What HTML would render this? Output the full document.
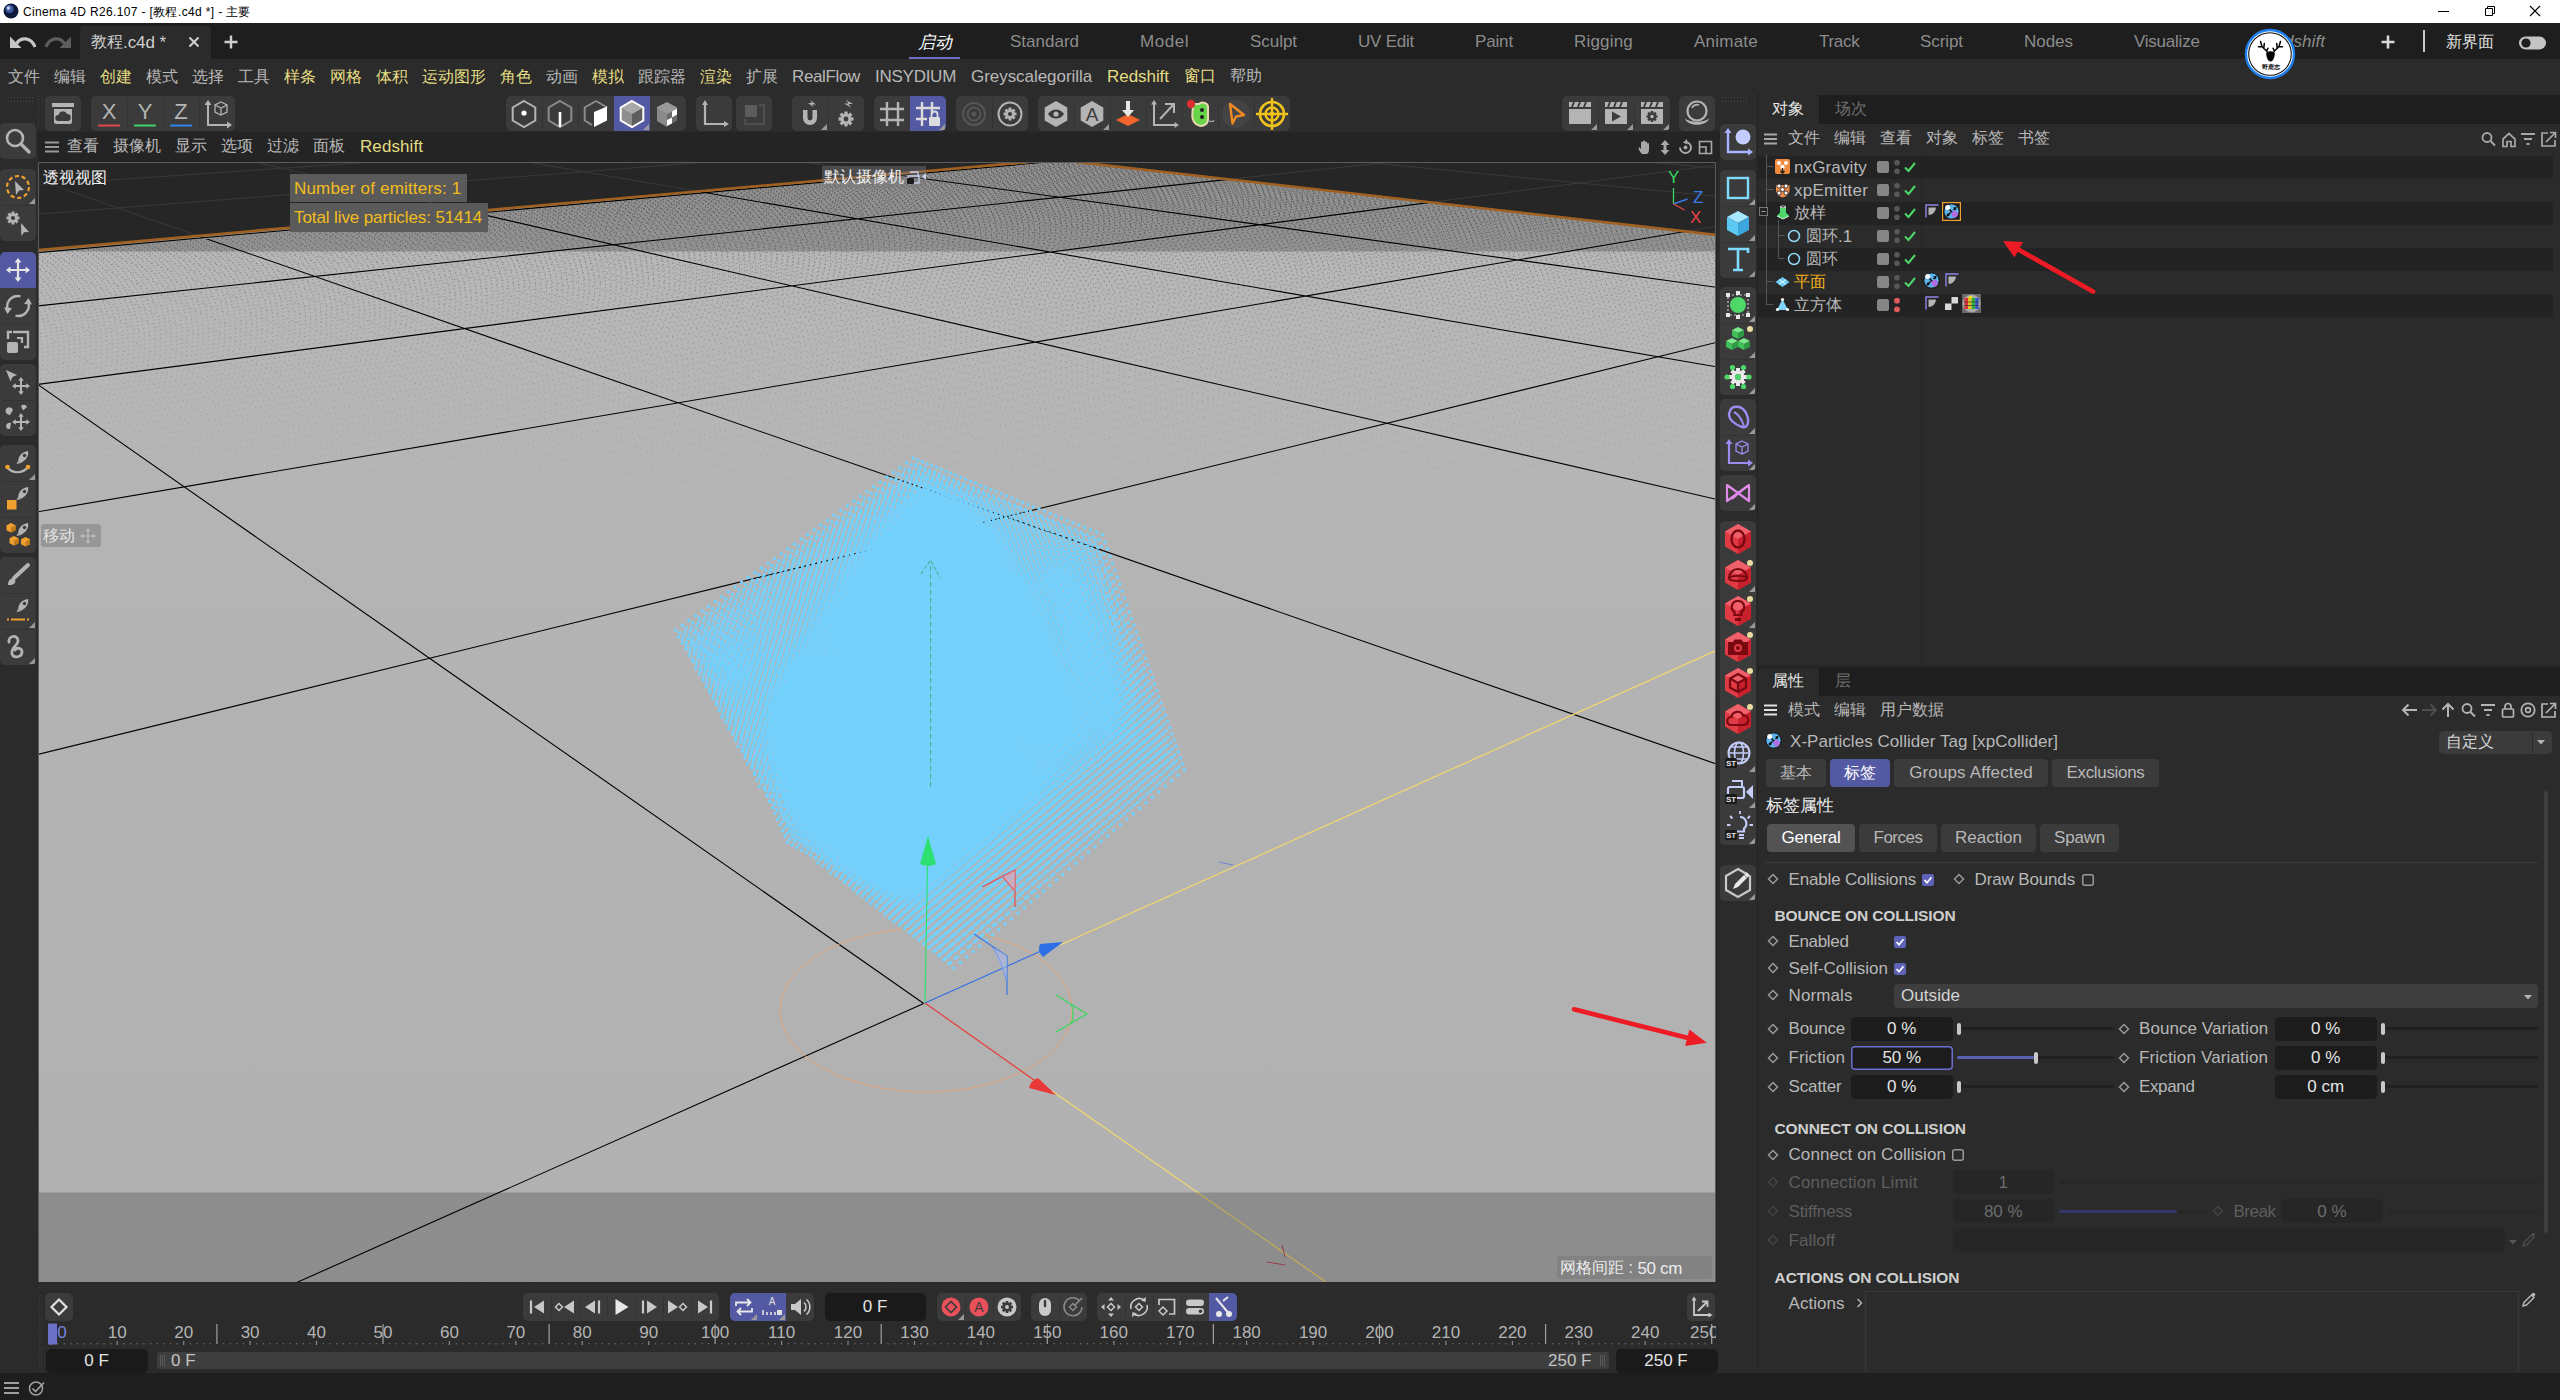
<!DOCTYPE html>
<html><head><meta charset="utf-8"><title>Cinema 4D</title><style>html,body{margin:0;padding:0}body{width:2560px;height:1400px;overflow:hidden;position:relative;background:#2b2b2b;font-family:"Liberation Sans",sans-serif}div,span,svg{position:absolute;display:block}span{white-space:nowrap}svg{overflow:hidden}</style></head><body>
<div style="left:0px;top:0px;width:2560px;height:23px;background:#fff;"></div>
<svg style="left:3px;top:3px;" width="16" height="16"><circle cx="8" cy="8" r="7.5" fill="#101a3c"/><circle cx="6.5" cy="6" r="4" fill="#3d5aa0"/><circle cx="5.5" cy="5" r="1.8" fill="#c8d4f0"/></svg>
<span style="top:4.5px;font-size:12px;line-height:14px;color:#000;letter-spacing:0.36px;left:23px;">Cinema 4D R26.107 - [</span>
<span style="top:4.5px;font-size:12px;line-height:14px;color:#000;left:153.3px;">教程</span>
<span style="top:4.5px;font-size:12px;line-height:14px;color:#000;letter-spacing:0.36px;left:178px;">.c4d *] - </span>
<span style="top:4.5px;font-size:12px;line-height:14px;color:#000;left:226.3px;">主要</span>
<svg style="left:2430px;top:0px;" width="130" height="22"><path d="M8 11.5h11" stroke="#000" stroke-width="1"/><path d="M55.5 8.5h7v7h-7z M57.5 8.5v-2h7v7h-2" fill="none" stroke="#000" stroke-width="1"/><path d="M100 6l10 10M110 6l-10 10" stroke="#000" stroke-width="1.1"/></svg>
<div style="left:0px;top:23px;width:2560px;height:36px;background:#1e1e1e;"></div>
<div style="left:80px;top:26px;width:131px;height:33px;background:#2b2b2b;border-radius:4px 4px 0 0;"></div>
<svg style="left:8px;top:30px;" width="66" height="24"><path d="M2 6.500V18H13.500z" fill="#c6c6c6"/><path d="M8.500 13.500C13 6.800 23 6.800 27 17" fill="none" stroke="#c6c6c6" stroke-width="3.200"/><path d="M63 6.500V18H51.500z" fill="#5e5e5e"/><path d="M56.500 13.500C52 6.800 42 6.800 38 17" fill="none" stroke="#5e5e5e" stroke-width="3.200"/></svg>
<span style="top:33.0px;font-size:16px;line-height:18px;color:#d0d0d0;left:91px;">教程</span>
<span style="top:32.5px;font-size:17px;line-height:19px;color:#d0d0d0;letter-spacing:-0.08px;left:123px;">.c4d *</span>
<svg style="left:187px;top:35px;" width="14" height="14"><path d="M2.5 2.5l9 9M11.5 2.5l-9 9" stroke="#d0d0d0" stroke-width="2"/></svg>
<svg style="left:223px;top:34px;" width="16" height="16"><path d="M8 1.5v13M1.5 8h13" stroke="#d0d0d0" stroke-width="2.4"/></svg>
<span style="top:32.5px;font-size:17px;line-height:19px;color:#fff;font-style:italic;left:918px;">启动</span>
<div style="left:909px;top:57px;width:51px;height:3px;background:#6c71c4;"></div>
<span style="top:31.5px;font-size:17px;line-height:19px;color:#8c8c8c;letter-spacing:0.00px;left:1010px;">Standard</span>
<span style="top:31.5px;font-size:17px;line-height:19px;color:#8c8c8c;letter-spacing:0.54px;left:1140px;">Model</span>
<span style="top:31.5px;font-size:17px;line-height:19px;color:#8c8c8c;letter-spacing:-0.04px;left:1250px;">Sculpt</span>
<span style="top:31.5px;font-size:17px;line-height:19px;color:#8c8c8c;letter-spacing:-0.23px;left:1358px;">UV Edit</span>
<span style="top:31.5px;font-size:17px;line-height:19px;color:#8c8c8c;letter-spacing:-0.15px;left:1475px;">Paint</span>
<span style="top:31.5px;font-size:17px;line-height:19px;color:#8c8c8c;letter-spacing:0.19px;left:1574px;">Rigging</span>
<span style="top:31.5px;font-size:17px;line-height:19px;color:#8c8c8c;letter-spacing:0.23px;left:1694px;">Animate</span>
<span style="top:31.5px;font-size:17px;line-height:19px;color:#8c8c8c;letter-spacing:-0.30px;left:1819px;">Track</span>
<span style="top:31.5px;font-size:17px;line-height:19px;color:#8c8c8c;letter-spacing:-0.08px;left:1920px;">Script</span>
<span style="top:31.5px;font-size:17px;line-height:19px;color:#8c8c8c;letter-spacing:-0.03px;left:2024px;">Nodes</span>
<span style="top:31.5px;font-size:17px;line-height:19px;color:#8c8c8c;letter-spacing:-0.23px;left:2134px;">Visualize</span>
<span style="top:31.5px;font-size:17px;line-height:19px;color:#8c8c8c;letter-spacing:0.08px;font-style:italic;left:2262px;">Redshift</span>
<svg style="left:2380px;top:34px;" width="16" height="16"><path d="M8 1.5v13M1.5 8h13" stroke="#d8d8d8" stroke-width="2.6"/></svg>
<div style="left:2423px;top:30px;width:2px;height:22px;background:#c8c8c8;"></div>
<span style="top:33.0px;font-size:16px;line-height:18px;color:#e0e0e0;left:2446px;">新界面</span>
<svg style="left:2518px;top:35px;" width="30" height="16"><rect x="1" y="1.5" width="27" height="13" rx="6.5" fill="#c4c4c4"/><circle cx="8" cy="8" r="4.6" fill="#1e1e1e"/></svg>
<div style="left:0px;top:59px;width:2560px;height:36px;background:#2b2b2b;"></div>
<span style="top:67.5px;font-size:16px;line-height:18px;color:#b8b8b8;left:8px;">文件</span>
<span style="top:67.5px;font-size:16px;line-height:18px;color:#b8b8b8;left:54px;">编辑</span>
<span style="top:67.5px;font-size:16px;line-height:18px;color:#e4dc82;left:100px;">创建</span>
<span style="top:67.5px;font-size:16px;line-height:18px;color:#b8b8b8;left:146px;">模式</span>
<span style="top:67.5px;font-size:16px;line-height:18px;color:#b8b8b8;left:192px;">选择</span>
<span style="top:67.5px;font-size:16px;line-height:18px;color:#b8b8b8;left:238px;">工具</span>
<span style="top:67.5px;font-size:16px;line-height:18px;color:#e4dc82;left:284px;">样条</span>
<span style="top:67.5px;font-size:16px;line-height:18px;color:#e4dc82;left:330px;">网格</span>
<span style="top:67.5px;font-size:16px;line-height:18px;color:#e4dc82;left:376px;">体积</span>
<span style="top:67.5px;font-size:16px;line-height:18px;color:#e4dc82;left:422px;">运动图形</span>
<span style="top:67.5px;font-size:16px;line-height:18px;color:#e4dc82;left:500px;">角色</span>
<span style="top:67.5px;font-size:16px;line-height:18px;color:#b8b8b8;left:546px;">动画</span>
<span style="top:67.5px;font-size:16px;line-height:18px;color:#e4dc82;left:592px;">模拟</span>
<span style="top:67.5px;font-size:16px;line-height:18px;color:#b8b8b8;left:638px;">跟踪器</span>
<span style="top:67.5px;font-size:16px;line-height:18px;color:#e4dc82;left:700px;">渲染</span>
<span style="top:67.5px;font-size:16px;line-height:18px;color:#b8b8b8;left:746px;">扩展</span>
<span style="top:66.5px;font-size:17px;line-height:19px;color:#b8b8b8;letter-spacing:-0.36px;left:792px;">RealFlow</span>
<span style="top:66.5px;font-size:17px;line-height:19px;color:#b8b8b8;letter-spacing:-0.26px;left:875px;">INSYDIUM</span>
<span style="top:66.5px;font-size:17px;line-height:19px;color:#b8b8b8;letter-spacing:-0.05px;left:971px;">Greyscalegorilla</span>
<span style="top:66.5px;font-size:17px;line-height:19px;color:#e4dc82;letter-spacing:-0.05px;left:1107px;">Redshift</span>
<span style="top:67.0px;font-size:16px;line-height:18px;color:#e4dc82;left:1184px;">窗口</span>
<span style="top:67.0px;font-size:16px;line-height:18px;color:#b8b8b8;left:1230px;">帮助</span>
<svg style="left:2244px;top:28px;" width="52" height="52"><circle cx="26" cy="26" r="24" fill="#fff" stroke="#1e80f0" stroke-width="2.400"/><circle cx="26" cy="26" r="21.300" fill="none" stroke="#111" stroke-width="1.100"/><path d="M26.500 33.500c-2.600 0-4.300-4.500-4.300-8.300c0-2.700 8.600-2.700 8.600 0c0 3.800-1.700 8.300-4.300 8.300z" fill="#000"/><path d="M23 23.500L18 18.500L16.500 13.500M18 18.500L14.500 18.800M19.800 20.500L20.300 15.500M22.600 23L23.900 20.300M30 23.500L35 18.500L36.500 13.500M35 18.500L38.500 18.800M33.200 20.500L32.700 15.500M30.400 23L29.100 20.300" fill="none" stroke="#000" stroke-width="1.500" stroke-linecap="round" stroke-linejoin="round"/><text x="26.500" y="41" font-size="6.300" font-family="Liberation Sans" font-weight="bold" text-anchor="middle" fill="#111">野鹿志</text></svg>
<svg style="left:45px;top:96px;background:#3b3b3b;border-radius:5px 5px 5px 5px" width="36" height="35"><path d="M7 7h22v4H7z" fill="#b4b4b4"/><path d="M9 13h18v13a2 2 0 0 1-2 2H11a2 2 0 0 1-2-2z" fill="#b4b4b4"/><path d="M13 25a3 3 0 0 1 .5-6a4.5 4.5 0 0 1 8.5-1a3.5 3.5 0 0 1 .5 7z" fill="#3b3b3b"/></svg>
<svg style="left:91px;top:96px;background:#3b3b3b;border-radius:5px 0px 0px 5px" width="36" height="35"><text x="18" y="23" font-size="22" font-family="Liberation Sans" text-anchor="middle" fill="#b4b4b4">X</text><path d="M8 29.5h20" stroke="#e0484c" stroke-width="2.2" stroke-linecap="round"/></svg>
<svg style="left:127px;top:96px;background:#3b3b3b;border-radius:0px 0px 0px 0px" width="36" height="35"><text x="18" y="23" font-size="22" font-family="Liberation Sans" text-anchor="middle" fill="#b4b4b4">Y</text><path d="M8 29.5h20" stroke="#3fd36a" stroke-width="2.2" stroke-linecap="round"/><path d="M0.5 3v29" stroke="#333" stroke-width="1"/></svg>
<svg style="left:163px;top:96px;background:#3b3b3b;border-radius:0px 0px 0px 0px" width="36" height="35"><text x="18" y="23" font-size="22" font-family="Liberation Sans" text-anchor="middle" fill="#b4b4b4">Z</text><path d="M8 29.5h20" stroke="#2f86e8" stroke-width="2.2" stroke-linecap="round"/><path d="M0.5 3v29" stroke="#333" stroke-width="1"/></svg>
<svg style="left:199px;top:96px;background:#3b3b3b;border-radius:0px 5px 5px 0px" width="36" height="35"><path d="M9 7v22h21" fill="none" stroke="#b4b4b4" stroke-width="2"/><path d="M9 4l-3.5 5h7zM33 29l-5-3.5v7z" fill="#b4b4b4"/><path d="M22 6l6 3v7l-6 3-6-3V9z M16 9l6 3 6-3M22 12v7" fill="none" stroke="#b4b4b4" stroke-width="1.3"/><path d="M0.5 3v29" stroke="#333" stroke-width="1"/></svg>
<svg style="left:506px;top:96px;background:#3b3b3b;border-radius:5px 0px 0px 5px" width="36" height="35"><path d="M18 5l11.3 6.5v13L18 31 6.7 24.5v-13z" fill="none" stroke="#b4b4b4" stroke-width="2"/><circle cx="18" cy="17" r="2.6" fill="#fff"/></svg>
<svg style="left:542px;top:96px;background:#3b3b3b;border-radius:0px 0px 0px 0px" width="36" height="35"><path d="M18 5l11.3 6.5v13L18 31 6.7 24.5v-13z" fill="none" stroke="#8c8c8c" stroke-width="2"/><path d="M18 16v15" stroke="#fff" stroke-width="2.6"/><path d="M0.5 3v29" stroke="#333" stroke-width="1"/></svg>
<svg style="left:578px;top:96px;background:#3b3b3b;border-radius:0px 0px 0px 0px" width="36" height="35"><path d="M18 5L6.7 11.5v13L14 29" fill="none" stroke="#8c8c8c" stroke-width="2"/><path d="M18 5l11.3 6.5" stroke="#8c8c8c" stroke-width="2"/><path d="M16 16l13-5.5v14L16 31z" fill="#fff"/><path d="M0.5 3v29" stroke="#333" stroke-width="1"/></svg>
<svg style="left:614px;top:96px;background:#5459a3;border-radius:0px 0px 0px 0px" width="36" height="35"><path d="M18 5l11.3 6.5v13L18 31 6.7 24.5v-13z" fill="#8e8e8e"/><path d="M18 18l11.3-6.5v13L18 31z" fill="#5e5e5e"/><path d="M18 5l11.3 6.5L18 18 6.7 11.5z" fill="#a9a9a9"/><path d="M18 5l11.3 6.5v13L18 31 6.7 24.5v-13z" fill="none" stroke="#fff" stroke-width="2"/><path d="M35 34 h-6 l6 -6z" fill="#9a9a9a"/></svg>
<svg style="left:650px;top:96px;background:#3b3b3b;border-radius:0px 5px 5px 0px" width="36" height="35"><path d="M17 6l10 5.5v3.5l-10 5-10-5.5V11z" fill="#9a9a9a"/><path d="M7 12l10 5.5V31L7 25z" fill="#8a8a8a"/><path d="M17 18l5-2.6v6L17 24zM22 21.4l5-2.6v6L22 27.4z" fill="#6a6a6a"/><path d="M22 15.4l5-2.6v6L22 21.4zM17 24l5-2.6v6L17 30z" fill="#fff"/></svg>
<svg style="left:696px;top:96px;background:#3b3b3b;border-radius:5px 5px 5px 5px" width="36" height="35"><path d="M9 7v21h21" fill="none" stroke="#b4b4b4" stroke-width="2.2"/><path d="M9 4l-3 5h6zM33 28l-5-3v6z" fill="#b4b4b4"/></svg>
<svg style="left:736px;top:96px;background:#3b3b3b;border-radius:5px 5px 5px 5px" width="36" height="35"><path d="M9 9h12v12H9z" fill="#5c5c5c"/><path d="M23 9h5v19H9v-5" fill="none" stroke="#4e4e4e" stroke-width="2"/></svg>
<svg style="left:792px;top:96px;background:#3b3b3b;border-radius:5px 0px 0px 5px" width="36" height="35"><path d="M11 14v8a7 7 0 0 0 14 0v-8h-4.5v8a2.5 2.5 0 0 1-5 0v-8z" fill="#b4b4b4"/><path d="M18 4l6 4.5h-4l2 3-6-4.5h4z" fill="#b4b4b4"/><path d="M35 34 h-6 l6 -6z" fill="#9a9a9a"/></svg>
<svg style="left:828px;top:96px;background:#3b3b3b;border-radius:0px 5px 5px 0px" width="36" height="35"><path d="M18 4l7 4h-4.5l2.5 3.5-7-4h4.5z" fill="#b4b4b4"/><g transform="translate(18,23)"><circle r="5.55" fill="#b4b4b4"/><rect x="-1.65" y="-7.50" width="3.30" height="15.00" transform="rotate(0)" fill="#b4b4b4"/><rect x="-1.65" y="-7.50" width="3.30" height="15.00" transform="rotate(45)" fill="#b4b4b4"/><rect x="-1.65" y="-7.50" width="3.30" height="15.00" transform="rotate(90)" fill="#b4b4b4"/><rect x="-1.65" y="-7.50" width="3.30" height="15.00" transform="rotate(135)" fill="#b4b4b4"/><circle r="2.40" fill="#3b3b3b"/></g><path d="M0.5 3v29" stroke="#333" stroke-width="1"/></svg>
<svg style="left:874px;top:96px;background:#3b3b3b;border-radius:5px 0px 0px 5px" width="36" height="35"><path d="M13 6v24M24 6v24M6 13h24M6 24h24" stroke="#b4b4b4" stroke-width="2.4"/></svg>
<svg style="left:910px;top:96px;background:#5459a3;border-radius:0px 5px 5px 0px" width="36" height="35"><path d="M12 6v24M22 6v12M6 12h24M6 23h11" stroke="#dcdcdc" stroke-width="2.4"/><rect x="19" y="21" width="11" height="9" rx="1" fill="#dcdcdc"/><path d="M21.5 21v-2.5a3 3 0 0 1 6 0V21" fill="none" stroke="#dcdcdc" stroke-width="1.8"/><path d="M35 34 h-6 l6 -6z" fill="#9a9a9a"/></svg>
<svg style="left:956px;top:96px;background:#3b3b3b;border-radius:5px 0px 0px 5px" width="36" height="35"><circle cx="18" cy="18" r="11" fill="none" stroke="#555" stroke-width="2"/><circle cx="18" cy="18" r="6.5" fill="none" stroke="#555" stroke-width="2"/><circle cx="18" cy="18" r="2.5" fill="#555"/></svg>
<svg style="left:992px;top:96px;background:#3b3b3b;border-radius:0px 5px 5px 0px" width="36" height="35"><circle cx="18" cy="18" r="11.5" fill="none" stroke="#b4b4b4" stroke-width="2"/><g transform="translate(18,18)"><circle r="4.81" fill="#b4b4b4"/><rect x="-1.43" y="-6.50" width="2.86" height="13.00" transform="rotate(0)" fill="#b4b4b4"/><rect x="-1.43" y="-6.50" width="2.86" height="13.00" transform="rotate(45)" fill="#b4b4b4"/><rect x="-1.43" y="-6.50" width="2.86" height="13.00" transform="rotate(90)" fill="#b4b4b4"/><rect x="-1.43" y="-6.50" width="2.86" height="13.00" transform="rotate(135)" fill="#b4b4b4"/><circle r="2.08" fill="#3b3b3b"/></g><path d="M0.5 3v29" stroke="#333" stroke-width="1"/></svg>
<svg style="left:1038px;top:96px;background:#3b3b3b;border-radius:5px 0px 0px 5px" width="36" height="35"><path d="M18 5l11.3 6.5v13L18 31 6.7 24.5v-13z" fill="#b4b4b4"/><path d="M10 18c4-6 12-6 16 0c-4 6-12 6-16 0z" fill="#3b3b3b"/><circle cx="18" cy="18" r="2.6" fill="#b4b4b4"/></svg>
<svg style="left:1074px;top:96px;background:#3b3b3b;border-radius:0px 0px 0px 0px" width="36" height="35"><path d="M18 5l11.3 6.5v13L18 31 6.7 24.5v-13z" fill="#b4b4b4"/><text x="18" y="25" font-size="19" font-family="Liberation Sans" text-anchor="middle" fill="#3b3b3b">A</text><path d="M35 34 h-6 l6 -6z" fill="#9a9a9a"/><path d="M0.5 3v29" stroke="#333" stroke-width="1"/></svg>
<svg style="left:1110px;top:96px;background:#3b3b3b;border-radius:0px 0px 0px 0px" width="36" height="35"><path d="M6 24l12-6 12 6-12 6z" fill="#f0642d"/><path d="M16 5h4v9h4l-6 7-6-7h4z" fill="#e8e8e8"/><path d="M0.5 3v29" stroke="#333" stroke-width="1"/></svg>
<svg style="left:1146px;top:96px;background:#3b3b3b;border-radius:0px 0px 0px 0px" width="36" height="35"><path d="M8 7v22h22" fill="none" stroke="#b4b4b4" stroke-width="2"/><path d="M8 4l-3 4.5h6zM33 29l-4.5-3v6z" fill="#b4b4b4"/><path d="M14 23L27 9M19 8h9v9" fill="none" stroke="#b4b4b4" stroke-width="2"/><path d="M0.5 3v29" stroke="#333" stroke-width="1"/></svg>
<svg style="left:1182px;top:96px;background:#3b3b3b;border-radius:0px 0px 0px 0px" width="36" height="35"><path d="M11 8c0 10-3 14 3 20c5 4 12 1 12-5V11c0-4-6-6-9-3z" fill="#69d34a" stroke="#e9d8b0" stroke-width="2"/><circle cx="9" cy="8" r="4.2" fill="#d83030"/><circle cx="20" cy="14" r="2" fill="#1f1f1f"/><circle cx="20" cy="21" r="2" fill="#1f1f1f"/><path d="M27 26c2-3 3 2 5-2" fill="none" stroke="#aaa" stroke-width="1.2"/><path d="M0.5 3v29" stroke="#333" stroke-width="1"/></svg>
<svg style="left:1218px;top:96px;background:#3b3b3b;border-radius:0px 0px 0px 0px" width="36" height="35"><circle cx="18" cy="18" r="14" fill="#444"/><path d="M12 8l14 11-8 1.5-3.5 7z" fill="none" stroke="#f08a24" stroke-width="2.4" stroke-linejoin="round"/><path d="M0.5 3v29" stroke="#333" stroke-width="1"/></svg>
<svg style="left:1254px;top:96px;background:#3b3b3b;border-radius:0px 5px 5px 0px" width="36" height="35"><circle cx="18" cy="18" r="12" fill="none" stroke="#f2c21c" stroke-width="2.6"/><circle cx="18" cy="18" r="6.5" fill="none" stroke="#f2c21c" stroke-width="2.4"/><path d="M18 2v32M2 18h32" stroke="#f2c21c" stroke-width="2.4"/><circle cx="18" cy="18" r="2.4" fill="#f2c21c"/><path d="M0.5 3v29" stroke="#333" stroke-width="1"/></svg>
<svg style="left:1562px;top:96px;background:#3b3b3b;border-radius:5px 0px 0px 5px" width="36" height="35"><path d="M7 13h22v15H7z" fill="#b4b4b4"/><path d="M7 6h22v5H7z" fill="#b4b4b4"/><path d="M12 6l-2 5M18 6l-2 5M24 6l-2 5" stroke="#3b3b3b" stroke-width="2"/><path d="M35 34 h-6 l6 -6z" fill="#9a9a9a"/></svg>
<svg style="left:1598px;top:96px;background:#3b3b3b;border-radius:0px 0px 0px 0px" width="36" height="35"><path d="M7 13h22v15H7z" fill="#b4b4b4"/><path d="M7 6h22v5H7z" fill="#b4b4b4"/><path d="M12 6l-2 5M18 6l-2 5M24 6l-2 5" stroke="#3b3b3b" stroke-width="2"/><path d="M14 15.5l9 5-9 5z" fill="#3b3b3b"/><path d="M35 34 h-6 l6 -6z" fill="#9a9a9a"/><path d="M0.5 3v29" stroke="#333" stroke-width="1"/></svg>
<svg style="left:1634px;top:96px;background:#3b3b3b;border-radius:0px 5px 5px 0px" width="36" height="35"><path d="M7 13h22v15H7z" fill="#b4b4b4"/><path d="M7 6h22v5H7z" fill="#b4b4b4"/><path d="M12 6l-2 5M18 6l-2 5M24 6l-2 5" stroke="#3b3b3b" stroke-width="2"/><g transform="translate(18,20.5)"><circle r="4.07" fill="#3b3b3b"/><rect x="-1.21" y="-5.50" width="2.42" height="11.00" transform="rotate(0)" fill="#3b3b3b"/><rect x="-1.21" y="-5.50" width="2.42" height="11.00" transform="rotate(45)" fill="#3b3b3b"/><rect x="-1.21" y="-5.50" width="2.42" height="11.00" transform="rotate(90)" fill="#3b3b3b"/><rect x="-1.21" y="-5.50" width="2.42" height="11.00" transform="rotate(135)" fill="#3b3b3b"/><circle r="1.76" fill="#b4b4b4"/></g><path d="M35 34 h-6 l6 -6z" fill="#9a9a9a"/><path d="M0.5 3v29" stroke="#333" stroke-width="1"/></svg>
<svg style="left:1679px;top:96px;background:#3b3b3b;border-radius:5px 5px 5px 5px" width="36" height="35"><circle cx="18" cy="15" r="9.5" fill="none" stroke="#b4b4b4" stroke-width="2.2"/><path d="M13 12a6 6 0 0 1 7-3" fill="none" stroke="#b4b4b4" stroke-width="1.6"/><path d="M6 22c1 9 23 9 24 0c-3 5-21 5-24 0z" fill="#b4b4b4"/></svg>
<svg style="left:8px;top:97px" width="26" height="6"><path d="M0 .5h26M0 4.5h26" stroke="#444" stroke-width="1" stroke-dasharray="1 2"/></svg>
<svg style="left:38px;top:99px" width="6" height="30"><path d="M.5 0v30M4.5 0v30" stroke="#444" stroke-width="1" stroke-dasharray="1 2"/></svg>
<svg style="left:1722px;top:97px" width="26" height="6"><path d="M0 .5h26M0 4.5h26" stroke="#444" stroke-width="1" stroke-dasharray="1 2"/></svg>
<div style="left:0px;top:95px;width:38px;height:1280px;background:#2b2b2b;"></div>
<svg style="left:8px;top:97px" width="26" height="6"><path d="M0 .5h26M0 4.500h26" stroke="#4a4a4a" stroke-width="1" stroke-dasharray="1 2"/></svg>
<svg style="left:0px;top:123px;background:#3b3b3b;border-radius:5px 5px 5px 5px" width="36" height="36"><circle cx="15" cy="15" r="8" fill="none" stroke="#b4b4b4" stroke-width="2.6"/><path d="M21 21l8 8" stroke="#b4b4b4" stroke-width="3.2" stroke-linecap="round"/></svg>
<svg style="left:0px;top:169px;background:#3b3b3b;border-radius:5px 5px 0px 0px" width="36" height="36"><circle cx="18" cy="18" r="11" fill="none" stroke="#f0a030" stroke-width="2.2" stroke-dasharray="4.2 2.7"/><path d="M15 12l9 9-5 .5-3 4.5z" fill="#b4b4b4"/><path d="M35 35 h-6 l6 -6z" fill="#9a9a9a"/></svg>
<svg style="left:0px;top:205px;background:#3b3b3b;border-radius:0px 0px 5px 5px" width="36" height="36"><g transform="translate(13,13)"><circle r="4.81" fill="#b4b4b4"/><rect x="-1.43" y="-6.50" width="2.86" height="13.00" transform="rotate(0)" fill="#b4b4b4"/><rect x="-1.43" y="-6.50" width="2.86" height="13.00" transform="rotate(45)" fill="#b4b4b4"/><rect x="-1.43" y="-6.50" width="2.86" height="13.00" transform="rotate(90)" fill="#b4b4b4"/><rect x="-1.43" y="-6.50" width="2.86" height="13.00" transform="rotate(135)" fill="#b4b4b4"/><circle r="2.08" fill="#3b3b3b"/></g><path d="M21 18l8 9-5 .3-2.6 4z" fill="#b4b4b4"/><path d="M3 0.5h30" stroke="#333" stroke-width="1"/></svg>
<svg style="left:0px;top:252px;background:#5459a3;border-radius:5px 5px 0px 0px" width="36" height="36"><path d="M8 18h20M18 8v20" stroke="#e6e6e6" stroke-width="2.2"/><path d="M18 6l3.4 4.4h-6.8zM18 30l3.4 -4.4h-6.8zM6 18l4.4 3.4v-6.8zM30 18l-4.4 3.4v-6.8z" fill="#e6e6e6"/></svg>
<svg style="left:0px;top:288px;background:#3b3b3b;border-radius:0px 0px 0px 0px" width="36" height="36"><path d="M7.5 21a10.5 10.5 0 0 1 13-12.6" fill="none" stroke="#b4b4b4" stroke-width="2.4"/><path d="M28.500 15a10.5 10.5 0 0 1-13 12.600" fill="none" stroke="#b4b4b4" stroke-width="2.4"/><path d="M4 19.5l3.500 6.500 4.500-6zM32 16.500l-3.500-6.500-4.500 6z" fill="#b4b4b4"/></svg>
<svg style="left:0px;top:324px;background:#3b3b3b;border-radius:0px 0px 5px 5px" width="36" height="36"><path d="M13 8h15v15h-4" fill="none" stroke="#b4b4b4" stroke-width="2.4"/><path d="M8 16h8v-3" fill="none" stroke="#b4b4b4" stroke-width="0"/><rect x="7" y="18" width="11" height="11" rx="2" fill="#b4b4b4"/><path d="M8 15V8h4" fill="none" stroke="#b4b4b4" stroke-width="2.4"/><path d="M17 14h5v5" fill="none" stroke="#b4b4b4" stroke-width="2.2"/><path d="M3 0.5h30" stroke="#333" stroke-width="1"/></svg>
<svg style="left:0px;top:364px;background:#3b3b3b;border-radius:5px 5px 0px 0px" width="36" height="36"><path d="M6 6l11 5-4.500 2-2 4.500z" fill="#b4b4b4"/><path d="M14 22h14M21 15v14" stroke="#b4b4b4" stroke-width="2"/><path d="M21 13l2.8 3.8h-5.6zM21 31l2.8 -3.8h-5.6zM12 22l3.8 2.8v-5.6zM30 22l-3.8 2.8v-5.6z" fill="#b4b4b4"/></svg>
<svg style="left:0px;top:400px;background:#3b3b3b;border-radius:0px 0px 5px 5px" width="36" height="36"><path d="M7 8a4 4 0 0 1 6 2l-3 5a4 4 0 0 1-3-7zM21 6a3.500 3.500 0 0 1 6 1l-4 3.500zM6 26a3.500 3.500 0 0 1 5-3l-1 6a3.500 3.500 0 0 1-4-3z" fill="#b4b4b4"/><path d="M14 22h14M21 15v14" stroke="#b4b4b4" stroke-width="2"/><path d="M21 13l2.8 3.8h-5.6zM21 31l2.8 -3.8h-5.6zM12 22l3.8 2.8v-5.6zM30 22l-3.8 2.8v-5.6z" fill="#b4b4b4"/><path d="M3 0.5h30" stroke="#333" stroke-width="1"/></svg>
<svg style="left:0px;top:445px;background:#3b3b3b;border-radius:5px 5px 0px 0px" width="36" height="36"><path d="M18 16c1-6 4-9 10-10c1 5-2 9-7 12z" fill="#b4b4b4"/><circle cx="24.500" cy="10.500" r="1.700" fill="#3b3b3b"/><path d="M16.500 19l1.500-3 3 2z" fill="#b4b4b4"/><path d="M7 22c5 7 16 7 21 0" fill="none" stroke="#b4b4b4" stroke-width="2.2"/><circle cx="7.500" cy="22" r="2.300" fill="#f0a030"/><circle cx="28" cy="22" r="2.300" fill="#f0a030"/><path d="M35 35 h-6 l6 -6z" fill="#9a9a9a"/></svg>
<svg style="left:0px;top:481px;background:#3b3b3b;border-radius:0px 0px 0px 0px" width="36" height="36"><path d="M18 16c1-6 4-9 10-10c1 5-2 9-7 12z" fill="#b4b4b4"/><circle cx="24.500" cy="10.500" r="1.700" fill="#3b3b3b"/><path d="M16.500 19l1.500-3 3 2z" fill="#b4b4b4"/><rect x="7" y="19" width="9.500" height="9.500" fill="#f0a030"/><path d="M3 0.5h30" stroke="#333" stroke-width="1"/></svg>
<svg style="left:0px;top:517px;background:#3b3b3b;border-radius:0px 0px 5px 5px" width="36" height="36"><path d="M18 16c1-6 4-9 10-10c1 5-2 9-7 12z" fill="#b4b4b4"/><circle cx="24.500" cy="10.500" r="1.700" fill="#3b3b3b"/><path d="M16.500 19l1.500-3 3 2z" fill="#b4b4b4"/><path d="M11 6l4.5 2.25v5l-4.5 2.25l-4.5 -2.25v-5z" fill="#f0a030"/><path d="M11 10.5l4.5 -2.25v5l-4.5 2.25z" fill="#c47a18"/><path d="M14 19l4.5 2.25v5l-4.5 2.25l-4.5 -2.25v-5z" fill="#f0a030"/><path d="M14 23.5l4.5 -2.25v5l-4.5 2.25z" fill="#c47a18"/><path d="M25.5 20l4.5 2.25v5l-4.5 2.25l-4.5 -2.25v-5z" fill="#f0a030"/><path d="M25.5 24.5l4.5 -2.25v5l-4.5 2.25z" fill="#c47a18"/><path d="M3 0.5h30" stroke="#333" stroke-width="1"/></svg>
<svg style="left:0px;top:557px;background:#3b3b3b;border-radius:5px 5px 0px 0px" width="36" height="36"><path d="M14 21L28 8" stroke="#b4b4b4" stroke-width="4" stroke-linecap="round"/><path d="M8 28c0-5 3-7.500 6.500-6c2 3 .5 6.500-6.500 6z" fill="#b4b4b4"/></svg>
<svg style="left:0px;top:593px;background:#3b3b3b;border-radius:0px 0px 0px 0px" width="36" height="36"><path d="M18 16c1-6 4-9 10-10c1 5-2 9-7 12z" fill="#b4b4b4"/><circle cx="24.500" cy="10.500" r="1.700" fill="#3b3b3b"/><path d="M16.500 19l1.500-3 3 2z" fill="#b4b4b4"/><path d="M7 26.500h2M11 26.500h14M27 26.500h2" stroke="#f0a030" stroke-width="2.200"/><path d="M35 35 h-6 l6 -6z" fill="#9a9a9a"/><path d="M3 0.5h30" stroke="#333" stroke-width="1"/></svg>
<svg style="left:0px;top:629px;background:#3b3b3b;border-radius:0px 0px 5px 5px" width="36" height="36"><path d="M9 13c-1-6 8-8 9-2c1 5-8 8-6 14c2 5 10 3 10-2c0-4-5-5-7-2" fill="none" stroke="#b4b4b4" stroke-width="2.800" stroke-linecap="round"/><path d="M35 35 h-6 l6 -6z" fill="#9a9a9a"/><path d="M3 0.5h30" stroke="#333" stroke-width="1"/></svg>
<div style="left:38px;top:132px;width:1682px;height:30px;background:#242424;"></div>
<svg style="left:44px;top:139px;" width="16" height="16"><path d="M1 3.5h14M1 8h14M1 12.500h14" stroke="#9a9a9a" stroke-width="1.800"/></svg>
<span style="top:137.0px;font-size:16px;line-height:18px;color:#b8b8b8;left:67px;">查看</span>
<span style="top:137.0px;font-size:16px;line-height:18px;color:#b8b8b8;left:113px;">摄像机</span>
<span style="top:137.0px;font-size:16px;line-height:18px;color:#b8b8b8;left:175px;">显示</span>
<span style="top:137.0px;font-size:16px;line-height:18px;color:#b8b8b8;left:221px;">选项</span>
<span style="top:137.0px;font-size:16px;line-height:18px;color:#b8b8b8;left:267px;">过滤</span>
<span style="top:137.0px;font-size:16px;line-height:18px;color:#b8b8b8;left:313px;">面板</span>
<span style="top:136.5px;font-size:17px;line-height:19px;color:#e4dc82;letter-spacing:0.08px;left:360px;">Redshift</span>
<svg style="left:1636px;top:138px;" width="80" height="18"><path d="M6 16c-3-3-4-6-3-7l2 2V4.500a1 1 0 0 1 2 0V3.500a1 1 0 0 1 2 0v1a1 1 0 0 1 2 0v1.500a1 1 0 0 1 2 0V12c0 2-1 3-2 4z" fill="#a8a8a8"/><path d="M29 2l4.500 5h-3v5h3L29 17l-4.500-5h3V7h-3z" fill="#a8a8a8"/><path d="M44 9.500a5.500 5.500 0 1 0 5.500-5.500" fill="none" stroke="#a8a8a8" stroke-width="2"/><path d="M51 1l-4 3.500 4.500 2z" fill="#a8a8a8"/><circle cx="49.500" cy="9.500" r="2" fill="#a8a8a8"/><path d="M63.500 3.500h12v12h-12z" fill="none" stroke="#a8a8a8" stroke-width="1.600"/><path d="M63.500 9h6.500v6.500" fill="none" stroke="#a8a8a8" stroke-width="1.600"/></svg>
<svg style="left:38px;top:162px" width="1678" height="1120" viewBox="38 162 1678 1120"><defs><linearGradient id="pl" gradientUnits="userSpaceOnUse" x1="0" y1="162" x2="0" y2="1282"><stop offset="0" stop-color="#b3b3b3"/><stop offset="0.1" stop-color="#b7b7b7"/><stop offset="0.45" stop-color="#b3b3b3"/><stop offset="1" stop-color="#b1b1b1"/></linearGradient><linearGradient id="mn" gradientUnits="userSpaceOnUse" x1="0" y1="162" x2="0" y2="1282"><stop offset="0" stop-color="#6a6a6a" stop-opacity="1"/><stop offset="0.05" stop-color="#6a6a6a" stop-opacity=".95"/><stop offset="0.085" stop-color="#707070" stop-opacity=".7"/><stop offset="0.15" stop-color="#787878" stop-opacity=".5"/><stop offset="0.22" stop-color="#787878" stop-opacity=".3"/><stop offset="0.3" stop-color="#787878" stop-opacity=".13"/><stop offset="0.4" stop-color="#787878" stop-opacity="0"/></linearGradient><pattern id="dots" width="4.600" height="4.600" patternUnits="userSpaceOnUse" patternTransform="rotate(-36)"><circle cx="2.300" cy="2.300" r="1.450" fill="#74d1fd"/></pattern><pattern id="dots2" width="4.600" height="4.600" patternUnits="userSpaceOnUse" patternTransform="rotate(-36)"><circle cx="2.300" cy="2.300" r="2.100" fill="#74d1fd"/></pattern></defs><rect x="38" y="162" width="1678" height="1120" fill="#303030"/><path d="M477.9 7010.6L3235.1 28.3M-523.5 6474.2L-545.0 26.7M-315.6 1555.0L3118.3 26.7M2155.9 1864.3L-476.1 25.5M-415.9 865.8L3008.5 25.3M2613.9 1076.3L-409.7 24.4M-1720.6 811.0L2905.0 23.9M3241.7 851.3L-345.6 23.4M-1380.3 569.6L2807.4 22.5M3246.5 630.3L-283.7 22.3M-1192.8 436.6L2715.2 21.3M3249.3 497.3L-223.9 21.3M-1074.0 352.4L2628.0 20.1M3251.2 408.6L-166.0 20.4M-992.1 294.3L2545.2 19.0M3252.6 345.1L-110.1 19.4M-932.1 251.8L2466.7 17.9M3253.6 297.5L-55.9 18.5M-886.3 219.3L2392.1 16.9M3254.4 260.5L-3.5 17.7M-850.2 193.7L2321.1 16.0M3255.0 230.8L47.3 16.8M-821.1 173.0L2253.4 15.1M3255.6 206.5L96.5 16.0M-797.0 155.9L2188.8 14.2M3256.0 186.3L144.3 15.2M-776.7 141.6L2127.2 13.4M3256.4 169.1L190.6 14.4M-759.5 129.4L2068.3 12.6M3256.7 154.5L235.6 13.7M-744.7 118.8L2011.9 11.8M3256.9 141.7L279.3 13.0M-731.8 109.7L1957.9 11.1M3257.2 130.6L321.7 12.2M-720.4 101.6L1906.2 10.4M3257.4 120.8L363.0 11.6M-710.4 94.5L1856.5 9.7M3257.6 112.0L403.1 10.9M-701.4 88.2L1808.8 9.1M3257.8 104.2L442.1 10.2M-693.4 82.5L1763.0 8.4M3257.9 97.2L480.1 9.6M-686.2 77.3L1718.9 7.8M3258.0 90.8L517.0 9.0M-679.6 72.6L1676.4 7.3M3258.2 85.0L553.0 8.4M-673.6 68.4L1635.6 6.7M3258.3 79.7L588.0 7.8M-668.1 64.5L1596.2 6.2M3258.4 74.9L622.2 7.2M-663.1 61.0L1558.2 5.7M3258.5 70.4L655.5 6.7M-658.5 57.7L1521.5 5.2M3258.6 66.3L687.9 6.1M-654.2 54.6L1486.1 4.7M3258.6 62.5L719.6 5.6M-650.2 51.8L1451.9 4.2M3258.7 59.0L750.5 5.1M-646.5 49.2L1418.8 3.8M3258.8 55.7L780.7 4.6M-643.1 46.7L1386.8 3.4M3258.9 52.6L810.1 4.1M-639.9 44.5L1355.8 2.9M3258.9 49.7L838.8 3.6M-636.8 42.3L1325.8 2.5M3259.0 47.0L866.9 3.2M-634.0 40.3L1296.7 2.2M3259.0 44.5L894.3 2.7M-631.4 38.4L1268.6 1.8M3259.1 42.1L921.2 2.3M-628.9 36.7L1241.2 1.4M3259.1 39.8L947.4 1.8M-626.5 35.0L1214.7 1.0M3259.2 37.7L973.0 1.4M-624.3 33.4L1189.0 0.7M3259.2 35.7L998.1 1.0M-622.2 31.9L1164.0 0.4M3259.3 33.8L1022.6 0.6M-620.2 30.5L1139.7 0.0M3259.3 32.0L1046.6 0.2M-618.3 29.1L1116.0 -0.3M3259.3 30.3L1070.1 -0.2" stroke="#484848" stroke-width="1" fill="none"/><clipPath id="pc"><polygon points="-842.4,328.5 1055.4,159.6 3336.3,419.4 3000,2000 -1000,2000"/></clipPath><polygon points="-842.4,328.5 1055.4,159.6 3336.3,419.4 3000,2000 -1000,2000" fill="url(#pl)"/><g clip-path="url(#pc)"><path d="M-170.2 2554.6L2749.3 349.6M1550.4 2906.1L-325.9 283.8M-192.6 2401.1L2718.4 346.2M1639.2 2753.2L-305.4 281.9M-212.4 2264.8L2688.2 342.7M1719.3 2615.4L-285.2 280.1M-230.1 2143.0L2658.5 339.4M1791.9 2490.6L-265.2 278.3M-246.0 2033.5L2629.3 336.1M1857.9 2377.0L-245.4 276.6M-260.4 1934.6L2600.7 332.8M1918.2 2273.2L-225.9 274.8M-273.5 1844.8L2572.6 329.7M1973.6 2177.9L-206.6 273.1M-285.4 1762.8L2545.0 326.5M2024.6 2090.2L-187.5 271.4M-296.3 1687.7L2517.8 323.5M2071.7 2009.2L-168.5 269.7M-306.4 1618.7L2491.2 320.5M2115.3 1934.1L-149.8 268.0M-324.2 1496.1L2439.2 314.6M2193.6 1799.3L-113.0 264.8M-332.2 1441.5L2413.9 311.7M2228.9 1738.6L-94.9 263.1M-339.6 1390.6L2389.0 308.9M2261.9 1681.8L-77.0 261.5M-346.5 1343.2L2364.5 306.2M2292.9 1628.5L-59.3 260.0M-352.9 1298.8L2340.4 303.4M2322.0 1578.4L-41.8 258.4M-359.0 1257.2L2316.8 300.8M2349.4 1531.3L-24.4 256.8M-364.6 1218.2L2293.5 298.1M2375.3 1486.8L-7.3 255.3M-370.0 1181.4L2270.6 295.5M2399.7 1444.8L9.7 253.8M-375.0 1146.8L2248.0 293.0M2422.8 1405.0L26.5 252.3M-379.8 1114.1L2225.8 290.5M2444.8 1367.3L43.2 250.8M-1866.6 1538.7L2204.0 288.0M3569.7 1828.2L59.6 249.3M-1818.0 1481.2L2182.5 285.6M3559.3 1765.4L75.9 247.9M-1772.8 1427.7L2161.3 283.2M3549.6 1706.8L92.1 246.4M-1730.6 1378.0L2140.5 280.8M3540.5 1651.8L108.0 245.0M-1691.3 1331.5L2120.0 278.5M3532.0 1600.2L123.9 243.6M-1654.5 1288.1L2099.7 276.2M3523.9 1551.6L139.5 242.2M-1620.0 1247.3L2079.8 274.0M3516.3 1505.9L155.0 240.8M-1587.6 1209.0L2060.2 271.8M3509.2 1462.7L170.4 239.4M-1557.1 1172.9L2040.9 269.6M3502.4 1421.9L185.5 238.1M-1501.1 1106.8L2003.1 265.3M3489.9 1346.5L215.5 235.4M-1475.4 1076.4L1984.6 263.2M3484.2 1311.7L230.3 234.1M-1451.0 1047.5L1966.4 261.2M3478.7 1278.6L244.9 232.8M-1427.8 1020.2L1948.5 259.1M3473.5 1247.0L259.3 231.5M-1405.8 994.2L1930.8 257.1M3468.5 1217.0L273.7 230.2M-1384.9 969.5L1913.3 255.2M3463.7 1188.3L287.9 228.9M-1365.0 946.0L1896.1 253.2M3459.2 1160.9L301.9 227.7M-1346.0 923.5L1879.1 251.3M3454.8 1134.7L315.9 226.4M-1327.9 902.1L1862.4 249.4M3450.7 1109.6L329.7 225.2M-1310.5 881.6L1845.9 247.5M3446.7 1085.6L343.3 224.0M-1293.9 862.0L1829.6 245.7M3442.9 1062.6L356.9 222.8M-1278.1 843.3L1813.6 243.9M3439.2 1040.5L370.3 221.6M-1262.8 825.3L1797.7 242.1M3435.7 1019.2L383.6 220.4M-1248.2 808.0L1782.1 240.3M3432.3 998.8L396.8 219.2M-1234.2 791.4L1766.7 238.6M3429.1 979.2L409.8 218.0M-1220.7 775.5L1751.4 236.9M3425.9 960.3L422.8 216.9M-1207.8 760.2L1736.4 235.2M3422.9 942.0L435.6 215.7M-1195.3 745.5L1721.6 233.5M3420.0 924.5L448.3 214.6M-1183.3 731.3L1707.0 231.8M3417.2 907.5L460.9 213.5M-1160.6 704.5L1678.2 228.6M3411.9 875.4L485.7 211.3M-1149.8 691.7L1664.2 227.0M3409.3 860.1L498.0 210.2M-1139.4 679.4L1650.3 225.4M3406.9 845.3L510.1 209.1M-1129.4 667.6L1636.5 223.9M3404.5 831.0L522.2 208.0M-1119.7 656.1L1623.0 222.3M3402.2 817.2L534.1 206.9M-1110.3 645.0L1609.6 220.8M3400.0 803.8L546.0 205.9M-1101.2 634.2L1596.3 219.3M3397.9 790.8L557.7 204.8M-1092.4 623.8L1583.3 217.9M3395.8 778.2L569.3 203.8M-1083.8 613.8L1570.4 216.4M3393.8 766.0L580.9 202.8M-1075.6 604.0L1557.6 215.0M3391.8 754.1L592.3 201.7M-1067.5 594.5L1545.0 213.5M3389.9 742.6L603.6 200.7M-1059.8 585.3L1532.6 212.1M3388.0 731.5L614.9 199.7M-1052.2 576.4L1520.3 210.7M3386.2 720.6L626.0 198.7M-1044.9 567.7L1508.1 209.4M3384.5 710.0L637.1 197.7M-1037.8 559.3L1496.1 208.0M3382.8 699.8L648.0 196.8M-1030.8 551.1L1484.2 206.7M3381.1 689.8L658.9 195.8M-1024.1 543.2L1472.5 205.3M3379.5 680.0L669.7 194.8M-1017.6 535.5L1460.9 204.0M3378.0 670.6L680.4 193.9M-1011.2 527.9L1449.4 202.7M3376.4 661.4L691.0 192.9M-998.9 513.5L1426.8 200.2M3373.5 643.6L711.9 191.0M-993.1 506.5L1415.7 198.9M3372.1 635.1L722.3 190.1M-987.3 499.7L1404.8 197.7M3370.7 626.8L732.5 189.2M-981.7 493.1L1393.9 196.5M3369.3 618.7L742.7 188.3M-976.3 486.7L1383.2 195.2M3368.0 610.7L752.8 187.4M-971.0 480.4L1372.6 194.0M3366.8 603.0L762.8 186.5M-965.8 474.3L1362.1 192.9M3365.5 595.4L772.7 185.6M-960.7 468.3L1351.8 191.7M3364.3 588.1L782.6 184.7M-955.8 462.5L1341.5 190.5M3363.1 580.9L792.4 183.9M-951.0 456.8L1331.3 189.4M3361.9 573.8L802.1 183.0M-946.3 451.2L1321.3 188.2M3360.8 566.9L811.7 182.1M-941.7 445.8L1311.4 187.1M3359.7 560.2L821.3 181.3M-937.2 440.5L1301.5 186.0M3358.6 553.6L830.7 180.4M-932.8 435.3L1291.8 184.9M3357.5 547.2L840.2 179.6M-928.5 430.2L1282.2 183.8M3356.5 540.9L849.5 178.8M-924.3 425.2L1272.7 182.8M3355.4 534.7L858.7 177.9M-920.2 420.4L1263.2 181.7M3354.4 528.7L867.9 177.1M-916.1 415.6L1253.9 180.6M3353.5 522.8L877.1 176.3M-912.2 411.0L1244.7 179.6M3352.5 517.0L886.1 175.5M-904.6 401.9L1226.5 177.5M3350.6 505.8L904.0 173.9M-900.9 397.6L1217.5 176.5M3349.7 500.4L912.9 173.1M-897.2 393.3L1208.7 175.5M3348.9 495.0L921.6 172.3M-893.7 389.1L1199.9 174.5M3348.0 489.8L930.3 171.5M-890.2 385.0L1191.2 173.5M3347.1 484.7L939.0 170.8M-886.8 380.9L1182.6 172.6M3346.3 479.6L947.6 170.0M-883.4 377.0L1174.1 171.6M3345.5 474.7L956.1 169.2M-880.2 373.1L1165.7 170.7M3344.7 469.9L964.6 168.5M-876.9 369.3L1157.3 169.7M3343.9 465.1L973.0 167.7M-873.8 365.6L1149.1 168.8M3343.1 460.5L981.3 167.0M-870.7 361.9L1140.9 167.9M3342.4 455.9L989.6 166.2M-867.7 358.3L1132.8 166.9M3341.6 451.4L997.8 165.5M-864.7 354.8L1124.7 166.0M3340.9 447.0L1006.0 164.8M-861.7 351.4L1116.8 165.1M3340.2 442.7L1014.1 164.1M-858.9 348.0L1108.9 164.2M3339.5 438.4L1022.1 163.3M-856.0 344.6L1101.1 163.4M3338.8 434.2L1030.1 162.6M-853.3 341.4L1093.3 162.5M3338.1 430.1L1038.0 161.9M-850.6 338.1L1085.7 161.6M3337.4 426.1L1045.9 161.2M-847.9 335.0L1078.1 160.8M3336.8 422.1L1053.7 160.5" stroke="url(#mn)" stroke-width="1.100" stroke-dasharray="1.100 4.300" fill="none"/><path d="M477.9 7010.6L3092.9 388.5M-523.5 6474.2L-544.1 303.3M-315.6 1555.0L923.7 1003.5M923.7 1003.5L-131.3 266.4M-415.9 865.8L2021.9 267.4M2613.9 1076.3L200.6 236.7M-1171.7 717.6L1692.5 230.2M3414.5 891.2L473.4 212.4M-1005.0 520.6L1438.0 201.4M3374.9 652.4L701.5 192.0M-908.3 406.4L1235.5 178.6M3351.6 511.3L895.1 174.7M-845.2 331.9L1070.6 159.9M3336.1 418.2L1061.5 159.8" stroke="#000" stroke-width="1.100" fill="none"/></g><path d="M-842.4 328.5L1055.4 159.6M1055.4 159.6L3336.3 419.4" stroke="#c8792a" stroke-width="2.600" fill="none"/><path d="M1060 945L1716 650.500M1052 1091L1326 1282" stroke="#f5d96a" stroke-width="1.150" fill="none"/><ellipse cx="926" cy="1010" rx="146" ry="82" fill="none" stroke="#eaa06e" stroke-width="1" stroke-opacity=".85"/><g stroke="#74d1fd" stroke-width="3.500" stroke-linecap="round" fill="none"><path d="M1001.8 672.0L787.2 842.5M999.5 666.5L784.7 836.8M1006.3 674.4L791.8 845.1M997.2 661.0L782.3 831.1M1004.0 668.9L789.4 839.4M1010.8 676.8L796.5 847.7M995.0 655.5L779.8 825.4M1001.7 663.4L786.9 833.7M1008.5 671.3L794.1 842.0M992.7 650.0L777.3 819.6M1015.3 679.2L801.2 850.4M999.5 657.9L784.5 827.9M1006.3 665.8L791.6 836.3M990.4 644.5L774.8 813.8M1013.1 673.7L798.8 844.7M997.2 652.4L782.0 822.2M1019.9 681.7L806.0 853.0M1004.0 660.3L789.2 830.5M988.1 638.9L772.3 808.0M1010.8 668.2L796.3 838.9M994.9 646.8L779.5 816.3M1017.7 676.2L803.5 847.3M1001.7 654.7L786.7 824.7M1024.5 684.1L810.7 855.7M985.8 633.3L769.8 802.1M1008.6 662.7L793.9 833.1M992.6 641.2L777.0 810.5M1015.4 670.7L801.1 841.5M999.4 649.2L784.2 818.9M1022.3 678.6L808.3 850.0M983.4 627.7L767.3 796.2M1006.3 657.1L791.4 827.3M1029.2 686.6L815.6 858.4M990.3 635.6L774.5 804.6M1013.2 665.1L798.6 835.7M997.1 643.6L781.7 813.0M1020.0 673.1L805.9 844.2M981.1 622.0L764.8 790.3M1004.0 651.5L788.9 821.5" stroke-dasharray="0 7.606"/><path d="M1026.9 681.1L810.4 854.8M987.9 630.0L769.2 800.9M1010.9 659.5L793.4 832.1M1033.8 689.1L817.6 863.3M994.8 637.9L776.4 809.4M1017.8 667.5L800.7 840.6M978.7 616.3L759.4 786.6M1001.7 645.9L783.7 817.8M1024.7 675.6L807.9 849.1M985.6 624.3L766.6 795.0M1008.6 653.9L790.9 826.3M1031.6 683.6L815.2 857.5M992.5 632.3L773.9 803.4M1015.5 661.9L798.2 834.7M976.4 610.6L756.8 780.6M1038.5 691.6L822.5 866.1M999.4 640.3L781.1 811.9M1022.4 670.0L805.5 843.2M983.3 618.6L764.1 789.0M1006.3 648.3L788.4 820.4M1029.4 678.0L812.8 851.7M990.2 626.6L771.3 797.5M1013.2 656.3L795.7 828.9M974.0 604.9L754.3 774.6M1036.3 686.1L820.1 860.3M997.1 634.6L778.6 806.0M1020.2 664.4L803.0 837.4M980.9 612.9L761.5 783.0M1043.3 694.2L827.4 868.8M1004.0 642.6L785.9 814.5M1027.1 672.4L810.3 845.9M987.8 620.9L768.8 791.5M1010.9 650.7L793.2 823.0M971.6 599.1L751.7 768.5M1034.1 680.5L817.7 854.4M994.7 628.9L776.1 800.0M1017.9 658.8L800.5 831.5M978.5 607.1L758.9 777.0M1041.1 688.6L825.0 863.0" stroke-dasharray="0 7.704"/><path d="M1001.7 637.0L781.5 810.0M1024.9 666.8L806.0 841.5M985.4 615.1L764.4 787.0M1048.0 696.7L830.5 873.1M1008.6 645.0L788.9 818.5M969.2 593.3L747.2 763.9M1031.8 674.9L813.4 850.1M992.4 623.2L771.7 795.5M1015.6 653.1L796.2 827.1M976.1 601.3L754.5 772.4M1038.8 683.0L820.7 858.7M999.3 631.2L779.0 804.0M1022.6 661.2L803.5 835.6M983.1 609.4L761.8 780.9M1045.8 691.2L828.1 867.2M1006.3 639.3L786.3 812.6M966.8 587.5L744.6 757.8M1029.6 669.3L810.9 844.2M990.0 617.4L769.1 789.5M1052.8 699.3L835.5 875.8M1013.3 647.4L793.7 821.1M973.7 595.5L751.9 766.3M1036.6 677.4L818.3 852.8M997.0 625.5L776.5 798.0M1020.3 655.5L801.1 829.7M980.7 603.6L759.2 774.9M1043.6 685.6L825.7 861.4M1004.0 633.6L783.8 806.6M964.4 581.6L741.9 751.7M1027.3 663.6L808.4 838.3M987.7 611.6L766.5 783.4M1050.6 693.7L833.1 870.0M1011.0 641.7L791.2 815.2M971.3 589.7L749.3 760.2M1034.3 671.8L815.8 846.9M994.7 619.7L773.9 792.0M1057.7 701.9L840.5 878.7M1018.0 649.8L798.6 823.7M978.3 597.7L756.6 768.8" stroke-dasharray="0 7.770"/><path d="M1041.4 679.9L821.7 856.7M1001.7 627.8L779.7 801.8M961.9 575.7L737.7 746.7M1025.0 658.0L804.4 833.6M985.3 605.8L762.4 778.5M1048.4 688.1L829.2 865.4M1008.7 636.0L787.1 810.4M968.9 583.8L745.1 755.3M1032.1 666.1L811.8 842.2M992.3 613.9L769.8 787.1M1055.5 696.3L836.6 874.0M1015.7 644.1L794.5 819.0M975.9 591.9L752.4 763.8M1039.1 674.3L819.3 850.8M999.3 622.1L777.2 795.7M959.5 569.8L735.1 740.5M1062.5 704.5L844.1 882.7M1022.7 652.3L801.9 827.6M982.9 600.0L759.8 772.4M1046.2 682.5L826.7 859.5M1006.3 630.2L784.6 804.3M966.5 577.9L742.4 749.1M1029.8 660.4L809.4 836.2M989.9 608.1L767.2 781.0M1053.2 690.7L834.2 868.2M1013.4 638.4L792.0 812.9M973.5 586.0L749.8 757.7M1036.8 668.6L816.8 844.9M996.9 616.2L774.6 789.6M957.0 563.9L732.4 734.3M1060.3 698.9L841.7 876.8M1020.4 646.5L799.4 821.6M980.5 594.1L757.2 766.3M1043.9 676.8L824.3 853.6M1004.0 624.4L782.0 798.3M964.0 572.0L739.8 742.9M1067.4 707.1L849.1 885.6M1027.5 654.7L806.9 830.3M987.5 602.3L764.6 774.9" stroke-dasharray="0 7.823"/><path d="M1051.0 685.0L830.4 863.3M1011.0 632.6L788.1 808.0M971.0 580.1L745.8 752.5M1034.6 662.9L813.0 840.0M994.6 610.4L770.7 784.6M1058.1 693.2L837.9 872.0M954.5 557.9L728.4 729.1M1018.1 640.8L795.6 816.6M978.1 588.2L753.2 761.1M1041.7 671.1L820.5 848.7M1001.6 618.6L778.1 793.2M961.6 566.0L735.8 737.7M1065.2 701.5L845.4 880.8M1025.2 649.0L803.0 825.3M985.1 596.4L760.6 769.8M1048.8 679.3L828.0 857.4M1008.7 626.8L785.6 801.9M968.6 574.1L743.2 746.3M1032.3 657.2L810.5 834.0M1072.4 709.8L852.9 889.5M992.2 604.5L768.1 778.4M1055.9 687.6L835.5 866.1M1015.8 635.0L793.0 810.6M952.1 551.9L725.7 722.8M975.7 582.3L750.6 754.9M1039.4 665.4L818.0 842.7M999.3 612.7L775.5 787.1M959.1 560.0L733.1 731.4M1063.0 695.8L843.0 874.9M1022.9 643.2L800.5 819.2M982.7 590.5L758.0 763.6M1046.5 673.6L825.5 851.4M1006.3 620.9L783.0 795.8M966.1 568.2L740.5 740.0M1070.2 704.1L850.5 883.6M1030.0 651.4L808.0 828.0M989.8 598.6L765.5 772.2M1053.7 681.9L833.0 860.2M1013.5 629.1L790.5 804.5" stroke-dasharray="0 7.871"/><path d="M949.6 545.8L721.7 717.4M973.2 576.3L746.7 749.6M1037.1 659.6L814.3 837.6M1077.3 712.4L856.9 893.4M996.9 606.8L771.7 781.9M1060.8 690.2L839.4 869.9M956.6 554.0L729.2 726.0M1020.6 637.4L796.8 814.1M980.3 584.5L754.2 758.3M1044.3 667.9L821.9 846.4M1004.0 615.0L779.2 790.6M963.7 562.2L736.6 734.7M1068.0 698.5L847.0 878.7M1027.7 645.6L804.3 822.9M987.4 592.7L761.6 767.0M1051.4 676.2L829.4 855.2M1011.1 623.3L786.7 799.3M947.0 539.8L719.0 711.0M970.8 570.3L744.0 743.3M1034.8 653.9L811.8 831.6M1075.2 706.8L854.5 887.5M994.5 600.9L769.1 775.7M1058.6 684.5L837.0 863.9M1018.2 631.5L794.2 808.0M954.1 547.9L726.4 719.7M977.9 578.5L751.5 752.0M1042.0 662.1L819.4 840.4M1082.3 715.1L862.1 896.3M1001.6 609.1L776.6 784.4M1065.8 692.8L844.5 872.7M961.2 556.1L733.9 728.3M1025.4 639.8L801.8 816.8M985.0 586.7L759.0 760.7M1049.2 670.4L826.9 849.1M1008.7 617.4L784.1 793.1M944.5 533.7L716.3 704.6M968.3 564.3L741.4 737.0M1073.0 701.1L852.1 881.5M1032.5 648.1L809.3 825.5" stroke-dasharray="0 7.913"/><path d="M992.1 595.0L765.4 770.3M1056.3 678.7L833.4 858.8M1015.9 625.7L790.6 802.7M951.6 541.9L722.6 714.1M975.4 572.5L747.7 746.6M1039.7 656.3L815.8 835.2M1080.2 709.4L858.6 891.3M999.2 603.2L772.9 779.0M1063.5 687.1L841.0 867.6M958.7 550.1L730.1 722.8M1023.0 633.9L798.1 811.5M982.5 580.8L755.2 755.3M1046.9 664.7L823.3 844.0M1087.4 717.8L866.2 900.1M1006.4 611.5L780.4 787.8M942.0 527.6L712.4 699.0M965.8 558.3L737.5 731.5M1070.7 695.4L848.6 876.5M1030.2 642.2L805.7 820.3M989.7 589.0L762.7 764.1M1054.1 673.0L830.9 852.8M1013.5 619.8L788.0 796.6M949.1 535.7L719.8 707.7M972.9 566.5L745.0 740.3M1037.4 650.5L813.2 829.1M1078.0 703.7L856.2 885.3M996.8 597.3L770.3 772.8M1061.3 681.3L838.5 861.6M1020.7 628.0L795.5 805.4M956.2 544.0L727.3 716.4M980.1 574.7L752.6 749.0M1044.6 658.8L820.8 837.9M1085.2 712.1L863.9 894.2M1004.0 605.5L777.8 781.6M939.4 521.4L709.6 692.6M1068.5 689.7L846.2 870.5M963.3 552.2L734.8 725.2M1027.9 636.3L803.1 814.2M987.2 583.0L760.1 757.8" stroke-dasharray="0 7.953"/><path d="M1051.8 667.2L827.4 847.6M1092.5 720.5L870.5 903.9M1011.2 613.8L784.4 791.2M946.5 529.6L716.0 702.1M970.5 560.4L741.3 734.7M1075.8 698.0L852.8 880.2M1035.1 644.7L809.7 823.8M994.4 591.3L766.6 767.3M1059.0 675.5L835.0 856.4M1018.3 622.1L791.9 800.0M953.7 537.8L723.5 710.8M977.6 568.7L748.8 743.5M1042.3 653.0L817.3 832.6M1083.0 706.4L860.4 889.1M1001.6 599.6L774.2 776.1M936.9 515.2L705.7 686.9M1066.3 683.9L842.7 865.3M960.8 546.1L731.1 719.6M1025.6 630.5L799.5 808.8M984.8 577.0L756.4 752.2M1049.5 661.4L824.9 841.5M1090.3 714.8L868.1 897.9M1008.8 607.9L781.8 784.9M944.0 523.4L713.3 695.6M968.0 554.3L738.6 728.3M1073.5 692.3L850.4 874.2M1032.8 638.8L807.1 817.6M992.0 585.2L764.0 761.0M1056.8 669.7L832.6 850.3M1097.6 723.2L875.8 906.9M1016.0 616.2L789.4 793.8M951.1 531.7L720.8 704.4M975.2 562.6L746.1 737.1M1040.0 647.1L814.8 826.5M1080.8 700.7L858.0 883.1M999.2 593.6L771.5 769.8M934.3 509.0L702.9 680.4M1064.0 678.1L840.2 859.2M1023.2 624.5L797.0 802.6" stroke-dasharray="0 7.989"/><path d="M958.3 539.9L727.3 713.9M982.3 570.9L752.7 746.6M1047.3 655.5L821.4 836.1M1088.1 709.1L864.8 892.8M1006.4 601.9L778.2 779.4M941.4 517.2L709.5 689.9M1071.3 686.5L846.9 868.9M965.5 548.2L734.9 722.7M1030.4 632.9L803.6 812.2M989.5 579.2L760.3 755.5M1054.5 663.9L829.1 845.0M1095.4 717.5L872.5 901.7M1013.6 610.2L785.8 788.3M948.6 525.5L717.0 698.6M972.7 556.5L742.4 731.4M1078.6 694.9L854.6 877.8M1037.7 641.2L811.3 821.1M996.7 587.5L767.9 764.3M931.7 502.7L699.1 674.5M1061.8 672.3L836.8 853.9M1020.8 618.6L793.4 797.1M1102.7 726.0L880.2 910.7M955.8 533.8L724.6 707.4M979.9 564.8L750.0 740.3M1045.0 649.6L818.9 830.0M1085.9 703.4L862.3 886.8M1004.0 595.9L775.5 773.1M938.9 511.0L706.7 683.3M1069.1 680.7L844.5 862.8M1028.1 626.9L801.1 806.0M963.0 542.0L732.1 716.2M987.1 573.1L757.6 749.1M1052.2 658.0L826.6 838.9M1093.2 711.8L870.1 895.7M1011.2 604.2L783.2 782.0M946.0 519.3L714.2 692.1M970.2 550.3L739.7 725.0M1076.4 689.1L852.2 871.8M1035.4 635.3L808.7 814.9" stroke-dasharray="0 8.024"/><path d="M994.3 581.5L764.3 758.7M1059.5 666.4L833.4 848.6M929.1 496.4L695.3 668.7M1100.5 720.3L876.9 905.4M1018.5 612.6L789.9 791.6M953.2 527.5L720.8 701.6M977.4 558.7L746.4 734.6M1083.7 697.6L859.0 881.5M1042.6 643.7L815.5 824.5M1001.6 589.8L771.9 767.5M936.3 504.7L702.9 677.4M1066.8 674.9L841.1 857.5M1025.7 621.0L797.5 800.5M1107.9 728.8L884.7 914.4M960.4 535.8L728.4 710.4M984.6 567.0L754.0 743.4M1049.9 652.1L823.2 833.5M1091.0 706.1L866.7 890.5M1008.8 598.2L779.6 776.4M943.5 513.0L710.5 686.2M1074.1 683.3L848.8 866.4M967.7 544.2L736.0 719.2M1033.0 629.4L805.2 809.4M991.9 575.4L761.6 752.3M1057.2 660.6L830.9 842.4M1098.4 714.5L874.5 899.4M926.5 490.1L692.5 662.0M1016.1 606.6L787.3 785.3M950.7 521.3L718.1 695.1M974.9 552.5L743.7 728.1M1081.5 691.8L856.6 875.4M1040.3 637.8L812.9 818.3M999.1 583.7L769.3 761.1M933.7 498.4L700.1 670.8M1064.6 669.0L838.6 851.4M1105.7 723.0L882.3 908.4M1023.4 615.0L795.0 794.2M957.9 529.6L725.7 703.9M982.1 560.9L751.3 737.0" stroke-dasharray="0 8.057"/><path d="M1047.6 646.2L819.8 828.0M1088.8 700.3L863.5 885.1M1006.4 592.1L776.1 770.7M940.9 506.7L706.7 680.3M1071.9 677.5L845.5 861.0M1030.7 623.4L801.8 803.8M965.1 538.0L732.4 713.4M1113.1 731.6L889.2 918.2M989.4 569.2L758.1 746.5M1054.9 654.7L827.5 836.9M1096.2 708.8L871.2 894.1M1013.7 600.5L783.7 779.6M923.9 483.8L688.7 656.0M948.1 515.0L714.4 689.2M972.4 546.3L740.0 722.3M1079.2 686.0L853.2 870.0M1038.0 631.8L809.5 812.8M996.7 577.6L765.7 755.4M1062.3 663.1L835.2 845.9M931.1 492.1L696.3 664.9M1103.6 717.3L879.0 903.2M1021.0 608.9L791.5 788.6M955.4 523.4L722.0 698.0M979.7 554.7L747.7 731.2M1086.6 694.5L861.0 879.0M1045.3 640.3L817.2 821.7M1004.0 586.0L773.4 764.3M938.3 500.4L703.9 673.7M1069.6 671.6L843.0 854.9M1028.3 617.4L799.2 797.5M1110.9 725.8L886.8 912.2M962.6 531.7L729.6 706.9M986.9 563.1L755.4 740.1M1052.6 648.7L825.0 830.7M1094.0 703.0L868.8 888.1M1011.3 594.4L781.1 773.3M921.2 477.4L685.8 649.3M945.5 508.7L711.5 682.5M1077.0 680.1L850.8 863.9" stroke-dasharray="0 8.088"/><path d="M969.9 540.1L736.4 716.4M1035.6 625.8L806.1 807.2M1118.4 734.4L893.8 921.9M994.2 571.5L762.2 749.6M1060.0 657.2L831.9 840.4M1101.4 711.5L875.8 897.8M928.4 485.7L692.6 658.8M1018.6 602.9L788.0 782.9M952.8 517.1L718.3 692.1M977.2 548.5L744.1 725.3M1084.4 688.6L857.7 873.6M1043.0 634.3L813.8 816.1M1001.5 579.9L769.9 758.6M1067.4 665.7L839.7 849.4M935.7 494.0L700.2 667.7M1108.8 720.1L883.6 906.9M1025.9 611.3L795.7 791.9M960.1 525.4L726.0 700.9M984.4 556.9L751.8 734.2M1050.3 642.7L821.6 825.1M1091.8 697.2L865.5 882.7M1008.9 588.3L777.6 767.5M918.6 471.0L682.1 643.2M942.9 502.4L707.8 676.5M1074.8 674.2L847.5 858.4M1033.3 619.8L803.5 800.8M967.3 533.8L733.6 709.8M1116.2 728.6L891.5 915.9M991.8 565.3L759.5 743.2M1057.7 651.2L829.4 834.2M1099.2 705.7L873.4 891.7M1016.2 596.8L785.3 776.5M925.8 479.3L689.7 652.1M950.2 510.8L715.5 685.4M1082.2 682.7L855.3 867.5M974.6 542.2L741.3 718.8M1040.6 628.2L811.2 809.8M1123.6 737.2L899.3 925.0M999.1 573.7L767.2 752.1" stroke-dasharray="0 8.119"/><path d="M1065.1 659.8L836.3 843.8M933.1 487.7L696.5 661.6M1106.6 714.3L880.4 901.5M1023.5 605.2L792.3 786.1M957.5 519.1L722.3 695.0M981.9 550.6L748.2 728.3M1089.6 691.3L862.3 877.2M1048.0 636.7L818.2 819.5M1006.4 582.2L774.1 761.7M915.9 464.5L678.3 637.1M940.3 496.0L704.2 670.5M1072.5 668.3L844.2 852.9M1030.9 613.7L800.0 795.1M1114.1 722.8L888.3 910.6M964.8 527.5L730.0 703.9M989.3 559.1L755.9 737.3M1055.4 645.3L826.0 828.5M1097.0 699.9L870.1 886.3M1013.8 590.6L781.9 770.7M923.1 472.9L686.0 646.0M947.6 504.4L711.8 679.4M1079.9 676.8L852.0 862.0M972.1 535.9L737.7 712.8M1038.3 622.2L807.8 804.2M1121.5 731.4L896.2 919.7M996.6 567.5L763.7 746.3M1062.8 653.8L833.8 837.6M1104.4 708.4L878.0 895.4M930.4 481.2L693.6 654.8M1021.1 599.1L789.6 779.7M954.9 512.8L719.5 688.3M979.4 544.4L745.5 721.8M1087.3 685.4L859.8 871.0M1045.7 630.7L815.6 813.2M1129.0 740.1L904.1 928.8M1004.0 576.0L771.4 755.3M913.2 458.0L675.4 630.3M1070.2 662.3L841.7 846.7M937.7 489.6L701.3 663.8" stroke-dasharray="0 8.148"/><path d="M1111.9 717.0L885.1 905.2M1028.5 607.6L796.6 789.4M962.2 521.2L726.4 697.9M986.8 552.8L752.4 731.4M1053.1 639.2L822.6 822.9M1094.8 694.0L866.9 880.8M1011.3 584.5L778.4 764.9M920.5 466.4L682.2 639.8M945.0 498.0L708.2 673.3M1077.6 670.9L848.7 856.4M1035.9 616.1L804.4 798.4M969.6 529.6L734.1 706.8M1119.4 725.7L893.0 914.3M994.1 561.3L760.1 740.4M1060.5 647.8L830.5 832.0M1102.2 702.6L874.8 889.9M1018.7 593.0L786.2 773.9M927.8 474.8L689.9 648.7M952.3 506.4L715.9 682.2M1085.1 679.5L856.6 865.5M976.9 538.1L741.9 715.8M1043.3 624.6L812.2 807.5M1126.8 734.3L900.9 923.4M1001.5 569.8L767.9 749.4M1067.9 656.4L838.3 841.0M1109.7 711.2L882.7 899.0M935.1 483.2L697.6 657.6M1026.1 601.5L794.0 783.0M959.7 514.9L723.6 691.2M984.3 546.6L749.6 724.8M1092.6 688.1L864.5 874.6M1050.7 633.2L820.1 816.5M1134.3 742.9L908.9 932.6M1008.9 578.3L775.7 758.4M917.8 459.9L679.3 632.9M942.4 491.6L705.3 666.5M1075.4 664.9L846.2 850.1M1033.5 610.0L801.8 792.0M1117.2 719.8L890.6 908.2" stroke-dasharray="0 8.176"/><path d="M967.0 523.3L730.5 700.8M991.6 555.0L756.6 734.4M1058.2 641.8L827.1 826.3M1100.0 696.7L871.6 884.4M1016.3 586.8L782.7 768.1M925.1 468.3L686.2 642.5M949.7 500.0L712.2 676.1M1082.8 673.5L853.3 859.9M1041.0 618.6L808.8 801.7M974.4 531.8L738.3 709.8M1124.7 728.5L897.8 918.0M999.0 563.5L764.4 743.4M1065.6 650.3L835.0 835.4M1107.5 705.3L879.5 893.6M1023.7 595.3L790.5 777.1M932.4 476.7L693.9 651.4M957.1 508.5L720.0 685.1M981.7 540.2L746.1 718.8M1090.3 682.1L861.2 869.1M1048.4 627.1L816.7 810.8M1132.2 737.1L905.7 927.2M1006.4 572.0L772.2 752.5M1073.1 658.9L842.9 844.5M939.8 485.1L701.6 660.4M1115.0 714.0L887.4 902.7M1031.1 603.9L798.4 786.2M964.4 516.9L727.7 694.1M989.1 548.7L753.9 727.8M1055.8 635.7L824.6 819.9M1097.8 690.8L869.1 878.2M1013.8 580.6L780.0 761.6M1139.7 745.8L913.7 936.4M922.4 461.8L683.3 635.6M947.1 493.6L709.4 669.4M1080.6 667.6L850.8 853.7M1038.6 612.4L806.2 795.3M971.8 525.4L735.5 703.1M1122.5 722.6L895.4 911.9M996.5 557.3L761.7 736.9" stroke-dasharray="0 8.205"/><path d="M1063.3 644.3L831.7 829.7M1105.3 699.4L876.3 888.1M1021.3 589.1L787.1 771.3M929.8 470.2L690.1 645.2M954.5 502.0L716.3 679.0M1088.1 676.2L857.9 863.5M979.2 533.9L742.5 712.8M1046.0 621.0L813.3 805.1M1130.1 731.3L902.6 921.8M1004.0 565.8L768.7 746.6M1070.8 652.9L839.6 838.8M1112.8 708.1L884.2 897.2M937.1 478.6L697.9 654.2M1028.7 597.7L794.9 780.4M961.9 510.5L724.1 688.0M986.6 542.4L750.3 721.8M1095.6 684.8L865.9 872.6M1053.5 629.6L821.2 814.2M1137.6 740.0L910.6 931.0M1011.4 574.3L776.5 755.6M944.5 487.1L705.7 663.2M1078.3 661.5L847.5 848.0M1036.2 606.3L802.8 789.5M1120.4 716.8L892.2 906.5M969.3 519.0L731.9 697.0M994.0 550.9L758.1 730.9M1061.0 638.2L829.1 823.3M1103.1 693.5L873.8 881.8M1018.8 582.9L784.4 764.7M1145.2 748.7L918.6 940.3M927.1 463.7L687.2 638.3M951.9 495.6L713.4 672.2M1085.8 670.2L855.4 857.2M1043.7 614.9L810.7 798.6M976.7 527.5L739.7 706.1M1127.9 725.5L900.2 915.7M1001.5 559.5L766.0 740.0M1068.5 646.8L837.0 832.5M1110.6 702.2L881.8 891.1" stroke-dasharray="0 8.234"/><path d="M1026.3 591.5L791.4 774.5M934.5 472.1L694.1 647.9M959.3 504.1L720.4 681.9M984.1 536.1L746.7 715.8M1093.3 678.9L862.6 867.0M1051.2 623.5L817.8 808.4M1135.5 734.2L907.4 925.6M1008.9 568.1L773.0 749.7M1076.0 655.5L844.2 842.3M941.8 480.6L701.9 657.0M1118.2 710.9L889.0 901.0M1033.8 600.1L799.3 783.6M966.7 512.6L728.2 690.9M991.5 544.6L754.5 724.9M1058.7 632.1L825.7 817.6M1100.9 687.5L870.6 876.3M1016.4 576.6L780.9 758.8M1143.1 742.9L915.4 934.9M949.2 489.1L709.7 666.0M1083.5 664.2L852.1 851.5M1041.3 608.7L807.3 792.8M974.1 521.1L736.0 700.0M1125.8 719.6L897.0 910.2M999.0 553.2L762.4 734.0M1066.2 640.8L833.7 826.8M1108.4 696.2L878.6 885.5M1023.9 585.2L788.8 768.0M931.8 465.6L691.2 641.0M1150.7 751.7L923.5 944.1M956.7 497.6L717.5 675.0M1091.1 672.8L860.1 860.8M981.5 529.7L743.9 709.1M1048.8 617.3L815.2 802.0M1133.4 728.3L905.0 919.5M1006.5 561.7L770.3 743.1M1073.7 649.4L841.6 836.0M1116.0 705.0L886.6 894.8M939.2 474.1L699.0 650.1M1031.4 593.8L796.7 777.1" stroke-dasharray="0 8.263"/><path d="M964.1 506.1L724.5 684.7M989.0 538.2L750.9 718.8M1098.6 681.5L867.3 870.7M1056.3 626.0L822.3 811.8M1141.0 737.1L912.3 929.4M1013.9 570.3L777.3 752.9M1081.3 658.1L848.8 845.9M946.6 482.6L706.0 659.8M1038.9 602.5L803.8 786.9M1123.6 713.7L893.8 904.7M971.5 514.7L732.4 693.8M996.5 546.8L758.8 727.9M1063.8 634.6L830.3 821.0M1106.2 690.3L875.3 879.9M1021.4 579.0L785.3 762.0M1148.6 745.8L920.3 938.7M954.0 491.1L713.8 668.8M1088.8 666.8L856.8 855.1M1046.4 611.1L811.7 796.1M979.0 523.2L740.2 702.9M1131.2 722.4L901.9 914.0M1004.0 555.4L766.7 737.1M1071.4 643.3L838.3 830.2M1113.8 699.0L883.3 889.2M1028.9 587.6L793.2 771.2M936.5 467.5L695.3 643.8M961.5 499.6L721.7 677.9M1156.2 754.6L928.4 948.1M986.5 531.8L748.1 712.1M1096.4 675.5L864.8 864.3M1053.9 619.8L819.7 805.3M1138.8 731.2L909.9 923.3M1011.5 564.0L774.6 746.2M1079.0 652.0L846.3 839.5M943.9 476.0L703.1 652.9M1121.4 707.7L891.4 898.5M1036.5 596.2L801.1 780.4M968.9 508.2L729.5 687.0M993.9 540.4L756.0 721.2" stroke-dasharray="0 8.292"/><path d="M1061.5 628.5L826.9 815.2M1104.0 684.2L872.0 874.3M1019.0 572.6L781.7 756.0M1146.5 740.0L917.2 933.3M951.4 484.5L710.1 662.6M1086.5 660.7L853.5 849.4M1044.0 604.9L808.3 790.2M1129.0 716.5L898.6 908.5M976.4 516.8L736.6 696.8M1001.5 549.0L763.1 731.0M1069.1 637.2L834.9 824.5M1111.6 693.0L880.1 883.6M1026.5 581.3L789.7 765.2M1154.1 748.8L925.3 942.6M958.9 493.1L718.0 671.7M1094.1 669.5L861.5 858.7M983.9 525.4L744.5 705.9M1051.6 613.6L816.3 799.5M1136.7 725.3L906.7 917.8M1009.0 557.7L771.1 740.2M1076.7 645.9L842.9 833.7M1119.2 701.8L888.1 892.9M941.3 469.4L699.3 646.6M1034.0 590.0L797.6 774.5M966.3 501.7L725.9 680.8M1161.8 757.6L933.4 952.0M991.4 534.0L752.4 715.1M1101.8 678.2L869.5 868.0M1059.1 622.3L824.3 808.7M1144.3 734.1L914.8 927.1M1016.5 566.3L779.0 749.4M1084.3 654.6L850.9 843.0M948.7 478.0L707.2 655.7M1041.6 598.6L805.6 783.7M1126.9 710.6L896.2 902.2M973.8 510.3L733.8 690.0M998.9 542.6L760.4 724.3M1066.7 631.0L832.3 818.0M1109.4 687.0L877.6 877.3" stroke-dasharray="0 8.322"/><path d="M1024.1 575.0L786.1 759.3M1152.0 742.9L922.1 937.2M956.2 486.5L714.2 665.4M1091.9 663.4L858.2 853.0M1049.2 607.3L812.8 793.6M981.3 518.9L740.8 699.8M1134.5 719.4L903.5 912.3M1006.5 551.3L767.5 734.1M1074.3 639.7L839.5 827.9M1117.0 695.8L884.9 887.3M1031.6 583.6L794.1 768.5M963.7 495.1L722.1 674.6M1159.7 751.8L930.3 946.6M1099.5 672.1L866.2 862.3M988.9 527.5L748.8 709.0M1056.8 616.0L820.8 802.9M1142.2 728.2L911.6 921.6M1014.0 559.9L775.4 743.3M1082.0 648.5L847.6 837.2M946.1 471.4L703.4 649.4M1124.7 704.6L893.0 896.6M1039.2 592.3L802.1 777.7M971.2 503.7L730.1 683.8M1167.4 760.6L938.4 956.0M996.4 536.2L756.7 718.2M1064.4 624.8L828.9 812.1M1107.1 680.9L874.3 871.6M1021.6 568.6L783.4 752.6M1149.9 737.0L919.8 931.0M953.6 479.9L711.3 658.5M1089.6 657.2L855.6 846.6M1046.8 601.1L810.2 787.0M1132.4 713.4L901.1 906.0M978.8 512.4L738.0 692.9M1004.0 544.8L764.7 727.4M1072.0 633.5L836.9 821.4M1114.8 689.7L882.4 881.0M1029.2 577.3L791.4 761.8M1157.6 745.9L927.9 940.4" stroke-dasharray="0 8.351"/><path d="M961.1 488.6L718.4 668.3M1097.2 666.0L862.9 856.6M1054.4 609.8L817.4 797.0M986.3 521.0L745.1 702.8M1140.0 722.2L908.4 916.1M1011.5 553.5L771.8 737.3M1079.6 642.3L844.2 831.4M1122.5 698.5L889.7 891.0M1036.8 586.0L798.6 771.8M968.6 497.2L726.3 677.5M1165.3 754.7L935.3 950.5M993.9 529.7L753.1 712.0M1104.9 674.8L871.0 865.9M1062.0 618.5L825.4 806.3M1147.7 731.1L916.6 925.5M1019.1 562.2L779.8 746.5M1087.3 651.1L852.3 840.8M950.9 473.3L707.5 652.2M1044.4 594.7L806.7 781.1M1130.2 707.4L897.9 900.4M976.2 505.8L734.3 686.7M1001.4 538.4L761.1 721.2M1173.0 763.6L943.5 960.0M1069.7 627.3L833.5 815.6M1112.6 683.7L879.1 875.3M1026.7 570.9L787.9 755.8M1155.5 740.0L924.8 934.9M958.4 481.9L715.5 661.4M1095.0 659.9L860.4 850.1M1052.0 603.5L814.7 790.4M983.7 514.5L742.3 695.9M1137.9 716.2L906.0 909.8M1009.0 547.1L769.1 730.5M1077.3 636.1L841.6 824.9M1120.3 692.5L887.3 884.7M1034.3 579.7L795.9 765.1M1163.2 748.8L933.0 944.4M966.0 490.6L723.5 670.6M1102.6 668.7L868.5 859.5" stroke-dasharray="0 8.381"/><path d="M991.3 523.2L749.4 705.8M1059.6 612.3L822.0 800.4M1145.6 725.1L913.4 919.9M1016.6 555.8L776.2 740.4M1085.0 644.9L848.9 835.0M1128.0 701.3L894.6 894.8M1041.9 588.4L803.1 775.1M973.6 499.2L730.6 680.4M1170.9 757.8L940.4 954.5M998.9 531.9L757.4 715.1M1067.3 621.0L830.1 809.7M1110.3 677.5L875.8 869.6M1024.2 564.5L784.3 749.7M1153.3 734.0L921.6 929.4M955.8 475.3L711.7 655.0M1092.7 653.7L857.0 844.3M1049.6 597.2L811.2 784.4M1135.7 710.2L902.8 904.2M981.1 507.9L738.6 689.7M1006.5 540.6L765.4 724.4M1178.7 766.7L948.6 964.0M1075.0 629.9L838.2 819.1M1118.0 686.4L884.0 879.0M1031.9 573.3L792.4 759.0M1161.1 742.9L929.8 938.8M963.3 483.9L719.7 664.2M1100.4 662.6L865.2 853.7M1057.3 606.0L819.3 793.7M988.7 516.6L746.6 698.9M1143.4 719.1L911.0 913.7M1014.1 549.3L773.5 733.7M1082.7 638.7L846.3 828.4M1125.8 695.3L892.2 888.4M1039.5 582.0L800.4 768.4M970.9 492.6L727.7 673.5M1168.9 751.8L938.1 948.3M996.3 525.3L754.6 708.2M1108.1 671.4L873.3 863.2M1064.9 614.8L827.4 803.1" stroke-dasharray="0 8.411"/><path d="M1151.2 728.0L918.4 923.8M1021.7 558.1L780.7 743.6M1090.4 647.5L853.6 838.5M1047.2 590.8L807.7 778.4M1133.5 704.2L899.5 898.6M978.5 501.3L734.8 683.4M1003.9 534.1L761.8 718.2M1176.6 760.8L945.5 958.5M1072.6 623.6L834.7 813.2M1115.8 680.3L880.7 873.3M1029.4 566.8L788.8 753.0M1159.0 737.0L926.6 933.3M960.7 477.3L715.9 657.9M1098.1 656.4L861.8 847.9M1054.8 599.6L815.8 787.8M986.1 510.0L742.9 692.7M1141.3 713.1L907.8 908.0M1011.6 542.8L769.9 727.5M1184.4 769.8L953.8 968.1M1080.3 632.4L842.9 822.6M1123.6 689.2L888.9 882.7M1037.1 575.6L796.9 762.3M1166.8 745.9L934.9 942.8M968.3 486.0L723.9 667.1M1105.8 665.2L870.0 857.4M993.8 518.8L750.9 702.0M1062.5 608.4L824.0 797.1M1149.1 722.0L916.0 917.5M1019.2 551.6L777.9 736.8M1088.0 641.3L851.0 832.0M1131.3 698.1L897.1 892.2M1044.7 584.4L805.0 771.7M975.9 494.7L732.0 676.4M1174.6 754.9L943.2 952.3M1001.4 527.5L759.0 711.3M1070.3 617.3L832.1 806.5M1113.6 674.1L878.2 866.8M1026.9 560.4L786.0 746.2M1156.8 731.0L924.3 927.0" stroke-dasharray="0 8.442"/><path d="M1095.8 650.1L858.4 842.1M1052.4 593.2L812.3 781.8M1139.1 707.0L904.5 902.4M983.5 503.4L739.1 686.4M1009.1 536.3L766.2 721.3M1182.4 763.8L950.6 962.6M1078.0 626.1L839.4 816.7M1121.3 683.0L885.5 877.0M1034.6 569.2L793.3 756.2M1164.7 739.9L931.7 937.3M965.6 479.3L720.1 660.8M1103.5 659.0L866.6 851.6M1060.1 602.1L820.4 791.2M991.2 512.2L747.2 695.7M1146.9 716.0L912.7 911.9M1016.7 545.1L774.3 730.7M1085.7 635.0L847.6 826.1M1129.1 692.0L893.8 886.5M1042.3 578.0L801.4 765.6M973.3 488.0L728.2 670.1M1172.5 748.9L940.0 946.8M998.8 520.9L755.3 705.0M1111.3 667.9L874.8 861.1M1067.9 610.9L828.6 800.6M1154.7 724.9L921.0 921.4M1024.4 553.9L782.4 740.0M1093.5 643.9L855.8 835.6M1136.9 700.9L902.1 896.0M1050.0 586.8L809.6 775.0M980.9 496.8L736.2 679.4M1180.3 757.9L948.3 956.4M1006.5 529.7L763.4 714.4M1075.6 619.8L836.8 810.0M1119.1 676.9L883.1 870.6M1032.1 562.7L790.6 749.4M1162.5 733.9L929.3 931.0M1101.2 652.8L864.0 845.0M1057.7 595.7L817.8 784.5M988.6 505.5L744.3 688.7" stroke-dasharray="0 8.473"/><path d="M1144.7 709.9L909.4 906.3M1014.2 538.5L770.6 724.5M1083.4 628.7L844.1 820.2M1126.9 685.8L890.4 880.8M1039.8 571.5L797.8 759.6M1170.4 742.9L936.8 941.3M970.6 481.3L724.3 663.7M1109.0 661.7L871.4 855.3M996.3 514.3L751.5 698.8M1065.5 604.5L825.0 794.6M1152.6 718.9L917.7 915.9M1021.9 547.3L778.7 733.9M1091.2 637.6L852.3 829.7M1134.7 694.8L898.7 890.4M1047.6 580.4L806.0 769.0M978.3 490.1L732.4 673.0M1178.2 751.9L945.1 950.9M1003.9 523.1L759.6 708.2M1116.8 670.7L879.7 864.8M1073.2 613.4L833.3 804.1M1160.4 727.9L926.1 925.4M1029.6 556.2L786.9 743.3M1098.9 646.5L860.6 839.2M1055.3 589.2L814.2 778.4M1142.5 703.8L907.0 899.9M986.0 498.8L740.5 682.4M1011.7 531.9L767.8 717.6M1081.0 622.4L841.5 813.6M1124.7 679.6L887.9 874.3M1037.4 565.0L795.1 752.7M1168.3 736.9L934.4 935.0M1106.8 655.5L868.9 848.7M1063.1 598.1L822.4 787.9M993.7 507.6L748.6 691.8M1150.4 712.8L915.3 909.5M1019.4 540.8L775.9 727.0M1088.8 631.3L849.7 823.1M1132.5 688.6L896.2 883.9M1045.1 573.9L803.3 762.2" stroke-dasharray="0 8.506"/><path d="M975.6 483.3L728.5 666.7M1176.1 745.9L941.8 945.4M1001.4 516.5L755.8 701.9M1114.6 664.4L876.2 859.1M1070.9 607.0L829.7 798.2M1158.3 721.8L922.7 919.9M1027.1 549.6L783.1 737.2M1096.6 640.2L857.1 833.4M1140.3 697.6L903.6 894.3M1052.9 582.8L810.5 772.4M983.3 492.1L736.6 676.1M1009.1 525.3L764.0 711.4M1078.7 616.0L837.9 807.7M1122.4 673.4L884.5 868.6M1034.9 558.5L791.3 746.6M1166.1 730.8L931.1 929.5M1104.5 649.2L865.3 842.9M1060.7 591.7L818.7 781.9M991.0 500.9L744.8 685.5M1148.2 706.6L912.0 903.9M1016.8 534.1L772.2 720.8M1086.5 624.9L846.2 817.2M1130.3 682.4L892.8 878.2M1042.6 567.4L799.6 756.1M1174.0 739.9L939.5 939.1M1112.3 658.2L873.7 852.5M1068.5 600.6L827.0 791.4M998.8 509.8L753.0 694.9M1156.1 715.7L920.3 913.5M1024.6 543.0L780.4 730.2M1094.3 633.9L854.5 826.7M1138.1 691.4L901.2 887.8M1050.4 576.3L807.8 765.6M980.7 485.4L733.7 669.0M1006.5 518.6L761.1 704.3M1120.2 667.2L882.0 862.1M1076.3 609.6L835.3 800.9M1164.0 724.7L928.7 923.1M1032.4 551.9L788.6 739.7" stroke-dasharray="0 8.540"/><path d="M1102.1 642.9L861.8 837.1M1058.2 585.2L815.0 775.9M1146.0 700.5L908.5 898.2M988.4 494.2L740.8 679.2M1014.3 527.5L768.3 714.6M1084.1 618.5L842.5 811.3M1128.0 676.2L889.3 872.5M1040.2 560.8L795.8 750.0M1171.9 733.8L936.1 933.6M1110.0 651.9L870.1 846.7M1066.1 594.2L823.3 785.4M996.2 503.1L749.0 688.6M1153.9 709.5L916.9 907.9M1022.1 536.4L776.5 724.1M1092.0 627.5L850.9 820.9M1135.9 685.2L897.7 882.1M1048.0 569.7L804.0 759.5M1117.9 660.9L878.4 856.3M1003.9 511.9L757.2 698.1M1073.9 603.1L831.6 795.0M1161.8 718.6L925.3 917.5M1029.9 545.3L784.8 733.6M1099.8 636.5L859.2 830.4M1143.8 694.3L906.1 891.7M1055.8 578.7L812.3 769.1M985.8 487.4L737.9 672.1M1011.7 520.8L765.5 707.6M1081.7 612.1L839.9 804.6M1125.8 669.9L886.8 865.9M1037.7 554.2L793.0 743.1M1169.8 727.7L933.7 927.2M1107.7 645.5L867.5 840.1M1063.6 587.7L820.6 778.6M1151.7 703.4L914.5 901.4M993.6 496.3L746.2 681.5M1019.5 529.7L773.7 717.1M1089.6 621.1L848.2 814.1M1133.7 679.0L895.2 875.6M1045.5 563.2L801.3 752.6" stroke-dasharray="0 8.577"/><path d="M1115.6 654.6L874.8 850.6M1071.5 596.6L827.8 789.1M1001.3 505.2L753.2 691.9M1159.7 712.5L921.8 912.0M1027.3 538.7L780.8 727.5M1097.5 630.1L855.5 824.6M1141.6 688.1L902.5 886.1M1053.3 572.1L808.5 763.0M1009.1 514.1L761.5 701.4M1123.5 663.6L883.2 860.2M1079.4 605.6L836.2 798.6M1167.6 721.6L930.3 921.7M1035.2 547.6L789.1 737.0M1105.4 639.2L863.9 834.3M1061.2 581.1L816.8 772.6M1149.6 697.2L910.9 895.8M990.9 489.5L742.1 675.2M1017.0 523.0L769.8 710.9M1087.2 614.7L844.5 808.3M1131.4 672.7L891.6 869.9M1043.0 556.6L797.4 746.5M1113.3 648.2L872.3 843.9M1069.1 590.1L825.1 782.2M998.7 498.4L750.4 684.7M1157.5 706.3L919.4 905.5M1024.8 532.0L778.0 720.4M1095.1 623.7L852.9 817.9M1139.4 681.8L900.0 879.6M1050.9 565.5L805.8 756.1M1121.2 657.3L880.7 853.6M1006.5 507.3L758.6 694.3M1077.0 599.1L833.5 791.8M1165.5 715.4L927.9 915.2M1032.6 540.9L786.3 730.0M1103.1 632.7L861.3 827.5M1147.4 690.9L908.5 889.3M1058.7 574.5L814.1 765.7M1014.4 516.3L766.9 703.8M1084.9 608.2L841.9 801.4" stroke-dasharray="0 8.616"/><path d="M1129.2 666.4L887.9 864.2M1040.5 549.9L793.5 740.5M1111.0 641.8L868.5 838.2M1066.6 583.6L821.3 776.3M1155.3 700.0L915.8 899.9M996.1 491.6L746.3 678.5M1022.2 525.3L774.0 714.3M1092.8 617.2L849.1 812.0M1137.2 675.5L896.4 873.9M1048.4 558.9L801.8 750.1M1118.9 650.9L876.9 847.8M1074.5 592.6L829.6 785.9M1003.9 500.6L754.5 688.0M1163.3 709.2L924.3 909.7M1030.1 534.2L782.3 723.9M1100.7 626.3L857.5 821.7M1145.1 684.6L904.8 883.6M1056.3 567.9L810.2 759.7M1011.8 509.5L762.8 697.6M1126.9 660.0L885.4 857.5M1082.5 601.7L838.0 795.6M1038.0 543.2L790.7 733.5M1108.7 635.4L865.9 831.4M1064.2 577.0L818.5 769.3M1153.1 693.8L913.3 893.4M1019.7 518.5L771.2 707.2M1090.4 610.7L846.4 805.2M1134.9 669.2L893.9 867.3M1045.9 552.2L799.0 743.1M1116.6 644.5L874.4 841.1M1072.1 586.0L826.9 779.0M1001.3 493.7L751.7 680.8M1161.1 702.9L921.8 903.1M1027.5 527.5L779.5 716.8M1098.4 619.8L854.9 814.9M1142.9 678.3L902.4 877.0M1053.8 561.3L807.4 752.7M1124.6 653.6L882.9 850.8M1009.2 502.7L760.0 690.4" stroke-dasharray="0 8.658"/><path d="M1080.1 595.1L834.1 789.7M1035.4 536.5L786.6 727.4M1106.3 628.9L862.0 825.7M1150.9 687.5L909.6 887.8M1061.7 570.3L814.5 763.4M1017.1 511.7L767.0 701.0M1088.0 604.2L842.5 799.4M1132.6 662.8L890.1 861.6M1043.4 545.5L794.9 737.1M1114.3 638.1L870.5 835.4M1069.7 579.4L822.9 773.1M1159.0 696.7L918.1 897.6M1025.0 520.7L775.4 710.7M1096.0 613.3L851.0 809.1M1140.7 672.0L898.6 871.4M1051.3 554.6L803.4 746.7M1122.3 647.2L879.0 845.2M1077.6 588.5L831.4 782.8M1006.6 495.8L755.8 684.2M1032.9 529.7L783.7 720.3M1104.0 622.4L859.4 818.8M1148.7 681.1L907.1 881.2M1059.3 563.7L811.8 756.4M1014.5 504.9L764.1 693.8M1130.4 656.4L887.5 854.9M1085.6 597.6L839.8 792.5M1040.8 538.8L792.2 730.0M1112.0 631.6L867.9 828.6M1067.2 572.8L820.2 766.1M1156.8 690.4L915.7 891.0M1022.4 513.9L772.5 703.5M1093.6 606.7L848.3 802.2M1138.4 665.6L896.1 864.7M1048.8 547.9L800.6 739.6M1120.0 640.8L876.5 838.4M1075.2 581.9L828.7 775.8M1030.3 523.0L780.9 713.2M1101.6 615.9L856.8 812.0M1146.5 674.8L904.6 874.5" stroke-dasharray="0 8.705"/><path d="M1056.8 557.0L807.6 750.5M1128.1 649.9L883.6 849.3M1083.2 591.0L835.7 786.7M1011.9 498.0L759.8 687.7M1038.3 532.0L787.9 724.0M1109.7 625.1L863.9 822.9M1154.5 684.0L911.8 885.5M1064.8 566.1L816.0 760.2M1019.8 507.0L768.2 697.4M1091.2 600.2L844.2 796.4M1136.1 659.1L892.1 859.1M1046.3 541.1L796.3 733.7M1117.7 634.3L872.4 832.7M1072.8 575.2L824.5 769.9M1027.8 516.1L776.6 707.1M1099.3 609.3L852.7 806.2M1144.2 668.4L900.7 869.0M1054.3 550.2L804.8 743.4M1125.8 643.5L881.0 842.5M1080.8 584.4L833.0 779.7M1035.7 525.2L785.1 716.8M1107.3 618.5L861.3 816.0M1152.3 677.6L909.3 878.8M1062.3 559.4L813.3 753.1M1017.2 500.2L765.3 690.1M1133.9 652.7L889.6 852.4M1088.8 593.5L841.5 789.5M1043.7 534.3L793.5 726.5M1115.4 627.7L869.8 825.8M1070.3 568.5L821.8 762.9M1025.2 509.2L773.7 699.8M1096.9 602.7L850.1 799.3M1142.0 661.9L898.2 862.2M1051.7 543.4L802.0 736.3M1123.5 636.9L878.4 835.7M1078.3 577.7L830.3 772.7M1033.2 518.4L782.2 709.6M1104.9 611.9L858.6 809.1M1150.1 671.2L906.8 872.1" stroke-dasharray="0 8.756"/><path d="M1059.8 552.6L808.9 747.3M1131.6 646.2L885.4 846.9M1086.4 586.9L837.2 783.8M1041.2 527.5L789.0 720.6M1113.0 621.1L865.6 820.3M1067.8 561.8L817.4 757.1M1022.6 502.3L769.2 693.8M1094.5 596.1L845.8 793.6M1139.7 655.5L894.0 856.7M1049.2 536.6L797.6 730.4M1121.1 630.4L874.2 830.1M1075.9 571.0L825.9 766.9M1030.6 511.5L777.7 703.6M1102.6 605.3L854.4 803.4M1147.8 664.7L902.7 866.6M1057.3 545.8L806.1 740.1M1129.3 639.7L882.8 840.0M1084.0 580.2L834.5 776.7M1038.6 520.6L786.2 713.3M1110.7 614.5L863.0 813.3M1065.3 555.0L814.6 750.0M1137.4 648.9L891.5 849.9M1092.1 589.4L843.1 786.6M1046.7 529.8L794.7 723.1M1118.8 623.8L871.6 823.2M1073.4 564.2L823.2 759.8M1028.0 504.5L774.8 696.3M1100.2 598.6L851.7 796.4M1145.6 658.2L900.2 859.8M1054.7 539.0L803.3 732.9M1126.9 633.1L880.3 833.1M1081.5 573.4L831.8 769.6M1036.0 513.7L783.4 706.1M1108.3 607.9L860.3 806.3M1062.8 548.2L811.9 742.8M1135.1 642.4L888.9 843.0M1089.6 582.7L840.4 779.5M1044.1 522.9L791.9 715.9M1116.4 617.2L869.0 816.2" stroke-dasharray="0 8.813"/><path d="M1070.9 557.4L818.5 754.1M1097.8 591.9L847.1 790.9M1143.3 651.7L895.7 854.5M1052.2 532.1L798.5 727.2M1124.6 626.5L875.8 827.7M1079.0 566.6L827.1 764.0M1033.4 506.7L778.5 700.2M1105.9 601.2L855.8 800.8M1060.3 541.3L807.1 737.1M1132.8 635.8L884.5 837.6M1087.2 575.9L835.8 773.9M1041.5 515.9L787.1 710.1M1114.1 610.5L864.4 810.8M1068.4 550.6L815.7 746.9M1141.0 645.2L893.2 847.6M1095.3 585.2L844.4 783.8M1049.6 525.2L795.7 719.9M1122.3 619.8L873.1 820.7M1076.6 559.8L824.4 756.8M1103.5 594.5L853.1 793.8M1057.8 534.4L804.3 729.8M1130.5 629.2L881.9 830.7M1084.7 569.1L833.0 766.7M1039.0 509.0L784.2 702.7M1111.7 603.8L861.8 803.7M1065.9 543.7L813.0 739.7M1138.7 638.5L890.6 840.7M1092.9 578.4L841.7 776.7M1047.1 518.2L792.9 712.6M1119.9 613.2L870.5 813.7M1074.1 553.0L821.6 749.6M1101.1 587.7L850.4 786.6M1055.2 527.5L801.5 722.5M1128.1 622.5L879.2 823.7M1082.3 562.3L830.3 759.6M1109.3 597.1L859.1 796.6M1063.4 536.8L810.2 732.4M1136.4 631.9L888.0 833.7M1090.5 571.6L839.0 769.5" stroke-dasharray="0 8.881"/><path d="M1044.5 511.2L787.6 707.1M1117.5 606.4L865.5 808.5M1071.6 546.1L816.4 744.2M1098.7 580.9L845.3 781.4M1052.7 520.5L796.2 717.0M1125.8 615.8L874.3 818.5M1079.8 555.4L825.1 754.2M1106.9 590.3L854.1 791.4M1060.9 529.8L804.9 726.9M1134.0 625.2L883.0 828.6M1088.0 564.7L833.9 764.2M1115.2 599.7L862.8 801.4M1069.1 539.1L813.6 736.9M1096.2 574.1L842.6 774.2M1050.1 513.5L793.4 709.6M1123.4 609.1L871.6 811.5M1077.3 548.5L822.4 746.9M1104.5 583.5L851.4 784.2M1058.3 522.8L802.1 719.6M1131.7 618.5L880.4 821.5M1085.5 557.8L831.1 756.9M1112.7 592.9L860.1 794.3M1066.5 532.1L810.8 729.6M1093.8 567.2L839.9 766.9M1121.0 602.3L869.0 804.3M1074.8 541.5L819.6 739.6M1102.0 576.6L848.6 777.0M1055.7 515.8L799.2 712.2M1129.3 611.7L877.8 814.4M1083.0 550.9L828.3 749.6M1110.3 586.0L857.5 787.1M1064.0 525.1L808.0 722.2M1091.3 560.3L837.1 759.7M1118.6 595.5L866.3 797.2M1072.2 534.5L816.7 732.2M1099.6 569.7L845.9 769.7M1127.0 604.9L875.1 807.3M1080.5 543.9L825.5 742.3M1107.9 579.2L854.7 779.8" stroke-dasharray="0 8.965"/><path d="M1061.4 518.1L801.5 717.5M1088.8 553.3L830.8 755.1M1116.2 588.6L860.0 792.8M1069.7 527.5L810.3 727.6M1097.1 562.8L839.6 765.2M1124.6 598.1L868.9 802.9M1078.0 536.9L819.1 737.7M1105.5 572.2L848.5 775.4M1086.3 546.3L828.0 747.8M1113.8 581.7L857.3 785.5M1067.1 520.4L807.5 720.1M1094.7 555.8L836.8 757.9M1122.2 591.2L866.2 795.7M1075.5 529.8L816.3 730.2M1103.0 565.3L845.7 768.0M1083.8 539.3L825.2 740.3M1111.4 574.8L854.6 778.2M1092.2 548.8L834.0 750.5M1119.8 584.3L863.5 788.4M1072.9 522.7L813.5 722.7M1100.5 558.3L842.9 760.7M1081.3 532.2L822.3 732.9M1108.9 567.8L851.9 770.9M1089.7 541.7L831.2 743.1M1117.4 577.3L860.8 781.1M1098.1 551.2L840.2 753.2M1078.7 525.1L819.5 725.4M1106.5 560.8L849.1 763.5M1087.1 534.6L828.4 735.6M1114.9 570.3L858.1 773.7M1095.6 544.1L837.4 745.8M1104.0 553.7L846.3 756.0M1084.6 527.5L825.6 728.0M1112.5 563.3L855.3 766.3M1093.0 537.0L834.6 738.3M1101.5 546.6L843.6 748.5M1110.0 556.2L852.6 758.8M1090.5 529.8L831.7 730.7M1099.0 539.5L840.7 741.0" stroke-dasharray="0 9.091"/><path d="M1107.5 549.1L846.0 754.3M1096.5 532.3L834.1 736.4M1105.0 541.9L843.2 746.8M1102.5 534.7L840.3 739.2" stroke-dasharray="0 9.226"/></g><g opacity=".75"><path d="M930.500 566V790" stroke="#3aa868" stroke-width="1.100" stroke-dasharray="5 3" fill="none"/><path d="M921 574l9.500-14 9.500 18" stroke="#3aa868" stroke-width="1.100" stroke-dasharray="4 2" fill="none"/></g><path d="M925 1003L927.500 866" stroke="#2ee070" stroke-width="1.150"/><path d="M928 836l8 28q-8 4-16 0z" fill="#2ee070"/><path d="M925 1003L1041 951" stroke="#2f6fe6" stroke-width="1.150"/><path d="M1063 942l-20 15q-6-5-3-13z" fill="#2f6fe6"/><path d="M925 1003L1034 1080" stroke="#ea3838" stroke-width="1.150"/><path d="M1056 1095l-27-7q2-8 9-10z" fill="#ea3838"/><path d="M982 887l33-17v37M1003 877l12 14" stroke="#e8484a" stroke-width="1.200" fill="none"/><path d="M1003 877l12-7v21z" fill="#e8a0b0" fill-opacity=".6"/><path d="M974 934l33 22v39M993 947c6 10 10 20 14 35" stroke="#3a78e6" stroke-width="1.200" fill="none"/><path d="M993 947l14 9v26z" fill="#a8b8e8" fill-opacity=".6"/><path d="M1056 995l31 19-31 18M1071 1004c3 6 3 12 0 20" stroke="#38d860" stroke-width="1.200" fill="none"/><path d="M1282 1245l3 12M1267 1262l18 3" stroke="#c04858" stroke-width="1" fill="none"/><path d="M1219 862l14 3" stroke="#7080d0" stroke-width="1" fill="none"/><rect x="38" y="162" width="1678" height="89.500" fill="#000" fill-opacity=".2"/><rect x="38" y="1192.500" width="1678" height="90" fill="#000" fill-opacity=".2"/><path d="M1673.500 204V188" stroke="#38d860" stroke-width="1.300"/><path d="M1673.500 204l14-5" stroke="#3a78e6" stroke-width="1.500"/><path d="M1673.500 204l11 6" stroke="#e8484a" stroke-width="1.300"/><path d="M38.500 1282V162.500H1715.500V1282" stroke="#5c5c5c" stroke-width="1" fill="none"/></svg>
<div style="left:40px;top:166px;width:70px;height:24px;background:rgba(38,38,38,.55);"></div>
<span style="top:169.0px;font-size:16px;line-height:18px;color:#f0f0f0;left:43px;">透视视图</span>
<div style="left:822px;top:166px;width:104px;height:22px;background:rgba(120,120,120,.45);"></div>
<span style="top:168.0px;font-size:16px;line-height:18px;color:#f0f0f0;left:824px;">默认摄像机</span>
<svg style="left:906px;top:169px;" width="22" height="16"><path d="M4 3h8v4M2 7h11v7H2z" fill="none" stroke="#c8d0f0" stroke-width="1.300"/><rect x="1" y="9" width="7" height="6" rx="1" fill="#1a1a1a"/><path d="M20 4v7l-4-3.500z" fill="#c8d0f0"/></svg>
<span style="top:167.5px;font-size:17px;line-height:19px;color:#38d860;left:1668px;">Y</span>
<span style="top:187.5px;font-size:17px;line-height:19px;color:#3a78e6;left:1693px;">Z</span>
<span style="top:207.5px;font-size:17px;line-height:19px;color:#e8484a;left:1690px;">X</span>
<div style="left:290px;top:174px;width:177px;height:28px;background:#5a5a5a;"></div>
<span style="top:178.5px;font-size:17px;line-height:19px;color:#f2bd1c;letter-spacing:0.19px;left:294px;">Number of emitters: 1</span>
<div style="left:290px;top:203px;width:198px;height:29px;background:#5a5a5a;"></div>
<span style="top:207.5px;font-size:17px;line-height:19px;color:#f2bd1c;letter-spacing:-0.10px;left:294px;">Total live particles: 51414</span>
<div style="left:41px;top:524px;width:60px;height:23px;background:rgba(140,140,140,.75);border-radius:3px;"></div>
<span style="top:527.0px;font-size:16px;line-height:18px;color:#e4e4e4;left:43px;">移动</span>
<svg style="left:79px;top:527px;" width="18" height="18"><path d="M3 9h12M9 3v12" stroke="#bdbdbd" stroke-width="1.2"/><path d="M9 1l2.2 3.2h-4.4zM9 17l2.2 -3.2h-4.4zM1 9l3.2 2.2v-4.4zM17 9l-3.2 2.2v-4.4z" fill="#bdbdbd"/></svg>
<div style="left:1557px;top:1256px;width:155px;height:23px;background:rgba(128,128,128,.8);border-radius:3px;"></div>
<span style="top:1259.0px;font-size:16px;line-height:18px;color:#ececec;left:1560px;">网格间距</span>
<span style="top:1258.5px;font-size:16px;line-height:18px;color:#ececec;left:1628.5px;">:</span>
<span style="top:1258.5px;font-size:17px;line-height:19px;color:#ececec;letter-spacing:-0.36px;left:1637.5px;">50 cm</span>
<div style="left:1716px;top:162px;width:1px;height:1121px;background:#222;"></div>
<div style="left:1720px;top:95px;width:36px;height:1278px;background:#2b2b2b;"></div>
<svg style="left:1722px;top:97px" width="26" height="6"><path d="M0 .5h26M0 4.500h26" stroke="#4a4a4a" stroke-width="1" stroke-dasharray="1 2"/></svg>
<svg style="left:1720px;top:124px;background:#3b3b3b;border-radius:5px 5px 5px 5px" width="36" height="36"><path d="M8 8v20h21" fill="none" stroke="#a7b4ff" stroke-width="2.400"/><path d="M8 4l-3.500 5h7zM33 28l-5-3.500v7z" fill="#a7b4ff"/><circle cx="23" cy="13" r="7.500" fill="#c3cbff"/></svg>
<svg style="left:1720px;top:170px;background:#3b3b3b;border-radius:5px 5px 0px 0px" width="36" height="36"><rect x="8" y="8" width="20" height="20" fill="none" stroke="#7fdcff" stroke-width="2.400"/><path d="M35 35 h-6 l6 -6z" fill="#9a9a9a"/></svg>
<svg style="left:1720px;top:206px;background:#3b3b3b;border-radius:0px 0px 0px 0px" width="36" height="36"><path d="M18 5l11 6-11 6-11-6z" fill="#a8e8ff"/><path d="M7 11l11 6v13L7 24z" fill="#5cc8f4"/><path d="M29 11l-11 6v13l11-6z" fill="#3aa6dc"/><path d="M35 35 h-6 l6 -6z" fill="#9a9a9a"/><path d="M3 0.5h30" stroke="#333" stroke-width="1"/></svg>
<svg style="left:1720px;top:242px;background:#3b3b3b;border-radius:0px 0px 5px 5px" width="36" height="36"><path d="M8 7h20v4M18 7v21M13 28h10" fill="none" stroke="#7fdcff" stroke-width="2.600"/><path d="M35 35 h-6 l6 -6z" fill="#9a9a9a"/><path d="M3 0.5h30" stroke="#333" stroke-width="1"/></svg>
<svg style="left:1720px;top:287px;background:#3b3b3b;border-radius:5px 5px 0px 0px" width="36" height="36"><circle cx="18" cy="18" r="8" fill="#4fd86a"/><path d="M8 8h20v20H8z" fill="none" stroke="#c8c8c8" stroke-width="1.200" stroke-dasharray="2 2"/><rect x="6" y="6" width="4" height="4" fill="#e8e8e8"/><rect x="26" y="6" width="4" height="4" fill="#e8e8e8"/><rect x="6" y="26" width="4" height="4" fill="#e8e8e8"/><rect x="26" y="26" width="4" height="4" fill="#e8e8e8"/><rect x="16" y="4" width="4" height="4" fill="#e8e8e8"/><rect x="16" y="28" width="4" height="4" fill="#e8e8e8"/><path d="M35 35 h-6 l6 -6z" fill="#9a9a9a"/></svg>
<svg style="left:1720px;top:323px;background:#3b3b3b;border-radius:0px 0px 0px 0px" width="36" height="36"><path d="M18 4l6 3.0l-6 3.0l-6 -3.0z" fill="#7be88c"/><path d="M12 7.0l6 3.0v6l-6 -3.0z" fill="#3fbf58"/><path d="M24 7.0l-6 3.0v6l6 -3.0z" fill="#2f9a46"/><path d="M12 15l6 3.0l-6 3.0l-6 -3.0z" fill="#7be88c"/><path d="M6 18.0l6 3.0v6l-6 -3.0z" fill="#3fbf58"/><path d="M18 18.0l-6 3.0v6l6 -3.0z" fill="#2f9a46"/><path d="M24 15l6 3.0l-6 3.0l-6 -3.0z" fill="#7be88c"/><path d="M18 18.0l6 3.0v6l-6 -3.0z" fill="#3fbf58"/><path d="M30 18.0l-6 3.0v6l6 -3.0z" fill="#2f9a46"/><circle cx="30" cy="6" r="3" fill="#e8dca0"/><path d="M35 35 h-6 l6 -6z" fill="#9a9a9a"/><path d="M3 0.5h30" stroke="#333" stroke-width="1"/></svg>
<svg style="left:1720px;top:359px;background:#3b3b3b;border-radius:0px 0px 5px 5px" width="36" height="36"><g transform="translate(18,18)"><circle r="6.66" fill="#e8e8e8"/><rect x="-1.98" y="-9.00" width="3.96" height="18.00" transform="rotate(0)" fill="#e8e8e8"/><rect x="-1.98" y="-9.00" width="3.96" height="18.00" transform="rotate(45)" fill="#e8e8e8"/><rect x="-1.98" y="-9.00" width="3.96" height="18.00" transform="rotate(90)" fill="#e8e8e8"/><rect x="-1.98" y="-9.00" width="3.96" height="18.00" transform="rotate(135)" fill="#e8e8e8"/><circle r="2.88" fill="#3b3b3b"/></g><circle cx="29.0" cy="18.0" r="2.600" fill="#4fd86a"/><circle cx="23.5" cy="27.5" r="2.600" fill="#4fd86a"/><circle cx="12.5" cy="27.5" r="2.600" fill="#4fd86a"/><circle cx="7.0" cy="18.0" r="2.600" fill="#4fd86a"/><circle cx="12.5" cy="8.5" r="2.600" fill="#4fd86a"/><circle cx="23.5" cy="8.5" r="2.600" fill="#4fd86a"/><circle cx="18" cy="18" r="3" fill="#4fd86a"/><path d="M35 35 h-6 l6 -6z" fill="#9a9a9a"/><path d="M3 0.5h30" stroke="#333" stroke-width="1"/></svg>
<svg style="left:1720px;top:399px;background:#3b3b3b;border-radius:5px 5px 0px 0px" width="36" height="36"><path d="M10 12c2-6 12-6 16 2s2 16-4 14S6 20 10 12z" fill="none" stroke="#9a8cf0" stroke-width="2.400"/><path d="M14 13c4 2 8 8 10 14" fill="none" stroke="#9a8cf0" stroke-width="2"/><path d="M35 35 h-6 l6 -6z" fill="#9a9a9a"/></svg>
<svg style="left:1720px;top:435px;background:#3b3b3b;border-radius:0px 0px 5px 5px" width="36" height="36"><path d="M9 8v20h21" fill="none" stroke="#9a8cf0" stroke-width="2.200"/><path d="M9 4l-3.500 5h7zM33 28l-5-3.500v7z" fill="#9a8cf0"/><path d="M22 6l6 3v7l-6 3-6-3V9z M16 9l6 3 6-3M22 12v7" fill="none" stroke="#9a8cf0" stroke-width="1.300"/><path d="M35 35 h-6 l6 -6z" fill="#9a9a9a"/><path d="M3 0.5h30" stroke="#333" stroke-width="1"/></svg>
<svg style="left:1720px;top:475px;background:#3b3b3b;border-radius:5px 5px 5px 5px" width="36" height="36"><path d="M7 10l11 8-11 8zM29 10l-11 8 11 8z" fill="none" stroke="#e08ae8" stroke-width="2.200" stroke-linejoin="round"/><path d="M12 24l14-12" stroke="#e08ae8" stroke-width="2"/><path d="M35 35 h-6 l6 -6z" fill="#9a9a9a"/></svg>
<svg style="left:1720px;top:521px;background:#3b3b3b;border-radius:5px 5px 0px 0px" width="36" height="36"><path d="M18 3l13 7.500v15L18 33 5 25.500v-15z" fill="#e03a44"/><path d="M18 3l13 7.500L18 18 5 10.500z" fill="#f0606a"/><path d="M18 18l13-7.500v15L18 33z" fill="#c8202c"/><ellipse cx="18" cy="18" rx="6.500" ry="8.500" fill="none" stroke="#7a0810" stroke-width="2.400"/></svg>
<svg style="left:1720px;top:557px;background:#3b3b3b;border-radius:0px 0px 0px 0px" width="36" height="36"><path d="M18 3l13 7.500v15L18 33 5 25.500v-15z" fill="#e03a44"/><path d="M18 3l13 7.500L18 18 5 10.500z" fill="#f0606a"/><path d="M18 18l13-7.500v15L18 33z" fill="#c8202c"/><path d="M9 21a9 9 0 0 1 18 0c0 4-18 4-18 0z M9 21c3-3 15-3 18 0" fill="none" stroke="#7a0810" stroke-width="2.200"/><circle cx="30" cy="6" r="3" fill="#e8dca0"/><path d="M35 35 h-6 l6 -6z" fill="#9a9a9a"/></svg>
<svg style="left:1720px;top:593px;background:#3b3b3b;border-radius:0px 0px 0px 0px" width="36" height="36"><path d="M18 3l13 7.500v15L18 33 5 25.500v-15z" fill="#e03a44"/><path d="M18 3l13 7.500L18 18 5 10.500z" fill="#f0606a"/><path d="M18 18l13-7.500v15L18 33z" fill="#c8202c"/><path d="M18 8a6 6 0 0 1 3.500 11v3h-7v-3A6 6 0 0 1 18 8z" fill="none" stroke="#7a0810" stroke-width="2.200"/><path d="M15 25h6v3h-6z" fill="#7a0810"/><circle cx="30" cy="6" r="3" fill="#e8dca0"/><path d="M35 35 h-6 l6 -6z" fill="#9a9a9a"/></svg>
<svg style="left:1720px;top:629px;background:#3b3b3b;border-radius:0px 0px 0px 0px" width="36" height="36"><path d="M18 3l13 7.500v15L18 33 5 25.500v-15z" fill="#e03a44"/><path d="M18 3l13 7.500L18 18 5 10.500z" fill="#f0606a"/><path d="M18 18l13-7.500v15L18 33z" fill="#c8202c"/><path d="M8 13h5l1.500-2.500h7L23 13h5v13H8z" fill="#7a0810"/><circle cx="18" cy="19" r="4" fill="#e03a44"/><circle cx="18" cy="19" r="2" fill="#7a0810"/><circle cx="30" cy="6" r="3" fill="#e8dca0"/></svg>
<svg style="left:1720px;top:665px;background:#3b3b3b;border-radius:0px 0px 0px 0px" width="36" height="36"><path d="M18 3l13 7.500v15L18 33 5 25.500v-15z" fill="#e03a44"/><path d="M18 3l13 7.500L18 18 5 10.500z" fill="#f0606a"/><path d="M18 18l13-7.500v15L18 33z" fill="#c8202c"/><path d="M18 9l8 4.500v9L18 27l-8-4.500v-9z M10 13.500l8 4.500 8-4.500M18 18v9" fill="none" stroke="#7a0810" stroke-width="2.200"/><circle cx="30" cy="6" r="3" fill="#e8dca0"/></svg>
<svg style="left:1720px;top:701px;background:#3b3b3b;border-radius:0px 0px 0px 0px" width="36" height="36"><path d="M18 3l13 7.500v15L18 33 5 25.500v-15z" fill="#e03a44"/><path d="M18 3l13 7.500L18 18 5 10.500z" fill="#f0606a"/><path d="M18 18l13-7.500v15L18 33z" fill="#c8202c"/><path d="M11 24a4 4 0 0 1 .5-8a6 6 0 0 1 11.500-1.500a4.500 4.500 0 0 1 1 9.500z" fill="none" stroke="#7a0810" stroke-width="2.200"/><circle cx="30" cy="6" r="3" fill="#e8dca0"/></svg>
<svg style="left:1720px;top:737px;background:#3b3b3b;border-radius:0px 0px 0px 0px" width="36" height="36"><circle cx="19" cy="16" r="10.500" fill="none" stroke="#c4ccf8" stroke-width="2"/><ellipse cx="19" cy="16" rx="4.500" ry="10.500" fill="none" stroke="#c4ccf8" stroke-width="1.600"/><path d="M8.500 16h21M10 10h18M10 22h18" stroke="#c4ccf8" stroke-width="1.600"/><rect x="5" y="21" width="12" height="10" rx="2" fill="#1a1a1a"/><text x="11" y="29" font-size="8" font-weight="bold" font-family="Liberation Sans" text-anchor="middle" fill="#e8e8e8">ST</text><path d="M35 35 h-6 l6 -6z" fill="#9a9a9a"/></svg>
<svg style="left:1720px;top:773px;background:#3b3b3b;border-radius:0px 0px 0px 0px" width="36" height="36"><path d="M12 8h10v5" fill="none" stroke="#c4ccf8" stroke-width="2"/><rect x="8" y="14" width="16" height="11" rx="2" fill="none" stroke="#c4ccf8" stroke-width="2.200"/><path d="M33 12v14l-7-7z" fill="#c4ccf8"/><rect x="5" y="21" width="12" height="10" rx="2" fill="#1a1a1a"/><text x="11" y="29" font-size="8" font-weight="bold" font-family="Liberation Sans" text-anchor="middle" fill="#e8e8e8">ST</text><path d="M35 35 h-6 l6 -6z" fill="#9a9a9a"/></svg>
<svg style="left:1720px;top:809px;background:#3b3b3b;border-radius:0px 0px 5px 5px" width="36" height="36"><path d="M20 8a6.500 6.500 0 0 1 4 11.500v3h-7" fill="none" stroke="#c4ccf8" stroke-width="2.200"/><path d="M20 2v3M30 7l-2.500 2.500M33 16h-3.500M10 7l2.500 2.500M7 16h3.500" stroke="#c4ccf8" stroke-width="1.800"/><path d="M19 26h5M19 29h5" stroke="#c4ccf8" stroke-width="1.800"/><rect x="5" y="21" width="12" height="10" rx="2" fill="#1a1a1a"/><text x="11" y="29" font-size="8" font-weight="bold" font-family="Liberation Sans" text-anchor="middle" fill="#e8e8e8">ST</text><path d="M35 35 h-6 l6 -6z" fill="#9a9a9a"/></svg>
<svg style="left:1720px;top:865px;background:#3b3b3b;border-radius:5px 5px 5px 5px" width="36" height="36"><path d="M18 4l12 7v14l-12 7-12-7V11z" fill="none" stroke="#c8c8c8" stroke-width="2.200"/><path d="M13 24l2-5 9-9 3 3-9 9z" fill="#e8e8e8"/><path d="M27 4l5 5" stroke="#3b3b3b" stroke-width="5"/><path d="M25.500 8.500l3 3" stroke="#e8e8e8" stroke-width="3.600"/><path d="M35 35 h-6 l6 -6z" fill="#9a9a9a"/></svg>
<div style="left:1758px;top:95px;width:802px;height:29px;background:#1e1e1e;"></div>
<div style="left:1758px;top:95px;width:61px;height:29px;background:#2b2b2b;border-radius:4px 4px 0 0;"></div>
<span style="top:100.0px;font-size:16px;line-height:18px;color:#e6e6e6;left:1772px;">对象</span>
<span style="top:100.0px;font-size:16px;line-height:18px;color:#6e6e6e;left:1835px;">场次</span>
<div style="left:1758px;top:124px;width:802px;height:542px;background:#2b2b2b;"></div>
<svg style="left:1763px;top:131px;" width="16" height="16"><path d="M1 3.500h13M1 8h13M1 12.500h13" stroke="#a8a8a8" stroke-width="1.800"/></svg>
<span style="top:129.0px;font-size:16px;line-height:18px;color:#b8b8b8;left:1788px;">文件</span>
<span style="top:129.0px;font-size:16px;line-height:18px;color:#b8b8b8;left:1834px;">编辑</span>
<span style="top:129.0px;font-size:16px;line-height:18px;color:#b8b8b8;left:1880px;">查看</span>
<span style="top:129.0px;font-size:16px;line-height:18px;color:#b8b8b8;left:1926px;">对象</span>
<span style="top:129.0px;font-size:16px;line-height:18px;color:#b8b8b8;left:1972px;">标签</span>
<span style="top:129.0px;font-size:16px;line-height:18px;color:#b8b8b8;left:2018px;">书签</span>
<svg style="left:2480px;top:130px;" width="78" height="18"><circle cx="7" cy="7.500" r="4.500" fill="none" stroke="#a8a8a8" stroke-width="1.800"/><path d="M10.500 11l4.500 4.500" stroke="#a8a8a8" stroke-width="2"/><path d="M23 9l6-5.500 6 5.500v7.500h-4v-5h-4v5h-4z" fill="none" stroke="#a8a8a8" stroke-width="1.700"/><path d="M41 4h14M44 9h8M46.500 14h3" stroke="#a8a8a8" stroke-width="2"/><path d="M68 3h-6v13h13v-6" fill="none" stroke="#a8a8a8" stroke-width="1.700"/><path d="M66 12l9-9M70 2.500h5.500V8" fill="none" stroke="#a8a8a8" stroke-width="1.700"/></svg>
<div style="left:1758px;top:155.5px;width:795px;height:23px;background:#232323;"></div>
<div style="left:1758px;top:178.5px;width:795px;height:23px;background:#2b2b2b;"></div>
<div style="left:1758px;top:201.5px;width:795px;height:23px;background:#232323;"></div>
<div style="left:1758px;top:224.5px;width:795px;height:23px;background:#2b2b2b;"></div>
<div style="left:1758px;top:247.5px;width:795px;height:23px;background:#232323;"></div>
<div style="left:1758px;top:270.5px;width:795px;height:23px;background:#2b2b2b;"></div>
<div style="left:1758px;top:293.5px;width:795px;height:23px;background:#232323;"></div>
<div style="left:1921px;top:155px;width:1px;height:510px;background:#232323;"></div>
<div style="left:2553px;top:155px;width:7px;height:510px;background:#2b2b2b;"></div>
<svg style="left:1757px;top:155px;" width="40" height="165"><path d="M9.500 0v150M9.500 11.500h7M9.500 34.500h7M9.500 126.500h7M9.500 149.500h7M21.500 65v38M21.500 80.500h6M21.500 103.500h6" stroke="#555" stroke-width="1" fill="none"/><rect x="2.500" y="52.500" width="8" height="8" fill="#232323" stroke="#777"/><path d="M4.500 56.500h4" stroke="#999"/></svg>
<span style="top:157.5px;font-size:17px;line-height:19px;color:#b8b8b8;letter-spacing:0.13px;left:1794px;">nxGravity</span>
<svg style="left:1877px;top:159px;" width="42" height="16"><rect x="0" y="2" width="12" height="12" rx="2.200" fill="#868686"/><circle cx="20" cy="3.700" r="2.800" fill="#585858"/><circle cx="20" cy="12.300" r="2.800" fill="#585858"/><path d="M28 8.500l3.500 3.500 6.500-8" fill="none" stroke="#4fd86a" stroke-width="2"/></svg>
<span style="top:180.5px;font-size:17px;line-height:19px;color:#b8b8b8;letter-spacing:0.25px;left:1794px;">xpEmitter</span>
<svg style="left:1877px;top:182px;" width="42" height="16"><rect x="0" y="2" width="12" height="12" rx="2.200" fill="#868686"/><circle cx="20" cy="3.700" r="2.800" fill="#585858"/><circle cx="20" cy="12.300" r="2.800" fill="#585858"/><path d="M28 8.500l3.500 3.500 6.500-8" fill="none" stroke="#4fd86a" stroke-width="2"/></svg>
<span style="top:204.0px;font-size:16px;line-height:18px;color:#b8b8b8;left:1794px;">放样</span>
<svg style="left:1877px;top:205px;" width="42" height="16"><rect x="0" y="2" width="12" height="12" rx="2.200" fill="#868686"/><circle cx="20" cy="3.700" r="2.800" fill="#585858"/><circle cx="20" cy="12.300" r="2.800" fill="#585858"/><path d="M28 8.500l3.500 3.500 6.500-8" fill="none" stroke="#4fd86a" stroke-width="2"/></svg>
<span style="top:227.0px;font-size:16px;line-height:18px;color:#b8b8b8;left:1806px;">圆环</span>
<svg style="left:1877px;top:228px;" width="42" height="16"><rect x="0" y="2" width="12" height="12" rx="2.200" fill="#868686"/><circle cx="20" cy="3.700" r="2.800" fill="#585858"/><circle cx="20" cy="12.300" r="2.800" fill="#585858"/><path d="M28 8.500l3.500 3.500 6.500-8" fill="none" stroke="#4fd86a" stroke-width="2"/></svg>
<span style="top:250.0px;font-size:16px;line-height:18px;color:#b8b8b8;left:1806px;">圆环</span>
<svg style="left:1877px;top:251px;" width="42" height="16"><rect x="0" y="2" width="12" height="12" rx="2.200" fill="#868686"/><circle cx="20" cy="3.700" r="2.800" fill="#585858"/><circle cx="20" cy="12.300" r="2.800" fill="#585858"/><path d="M28 8.500l3.500 3.500 6.500-8" fill="none" stroke="#4fd86a" stroke-width="2"/></svg>
<span style="top:273.0px;font-size:16px;line-height:18px;color:#f5b21a;left:1794px;">平面</span>
<svg style="left:1877px;top:274px;" width="42" height="16"><rect x="0" y="2" width="12" height="12" rx="2.200" fill="#868686"/><circle cx="20" cy="3.700" r="2.800" fill="#585858"/><circle cx="20" cy="12.300" r="2.800" fill="#585858"/><path d="M28 8.500l3.500 3.500 6.500-8" fill="none" stroke="#4fd86a" stroke-width="2"/></svg>
<span style="top:296.0px;font-size:16px;line-height:18px;color:#b8b8b8;left:1794px;">立方体</span>
<svg style="left:1877px;top:297px;" width="42" height="16"><rect x="0" y="2" width="12" height="12" rx="2.200" fill="#868686"/><circle cx="20" cy="3.700" r="2.900" fill="#e25a5a"/><circle cx="20" cy="12.300" r="2.900" fill="#e25a5a"/></svg>
<span style="top:226.5px;font-size:17px;line-height:19px;color:#b8b8b8;left:1838px;">.1</span>
<svg style="left:1775px;top:159px;" width="16" height="16"><rect x="0" y="0" width="15" height="15" rx="2" fill="#f08a3c"/><circle cx="4" cy="4" r="2" fill="#fff"/><circle cx="11" cy="4" r="2" fill="#fff"/><circle cx="7.500" cy="8" r="2.200" fill="#fff"/><path d="M7.500 9v5l-2-2M7.500 14l2-2" stroke="#222" stroke-width="1.400" fill="none"/></svg>
<svg style="left:1775px;top:182px;" width="16" height="16"><path d="M1 3h13.500v5c0 4-3 6.500-6.700 7.500C4 14.500 1 12 1 8z" fill="#ee8a4a"/><circle cx="4" cy="4" r="2" fill="#fff" stroke="#222" stroke-width=".8"/><circle cx="11" cy="4" r="2" fill="#fff" stroke="#222" stroke-width=".8"/><circle cx="4" cy="11" r="2" fill="#fff" stroke="#222" stroke-width=".8"/><circle cx="11" cy="11" r="2" fill="#fff" stroke="#222" stroke-width=".8"/><circle cx="7.500" cy="7.500" r="2" fill="#fff" stroke="#222" stroke-width=".8"/></svg>
<svg style="left:1776px;top:205px;" width="14" height="15"><path d="M4 1.500h6v6l3 3.500-6 3-6-3 3-3.500z" fill="#4fd86a"/><ellipse cx="7" cy="1.800" rx="3" ry="1.400" fill="#e0e0e0"/><ellipse cx="7" cy="1.800" rx="1.800" ry=".7" fill="#444"/><path d="M1 11l6 3 6-3" fill="none" stroke="#d8f8e0" stroke-width="1"/></svg>
<svg style="left:1787px;top:229px;" width="14" height="14"><circle cx="7" cy="7" r="5.500" fill="none" stroke="#8fd8f8" stroke-width="1.500"/></svg>
<svg style="left:1787px;top:252px;" width="14" height="14"><circle cx="7" cy="7" r="5.500" fill="none" stroke="#8fd8f8" stroke-width="1.500"/></svg>
<svg style="left:1775px;top:276px;" width="15" height="12"><path d="M7.500 1l7 5-7 5-7-5z" fill="#6ccdf6"/><path d="M4 3.500l7 5M11 3.500l-7 5" stroke="#e8f8ff" stroke-width="1"/></svg>
<svg style="left:1775px;top:297px;" width="15" height="15"><path d="M7.500 2L13 13H2z" fill="#7fd4f8"/><circle cx="7.500" cy="2.500" r="1.600" fill="#fff"/><circle cx="2.500" cy="12.500" r="1.600" fill="#fff"/><circle cx="12.500" cy="12.500" r="1.600" fill="#fff"/></svg>
<svg style="left:1925px;top:204px;" width="14" height="14"><path d="M1 13.500V1h12.500" fill="none" stroke="#8f86e8" stroke-width="1.400"/><path d="M3.500 3.500h7.500a7.500 7.500 0 0 1-7.500 7.500z" fill="#b4b4b4"/></svg>
<div style="left:1942px;top:202px;width:19px;height:19px;background:#1e1e1e;box-shadow:inset 0 0 0 1.200px #f0a030;"></div>
<svg style="left:1943px;top:203px;" width="17" height="17"><circle cx="8.500" cy="8.500" r="7.700" fill="#5db2ec" stroke="#0a0a0a" stroke-width="1"/><path d="M5 5l6.500 6.500M4.500 12.500l3-3M12.500 5l-2 2" stroke="#0a0a0a" stroke-width="1.500"/><path d="M3.500 13.500l3.300-.6-2.700-2.700zM13.500 4l-3.200.6 2.600 2.600z" fill="#0a0a0a"/><circle cx="4.700" cy="4.500" r="2.500" fill="#fff"/><circle cx="11.700" cy="11.200" r="3.100" fill="#b46ae0"/></svg>
<svg style="left:1923px;top:272px;" width="17" height="17"><circle cx="8.500" cy="8.500" r="7.700" fill="#5db2ec" stroke="#0a0a0a" stroke-width="1"/><path d="M5 5l6.500 6.500M4.500 12.500l3-3M12.500 5l-2 2" stroke="#0a0a0a" stroke-width="1.500"/><path d="M3.500 13.500l3.300-.6-2.700-2.700zM13.500 4l-3.200.6 2.600 2.600z" fill="#0a0a0a"/><circle cx="4.700" cy="4.500" r="2.500" fill="#fff"/><circle cx="11.700" cy="11.200" r="3.100" fill="#b46ae0"/></svg>
<svg style="left:1945px;top:273px;" width="14" height="14"><path d="M1 13.500V1h12.500" fill="none" stroke="#8f86e8" stroke-width="1.400"/><path d="M3.500 3.500h7.500a7.500 7.500 0 0 1-7.500 7.500z" fill="#b4b4b4"/></svg>
<svg style="left:1925px;top:296px;" width="14" height="14"><path d="M1 13.500V1h12.500" fill="none" stroke="#8f86e8" stroke-width="1.400"/><path d="M3.500 3.500h7.500a7.500 7.500 0 0 1-7.500 7.500z" fill="#b4b4b4"/></svg>
<svg style="left:1945px;top:297px;" width="13" height="13"><rect width="13" height="13" fill="#d8d8d8"/><rect width="6.500" height="6.500" fill="#222"/><rect x="6.500" y="6.500" width="6.500" height="6.500" fill="#222"/></svg>
<svg style="left:1962px;top:294px;" width="19" height="19"><rect width="19" height="19" fill="#6a6a6a"/><circle cx="9.500" cy="9.500" r="9" fill="#a8a8a8"/><path d="M7 2l3 0 1 3h-5z" fill="#e8e020"/><rect x="2.500" y="4" width="3.600" height="11" fill="#e03030"/><rect x="6.100" y="4" width="3.600" height="11" fill="#e8c020"/><rect x="9.700" y="4" width="3.600" height="11" fill="#30b040"/><rect x="13.300" y="4" width="3.200" height="11" fill="#3050d0"/><path d="M2 8h15M2 11.500h15" stroke="#444" stroke-width=".8"/></svg>
<svg style="left:0;top:0;pointer-events:none" width="2560" height="1400"><path d="M2093.0 291.5L2017.0 248.8" stroke="#ed1c24" stroke-width="4.7" stroke-linecap="round"/><polygon points="2023.0,242.1 2003.0,241.0 2014.4,257.5" fill="#ed1c24"/><path d="M1574.0 1009.3L1689.2 1038.3" stroke="#ed1c24" stroke-width="4.7" stroke-linecap="round"/><polygon points="1685.2,1046.1 1706.7,1042.7 1689.4,1029.6" fill="#ed1c24"/></svg>
<div style="left:1758px;top:665px;width:802px;height:3px;background:#242424;"></div>
<div style="left:1758px;top:668px;width:802px;height:28px;background:#1e1e1e;"></div>
<div style="left:1758px;top:668px;width:61px;height:28px;background:#2b2b2b;border-radius:4px 4px 0 0;"></div>
<span style="top:672.0px;font-size:16px;line-height:18px;color:#e6e6e6;left:1772px;">属性</span>
<span style="top:672.0px;font-size:16px;line-height:18px;color:#6e6e6e;left:1835px;">层</span>
<div style="left:1758px;top:696px;width:802px;height:677px;background:#2b2b2b;"></div>
<div style="left:1757px;top:95px;width:1px;height:1278px;background:#242424;"></div>
<svg style="left:1763px;top:702px;" width="16" height="16"><path d="M1 3.500h13M1 8h13M1 12.500h13" stroke="#e0e0e0" stroke-width="2.200"/></svg>
<span style="top:701.0px;font-size:16px;line-height:18px;color:#b8b8b8;left:1788px;">模式</span>
<span style="top:701.0px;font-size:16px;line-height:18px;color:#b8b8b8;left:1834px;">编辑</span>
<span style="top:701.0px;font-size:16px;line-height:18px;color:#b8b8b8;left:1880px;">用户数据</span>
<svg style="left:2400px;top:701px;" width="160" height="18"><path d="M17 9H3M8.500 3.500L3 9l5.500 5.500" fill="none" stroke="#b4b4b4" stroke-width="2"/><path d="M22 9h14M30.500 3.500L36 9l-5.500 5.500" fill="none" stroke="#4e4e4e" stroke-width="2"/><path d="M48 16V3M42.500 8.500L48 3l5.500 5.500" fill="none" stroke="#b4b4b4" stroke-width="2"/><circle cx="67" cy="7.500" r="4.500" fill="none" stroke="#b4b4b4" stroke-width="1.800"/><path d="M70.500 11l4.500 4.500" stroke="#b4b4b4" stroke-width="2"/><path d="M81 4h14M84 9h8M86.500 14h3" stroke="#b4b4b4" stroke-width="2"/><rect x="102.500" y="8" width="11" height="8" rx="1" fill="none" stroke="#b4b4b4" stroke-width="1.700"/><path d="M105 8V5.500a3 3 0 0 1 6 0V8" fill="none" stroke="#b4b4b4" stroke-width="1.700"/><circle cx="128" cy="9" r="6.700" fill="none" stroke="#b4b4b4" stroke-width="1.700"/><circle cx="128" cy="9" r="2.400" fill="none" stroke="#b4b4b4" stroke-width="1.600"/><path d="M148 3h-6v13h13v-6" fill="none" stroke="#b4b4b4" stroke-width="1.700"/><path d="M146 12l9-9M150 2.500h5.500V8" fill="none" stroke="#b4b4b4" stroke-width="1.700"/></svg>
<svg style="left:1765px;top:732px;" width="19" height="19"><circle cx="8.500" cy="8.500" r="7.700" fill="#5db2ec" stroke="#0a0a0a" stroke-width="1"/><path d="M5 5l6.500 6.500M4.500 12.500l3-3M12.500 5l-2 2" stroke="#0a0a0a" stroke-width="1.500"/><path d="M3.500 13.500l3.300-.6-2.700-2.700zM13.500 4l-3.200.6 2.600 2.600z" fill="#0a0a0a"/><circle cx="4.700" cy="4.500" r="2.500" fill="#fff"/><circle cx="11.700" cy="11.200" r="3.100" fill="#b46ae0"/></svg>
<span style="top:731.5px;font-size:17px;line-height:19px;color:#b8b8b8;letter-spacing:0.05px;left:1790px;">X-Particles Collider Tag [xpCollider]</span>
<div style="left:2439px;top:731px;width:113px;height:23px;background:#3b3b3b;border-radius:5px;"></div>
<div style="left:2532px;top:732px;width:1px;height:21px;background:#2b2b2b;"></div>
<span style="top:733.0px;font-size:16px;line-height:18px;color:#d8d8d8;left:2446px;">自定义</span>
<svg style="left:2536px;top:738px;" width="10" height="8"><path d="M1 2h8L5 6.500z" fill="#b4b4b4"/></svg>
<div style="left:1766px;top:759px;width:60px;height:28px;background:#3b3b3b;border-radius:4px;"></div>
<span style="top:764.0px;font-size:16px;line-height:18px;color:#b8b8b8;left:1596.0px;width:400px;text-align:center;">基本</span>
<div style="left:1830px;top:759px;width:60px;height:28px;background:#5459a3;border-radius:4px;"></div>
<span style="top:764.0px;font-size:16px;line-height:18px;color:#fff;left:1660.0px;width:400px;text-align:center;">标签</span>
<div style="left:1894px;top:759px;width:154px;height:28px;background:#3b3b3b;border-radius:4px;"></div>
<span style="top:762.5px;font-size:17px;line-height:19px;color:#b8b8b8;letter-spacing:0.14px;left:1771.0px;width:400px;text-align:center;">Groups Affected</span>
<div style="left:2052px;top:759px;width:107px;height:28px;background:#3b3b3b;border-radius:4px;"></div>
<span style="top:762.5px;font-size:17px;line-height:19px;color:#b8b8b8;letter-spacing:-0.33px;left:1905.5px;width:400px;text-align:center;">Exclusions</span>
<span style="top:795.5px;font-size:17px;line-height:19px;color:#f0f0f0;left:1766px;">标签属性</span>
<div style="left:1767px;top:824px;width:88px;height:28px;background:#535353;border-radius:4px;"></div>
<span style="top:827.5px;font-size:17px;line-height:19px;color:#fff;letter-spacing:-0.21px;left:1611.0px;width:400px;text-align:center;">General</span>
<div style="left:1859px;top:824px;width:78px;height:28px;background:#3b3b3b;border-radius:4px;"></div>
<span style="top:827.5px;font-size:17px;line-height:19px;color:#b8b8b8;letter-spacing:-0.49px;left:1698.0px;width:400px;text-align:center;">Forces</span>
<div style="left:1941px;top:824px;width:95px;height:28px;background:#3b3b3b;border-radius:4px;"></div>
<span style="top:827.5px;font-size:17px;line-height:19px;color:#b8b8b8;letter-spacing:-0.01px;left:1788.5px;width:400px;text-align:center;">Reaction</span>
<div style="left:2040px;top:824px;width:79px;height:28px;background:#3b3b3b;border-radius:4px;"></div>
<span style="top:827.5px;font-size:17px;line-height:19px;color:#b8b8b8;letter-spacing:-0.20px;left:1879.5px;width:400px;text-align:center;">Spawn</span>
<div style="left:1764px;top:862px;width:774px;height:1px;background:#3a3a3a;"></div>
<div style="left:2544px;top:791px;width:4px;height:442px;background:#3e3e3e;border-radius:2px;"></div>
<svg style="left:1767px;top:873px;" width="12" height="12"><path d="M6 1.500L10.500 6 6 10.500 1.500 6z" fill="none" stroke="#9a9a9a" stroke-width="1.500"/></svg>
<span style="top:869.5px;font-size:17px;line-height:19px;color:#b8b8b8;letter-spacing:-0.17px;left:1788.5px;">Enable Collisions</span>
<svg style="left:1922px;top:874px;" width="12" height="12"><rect width="12" height="12" rx="2" fill="#5e63b8"/><path d="M2.500 6l2.500 2.700L9.500 3.300" fill="none" stroke="#fff" stroke-width="1.700"/></svg>
<svg style="left:1953px;top:873px;" width="12" height="12"><path d="M6 1.500L10.500 6 6 10.500 1.500 6z" fill="none" stroke="#9a9a9a" stroke-width="1.500"/></svg>
<span style="top:869.5px;font-size:17px;line-height:19px;color:#b8b8b8;letter-spacing:-0.14px;left:1974.5px;">Draw Bounds</span>
<svg style="left:2082px;top:874px;" width="12" height="12"><rect x=".75" y=".75" width="10.500" height="10.500" rx="2" fill="none" stroke="#9a9a9a" stroke-width="1.500"/></svg>
<span style="top:906.8px;font-size:15.5px;line-height:17.5px;color:#cfcfcf;letter-spacing:-0.13px;font-weight:bold;left:1774.5px;">BOUNCE ON COLLISION</span>
<svg style="left:1767px;top:935px;" width="12" height="12"><path d="M6 1.500L10.500 6 6 10.500 1.500 6z" fill="none" stroke="#9a9a9a" stroke-width="1.500"/></svg>
<span style="top:931.5px;font-size:17px;line-height:19px;color:#b8b8b8;letter-spacing:-0.34px;left:1788.5px;">Enabled</span>
<svg style="left:1894px;top:935.5px;" width="12" height="12"><rect width="12" height="12" rx="2" fill="#5e63b8"/><path d="M2.500 6l2.500 2.700L9.500 3.300" fill="none" stroke="#fff" stroke-width="1.700"/></svg>
<svg style="left:1767px;top:962px;" width="12" height="12"><path d="M6 1.500L10.500 6 6 10.500 1.500 6z" fill="none" stroke="#9a9a9a" stroke-width="1.500"/></svg>
<span style="top:958.5px;font-size:17px;line-height:19px;color:#b8b8b8;letter-spacing:0.02px;left:1788.5px;">Self-Collision</span>
<svg style="left:1894px;top:962.5px;" width="12" height="12"><rect width="12" height="12" rx="2" fill="#5e63b8"/><path d="M2.500 6l2.500 2.700L9.500 3.300" fill="none" stroke="#fff" stroke-width="1.700"/></svg>
<svg style="left:1767px;top:989px;" width="12" height="12"><path d="M6 1.500L10.500 6 6 10.500 1.500 6z" fill="none" stroke="#9a9a9a" stroke-width="1.500"/></svg>
<span style="top:985.5px;font-size:17px;line-height:19px;color:#b8b8b8;letter-spacing:0.10px;left:1788.5px;">Normals</span>
<div style="left:1894px;top:984px;width:644px;height:24px;background:#3e3e3e;border-radius:4px;"></div>
<span style="top:986.0px;font-size:17px;line-height:19px;color:#d4d4d4;letter-spacing:0.06px;left:1901px;">Outside</span>
<svg style="left:2523px;top:993px;" width="10" height="8"><path d="M1 2h8L5 6.500z" fill="#b4b4b4"/></svg>
<svg style="left:1767px;top:1022.5px;" width="12" height="12"><path d="M6 1.500L10.500 6 6 10.500 1.500 6z" fill="none" stroke="#9a9a9a" stroke-width="1.500"/></svg>
<span style="top:1019.0px;font-size:17px;line-height:19px;color:#b8b8b8;letter-spacing:-0.19px;left:1788.5px;">Bounce</span>
<div style="left:1851px;top:1016.5px;width:101.5px;height:24px;background:#1c1c1c;border-radius:4px;"></div>
<span style="top:1019.0px;font-size:17px;line-height:19px;color:#e4e4e4;left:1701.75px;width:400px;text-align:center;">0 %</span>
<div style="left:1957px;top:1027.0px;width:157px;height:3px;background:#202020;border-radius:1.5px;"></div>
<div style="left:1957px;top:1022.5px;width:4px;height:12px;background:#c8c8c8;border-radius:2px;"></div>
<svg style="left:2118px;top:1022.5px;" width="12" height="12"><path d="M6 1.500L10.500 6 6 10.500 1.500 6z" fill="none" stroke="#9a9a9a" stroke-width="1.500"/></svg>
<span style="top:1019.0px;font-size:17px;line-height:19px;color:#b8b8b8;letter-spacing:0.06px;left:2139px;">Bounce Variation</span>
<div style="left:2275px;top:1016.5px;width:101.5px;height:24px;background:#1c1c1c;border-radius:4px;"></div>
<span style="top:1019.0px;font-size:17px;line-height:19px;color:#e4e4e4;left:2125.75px;width:400px;text-align:center;">0 %</span>
<div style="left:2381px;top:1027.0px;width:157px;height:3px;background:#202020;border-radius:1.5px;"></div>
<div style="left:2381px;top:1022.5px;width:4px;height:12px;background:#c8c8c8;border-radius:2px;"></div>
<svg style="left:1767px;top:1051.5px;" width="12" height="12"><path d="M6 1.500L10.500 6 6 10.500 1.500 6z" fill="none" stroke="#9a9a9a" stroke-width="1.500"/></svg>
<span style="top:1048.0px;font-size:17px;line-height:19px;color:#b8b8b8;letter-spacing:0.10px;left:1788.5px;">Friction</span>
<div style="left:1851px;top:1045.5px;width:101.5px;height:24px;background:#1c1c1c;border-radius:4px;box-shadow:inset 0 0 0 1.500px #6a70d0;"></div>
<span style="top:1048.0px;font-size:17px;line-height:19px;color:#e4e4e4;left:1701.75px;width:400px;text-align:center;">50 %</span>
<div style="left:1957px;top:1056.0px;width:157px;height:3px;background:#202020;border-radius:1.5px;"></div>
<div style="left:1957px;top:1056.0px;width:78.5px;height:3px;background:#5a5fb0;border-radius:1.5px;"></div>
<div style="left:2033.5px;top:1051.5px;width:4px;height:12px;background:#c8c8c8;border-radius:2px;"></div>
<svg style="left:2118px;top:1051.5px;" width="12" height="12"><path d="M6 1.500L10.500 6 6 10.500 1.500 6z" fill="none" stroke="#9a9a9a" stroke-width="1.500"/></svg>
<span style="top:1048.0px;font-size:17px;line-height:19px;color:#b8b8b8;letter-spacing:0.16px;left:2139px;">Friction Variation</span>
<div style="left:2275px;top:1045.5px;width:101.5px;height:24px;background:#1c1c1c;border-radius:4px;"></div>
<span style="top:1048.0px;font-size:17px;line-height:19px;color:#e4e4e4;left:2125.75px;width:400px;text-align:center;">0 %</span>
<div style="left:2381px;top:1056.0px;width:157px;height:3px;background:#202020;border-radius:1.5px;"></div>
<div style="left:2381px;top:1051.5px;width:4px;height:12px;background:#c8c8c8;border-radius:2px;"></div>
<svg style="left:1767px;top:1080.5px;" width="12" height="12"><path d="M6 1.500L10.500 6 6 10.500 1.500 6z" fill="none" stroke="#9a9a9a" stroke-width="1.500"/></svg>
<span style="top:1077.0px;font-size:17px;line-height:19px;color:#b8b8b8;letter-spacing:-0.12px;left:1788.5px;">Scatter</span>
<div style="left:1851px;top:1074.5px;width:101.5px;height:24px;background:#1c1c1c;border-radius:4px;"></div>
<span style="top:1077.0px;font-size:17px;line-height:19px;color:#e4e4e4;left:1701.75px;width:400px;text-align:center;">0 %</span>
<div style="left:1957px;top:1085.0px;width:157px;height:3px;background:#202020;border-radius:1.5px;"></div>
<div style="left:1957px;top:1080.5px;width:4px;height:12px;background:#c8c8c8;border-radius:2px;"></div>
<svg style="left:2118px;top:1080.5px;" width="12" height="12"><path d="M6 1.500L10.500 6 6 10.500 1.500 6z" fill="none" stroke="#9a9a9a" stroke-width="1.500"/></svg>
<span style="top:1077.0px;font-size:17px;line-height:19px;color:#b8b8b8;letter-spacing:-0.36px;left:2139px;">Expand</span>
<div style="left:2275px;top:1074.5px;width:101.5px;height:24px;background:#1c1c1c;border-radius:4px;"></div>
<span style="top:1077.0px;font-size:17px;line-height:19px;color:#e4e4e4;left:2125.75px;width:400px;text-align:center;">0 cm</span>
<div style="left:2381px;top:1085.0px;width:157px;height:3px;background:#202020;border-radius:1.5px;"></div>
<div style="left:2381px;top:1080.5px;width:4px;height:12px;background:#c8c8c8;border-radius:2px;"></div>
<span style="top:1119.8px;font-size:15.5px;line-height:17.5px;color:#cfcfcf;letter-spacing:-0.07px;font-weight:bold;left:1774.5px;">CONNECT ON COLLISION</span>
<svg style="left:1767px;top:1148.5px;" width="12" height="12"><path d="M6 1.500L10.500 6 6 10.500 1.500 6z" fill="none" stroke="#9a9a9a" stroke-width="1.500"/></svg>
<span style="top:1145.0px;font-size:17px;line-height:19px;color:#b8b8b8;letter-spacing:0.08px;left:1788.5px;">Connect on Collision</span>
<svg style="left:1952px;top:1149px;" width="12" height="12"><rect x=".75" y=".75" width="10.500" height="10.500" rx="2" fill="none" stroke="#9a9a9a" stroke-width="1.500"/></svg>
<svg style="left:1767px;top:1176px;" width="12" height="12"><path d="M6 1.500L10.500 6 6 10.500 1.500 6z" fill="none" stroke="#444" stroke-width="1.500"/></svg>
<span style="top:1172.5px;font-size:17px;line-height:19px;color:#5e5e5e;letter-spacing:0.15px;left:1788.5px;">Connection Limit</span>
<div style="left:1952.5px;top:1170px;width:101.5px;height:24px;background:#262626;border-radius:4px;"></div>
<span style="top:1172.5px;font-size:17px;line-height:19px;color:#6c6c6c;left:1803.25px;width:400px;text-align:center;">1</span>
<div style="left:2058.5px;top:1180.5px;width:479.5px;height:3px;background:#272727;border-radius:1.5px;"></div>
<svg style="left:1767px;top:1205px;" width="12" height="12"><path d="M6 1.500L10.500 6 6 10.500 1.500 6z" fill="none" stroke="#444" stroke-width="1.500"/></svg>
<span style="top:1201.5px;font-size:17px;line-height:19px;color:#5e5e5e;letter-spacing:-0.13px;left:1788.5px;">Stiffness</span>
<div style="left:1952.5px;top:1199px;width:101.5px;height:24px;background:#262626;border-radius:4px;"></div>
<span style="top:1201.5px;font-size:17px;line-height:19px;color:#6c6c6c;left:1803.25px;width:400px;text-align:center;">80 %</span>
<div style="left:2058.5px;top:1209.5px;width:148.5px;height:3px;background:#272727;border-radius:1.5px;"></div>
<div style="left:2058.5px;top:1209.5px;width:118.80000000000001px;height:3px;background:#34376a;border-radius:1.5px;"></div>
<svg style="left:2212px;top:1205px;" width="12" height="12"><path d="M6 1.500L10.500 6 6 10.500 1.500 6z" fill="none" stroke="#444" stroke-width="1.500"/></svg>
<span style="top:1201.5px;font-size:17px;line-height:19px;color:#5e5e5e;letter-spacing:-0.48px;left:2233.5px;">Break</span>
<div style="left:2281px;top:1199px;width:102px;height:24px;background:#262626;border-radius:4px;"></div>
<span style="top:1201.5px;font-size:17px;line-height:19px;color:#6c6c6c;left:2132.0px;width:400px;text-align:center;">0 %</span>
<div style="left:2388px;top:1209.5px;width:150px;height:3px;background:#272727;border-radius:1.5px;"></div>
<svg style="left:1767px;top:1234px;" width="12" height="12"><path d="M6 1.500L10.500 6 6 10.500 1.500 6z" fill="none" stroke="#444" stroke-width="1.500"/></svg>
<span style="top:1230.5px;font-size:17px;line-height:19px;color:#5e5e5e;letter-spacing:0.10px;left:1788.5px;">Falloff</span>
<div style="left:1952.5px;top:1228px;width:552px;height:24px;background:#262626;border-radius:4px;"></div>
<svg style="left:2508px;top:1238px;" width="10" height="8"><path d="M1 2h8L5 6.500z" fill="#555"/></svg>
<svg style="left:2521px;top:1232px;" width="16" height="16"><path d="M2 14l1-3.500 7.500-7.500 2.500 2.500L5.500 13z" fill="none" stroke="#4a4a4a" stroke-width="1.500"/><path d="M10 2.500l1.500-1.500a1.800 1.800 0 0 1 2.500 2.500L12.500 5z" fill="#4a4a4a"/></svg>
<span style="top:1268.8px;font-size:15.5px;line-height:17.5px;color:#cfcfcf;letter-spacing:-0.05px;font-weight:bold;left:1774.5px;">ACTIONS ON COLLISION</span>
<span style="top:1293.5px;font-size:17px;line-height:19px;color:#b8b8b8;letter-spacing:0.04px;left:1788.5px;">Actions</span>
<svg style="left:1855px;top:1297px;" width="10" height="12"><path d="M2.500 2l4 4-4 4" fill="none" stroke="#b4b4b4" stroke-width="1.500"/></svg>
<div style="left:1865px;top:1291px;width:654px;height:90px;background:#2b2b2b;box-shadow:inset 0 0 0 1px #383838;"></div>
<svg style="left:2521px;top:1292px;" width="16" height="16"><path d="M2 14l1-3.500 7.500-7.500 2.500 2.500L5.500 13z" fill="none" stroke="#b4b4b4" stroke-width="1.500"/><path d="M10 2.500l1.500-1.500a1.800 1.800 0 0 1 2.500 2.500L12.500 5z" fill="#b4b4b4"/></svg>
<div style="left:38px;top:1283px;width:1680px;height:92px;background:#2b2b2b;"></div>
<svg style="left:38px;top:1285px" width="1678" height="4"><path d="M0 .5h1678M1 2.500h1678" stroke="#3a3a3a" stroke-width="1" stroke-dasharray="1 2"/></svg>
<svg style="left:39px;top:1294px" width="5" height="78"><path d="M.5 0v78M2.500 1v78" stroke="#444" stroke-width="1" stroke-dasharray="1 2"/></svg>
<svg style="left:45px;top:1293px;background:#3b3b3b;border-radius:5px 5px 5px 5px" width="28" height="28"><path d="M14 6.500l7.500 7.500-7.500 7.500L6.500 14z" fill="none" stroke="#e0e0e0" stroke-width="2.200"/></svg>
<svg style="left:523px;top:1293px;background:#3b3b3b;border-radius:5px 0px 0px 5px" width="28" height="28"><path d="M8 7.500v13" stroke="#c8c8c8" stroke-width="2.200"/><path d="M21 7.500v13l-10-6.500z" fill="#c8c8c8"/></svg>
<svg style="left:551px;top:1293px;background:#3b3b3b;border-radius:0px 0px 0px 0px" width="28" height="28"><path d="M8 10.500l3.500 3.500-3.500 3.500L4.500 14z" fill="none" stroke="#c8c8c8" stroke-width="1.500"/><path d="M23 7.500v13l-10-6.500z" fill="#c8c8c8"/><path d="M0.5 3v22" stroke="#333" stroke-width="1"/></svg>
<svg style="left:579px;top:1293px;background:#3b3b3b;border-radius:0px 0px 0px 0px" width="28" height="28"><path d="M16 7.500v13l-10-6.500z" fill="#c8c8c8"/><path d="M20 7.500v13" stroke="#c8c8c8" stroke-width="2.200"/><path d="M0.5 3v22" stroke="#333" stroke-width="1"/></svg>
<svg style="left:607px;top:1293px;background:#3b3b3b;border-radius:0px 0px 0px 0px" width="28" height="28"><path d="M8.500 6v16l13-8z" fill="#e8e8e8"/><path d="M0.5 3v22" stroke="#333" stroke-width="1"/></svg>
<svg style="left:635px;top:1293px;background:#3b3b3b;border-radius:0px 0px 0px 0px" width="28" height="28"><path d="M8 7.500v13" stroke="#c8c8c8" stroke-width="2.200"/><path d="M12 7.500v13l10-6.500z" fill="#c8c8c8"/><path d="M0.5 3v22" stroke="#333" stroke-width="1"/></svg>
<svg style="left:663px;top:1293px;background:#3b3b3b;border-radius:0px 0px 0px 0px" width="28" height="28"><path d="M5 7.500v13l10-6.500z" fill="#c8c8c8"/><path d="M20 10.500l3.500 3.500-3.500 3.500-3.500-3.500z" fill="none" stroke="#c8c8c8" stroke-width="1.500"/><path d="M0.5 3v22" stroke="#333" stroke-width="1"/></svg>
<svg style="left:691px;top:1293px;background:#3b3b3b;border-radius:0px 5px 5px 0px" width="28" height="28"><path d="M7 7.500v13l10-6.500z" fill="#c8c8c8"/><path d="M20 7.500v13" stroke="#c8c8c8" stroke-width="2.200"/><path d="M0.5 3v22" stroke="#333" stroke-width="1"/></svg>
<svg style="left:729.5px;top:1293px;background:#5459a3;border-radius:5px 0px 0px 5px" width="28" height="28"><path d="M6 13V9.500h14M17 6l3.500 3.500L17 13M22 15v3.500H8M11 22l-3.500-3.500L11 15" fill="none" stroke="#e8e8e8" stroke-width="1.800"/><path d="M27 27 h-6 l6 -6z" fill="#9a9a9a"/></svg>
<svg style="left:757.5px;top:1293px;background:#5459a3;border-radius:0px 0px 0px 0px" width="28" height="28"><text x="14" y="12" font-size="10" font-family="Liberation Sans" text-anchor="middle" fill="#e0e0e0">A</text><path d="M5 22v-5M9 22v-3M13 22v-3M17 22v-3" stroke="#e0e0e0" stroke-width="1.600"/><rect x="19" y="17" width="5" height="5" fill="#e0e0e0"/><path d="M27 27 h-6 l6 -6z" fill="#9a9a9a"/></svg>
<svg style="left:785.5px;top:1293px;background:#3b3b3b;border-radius:0px 5px 5px 0px" width="28" height="28"><path d="M5 11h4l6-5v16l-6-5H5z" fill="#c8c8c8"/><path d="M18 9.500a6 6 0 0 1 0 9M20.500 6.500a10 10 0 0 1 0 15" fill="none" stroke="#c8c8c8" stroke-width="1.600"/></svg>
<div style="left:824.5px;top:1293px;width:101px;height:28px;background:#1a1a1a;border-radius:5px;"></div>
<span style="top:1297.0px;font-size:17px;line-height:19px;color:#e4e4e4;left:675px;width:400px;text-align:center;">0 F</span>
<svg style="left:936.5px;top:1293px;background:#3b3b3b;border-radius:5px 0px 0px 5px" width="28" height="28"><circle cx="14" cy="14" r="9.500" fill="#e8505a"/><path d="M14 8.500l5.500 5.500-5.500 5.500L8.500 14z" fill="none" stroke="#3b3b3b" stroke-width="1.600"/><path d="M27 27 h-6 l6 -6z" fill="#9a9a9a"/></svg>
<svg style="left:964.5px;top:1293px;background:#3b3b3b;border-radius:0px 0px 0px 0px" width="28" height="28"><circle cx="14" cy="14" r="9.500" fill="#e8505a"/><text x="14" y="19" font-size="14" font-family="Liberation Sans" text-anchor="middle" fill="#3b3b3b">A</text><path d="M0.5 3v22" stroke="#333" stroke-width="1"/></svg>
<svg style="left:992.5px;top:1293px;background:#3b3b3b;border-radius:0px 5px 5px 0px" width="28" height="28"><circle cx="14" cy="14" r="9.500" fill="#c8c8c8"/><g transform="translate(14,14)"><circle r="4.44" fill="#3b3b3b"/><rect x="-1.32" y="-6.00" width="2.64" height="12.00" transform="rotate(0)" fill="#3b3b3b"/><rect x="-1.32" y="-6.00" width="2.64" height="12.00" transform="rotate(45)" fill="#3b3b3b"/><rect x="-1.32" y="-6.00" width="2.64" height="12.00" transform="rotate(90)" fill="#3b3b3b"/><rect x="-1.32" y="-6.00" width="2.64" height="12.00" transform="rotate(135)" fill="#3b3b3b"/><circle r="1.92" fill="#c8c8c8"/></g><path d="M0.5 3v22" stroke="#333" stroke-width="1"/></svg>
<svg style="left:1031px;top:1293px;background:#3b3b3b;border-radius:5px 0px 0px 5px" width="28" height="28"><path d="M14 5a6 6 0 0 1 6 6v6a6 6 0 0 1-12 0v-6a6 6 0 0 1 6-6z" fill="#c8c8c8"/><path d="M14 8v5" stroke="#3b3b3b" stroke-width="2.400" stroke-linecap="round"/></svg>
<svg style="left:1059px;top:1293px;background:#3b3b3b;border-radius:0px 5px 5px 0px" width="28" height="28"><path d="M20.500 7.500a9 9 0 1 0 2.500 6.500" fill="none" stroke="#8a8a8a" stroke-width="1.600"/><path d="M14 10.500l3.500 3.500-3.500 3.500-3.500-3.500z" fill="none" stroke="#8a8a8a" stroke-width="1.500"/><path d="M15 13l8-8" stroke="#8a8a8a" stroke-width="1.600"/><path d="M0.5 3v22" stroke="#333" stroke-width="1"/></svg>
<svg style="left:1097px;top:1293px;background:#3b3b3b;border-radius:5px 0px 0px 5px" width="28" height="28"><path d="M14 10.500l3.500 3.500-3.500 3.500-3.500-3.500z" fill="none" stroke="#c8c8c8" stroke-width="1.500"/><path d="M14 4l3 3.500h-6zM14 24l3-3.500h-6zM4 14l3.500-3v6zM24 14l-3.500-3v6z" fill="#c8c8c8"/></svg>
<svg style="left:1125px;top:1293px;background:#3b3b3b;border-radius:0px 0px 0px 0px" width="28" height="28"><path d="M14 10.500l3.500 3.500-3.500 3.500-3.500-3.500z" fill="none" stroke="#c8c8c8" stroke-width="1.500"/><path d="M6 16a8.500 8.500 0 0 1 13-9M22 12a8.500 8.500 0 0 1-13 9" fill="none" stroke="#c8c8c8" stroke-width="1.600"/><path d="M21 4l-.5 5-4.500-1.500zM7 24l.5-5 4.500 1.500z" fill="#c8c8c8"/><path d="M0.5 3v22" stroke="#333" stroke-width="1"/></svg>
<svg style="left:1153px;top:1293px;background:#3b3b3b;border-radius:0px 0px 0px 0px" width="28" height="28"><path d="M6 12V6.500h15.500V21H16" fill="none" stroke="#c8c8c8" stroke-width="1.700"/><path d="M10 14l4 4-4 4-4-4z" fill="none" stroke="#c8c8c8" stroke-width="1.500"/><path d="M0.5 3v22" stroke="#333" stroke-width="1"/></svg>
<svg style="left:1181px;top:1293px;background:#3b3b3b;border-radius:0px 0px 0px 0px" width="28" height="28"><rect x="5" y="6.500" width="18" height="6.500" rx="3.250" fill="#c8c8c8"/><rect x="5" y="15" width="18" height="6.500" rx="3.250" fill="#c8c8c8"/><circle cx="19.500" cy="18.250" r="1.800" fill="#3b3b3b"/><path d="M0.5 3v22" stroke="#333" stroke-width="1"/></svg>
<svg style="left:1209px;top:1293px;background:#5459a3;border-radius:0px 5px 5px 0px" width="28" height="28"><circle cx="10" cy="21" r="3" fill="#e8e8e8"/><circle cx="20" cy="21" r="3" fill="#e8e8e8"/><path d="M7 5l14 17M14 8l5-4" stroke="#e8e8e8" stroke-width="2"/></svg>
<svg style="left:1687px;top:1293px;background:#3b3b3b;border-radius:5px 5px 5px 5px" width="28" height="28"><path d="M7 6v16h16" fill="none" stroke="#c8c8c8" stroke-width="1.800"/><path d="M7 3.500L4.500 7.500h5zM25.500 22l-4-2.500v5z" fill="#c8c8c8"/><path d="M11 18l9-9M15 8.500h5.500V14" fill="none" stroke="#c8c8c8" stroke-width="1.800"/></svg>
<svg style="left:38px;top:1322px" width="1678" height="26"><path d="M12.8 19v4" stroke="#8a8a8a" stroke-width="1.200"/><rect x="18.9" y="21" width="1.200" height="1.400" fill="#6e6e6e"/><rect x="25.6" y="21" width="1.200" height="1.400" fill="#6e6e6e"/><rect x="32.2" y="21" width="1.200" height="1.400" fill="#6e6e6e"/><rect x="38.9" y="21" width="1.200" height="1.400" fill="#6e6e6e"/><rect x="45.5" y="21" width="1.200" height="1.400" fill="#6e6e6e"/><rect x="52.2" y="21" width="1.200" height="1.400" fill="#6e6e6e"/><rect x="58.8" y="21" width="1.200" height="1.400" fill="#6e6e6e"/><rect x="65.4" y="21" width="1.200" height="1.400" fill="#6e6e6e"/><rect x="72.1" y="21" width="1.200" height="1.400" fill="#6e6e6e"/><path d="M79.2 19v4" stroke="#8a8a8a" stroke-width="1.200"/><rect x="85.4" y="21" width="1.200" height="1.400" fill="#6e6e6e"/><rect x="92.0" y="21" width="1.200" height="1.400" fill="#6e6e6e"/><rect x="98.7" y="21" width="1.200" height="1.400" fill="#6e6e6e"/><rect x="105.3" y="21" width="1.200" height="1.400" fill="#6e6e6e"/><rect x="112.0" y="21" width="1.200" height="1.400" fill="#6e6e6e"/><rect x="118.6" y="21" width="1.200" height="1.400" fill="#6e6e6e"/><rect x="125.2" y="21" width="1.200" height="1.400" fill="#6e6e6e"/><rect x="131.9" y="21" width="1.200" height="1.400" fill="#6e6e6e"/><rect x="138.5" y="21" width="1.200" height="1.400" fill="#6e6e6e"/><path d="M145.7 19v4" stroke="#8a8a8a" stroke-width="1.200"/><rect x="151.8" y="21" width="1.200" height="1.400" fill="#6e6e6e"/><rect x="158.5" y="21" width="1.200" height="1.400" fill="#6e6e6e"/><rect x="165.1" y="21" width="1.200" height="1.400" fill="#6e6e6e"/><rect x="171.7" y="21" width="1.200" height="1.400" fill="#6e6e6e"/><path d="M178.9 2v20" stroke="#a0a0a0" stroke-width="1.200"/><rect x="185.0" y="21" width="1.200" height="1.400" fill="#6e6e6e"/><rect x="191.7" y="21" width="1.200" height="1.400" fill="#6e6e6e"/><rect x="198.3" y="21" width="1.200" height="1.400" fill="#6e6e6e"/><rect x="205.0" y="21" width="1.200" height="1.400" fill="#6e6e6e"/><path d="M212.1 19v4" stroke="#8a8a8a" stroke-width="1.200"/><rect x="218.2" y="21" width="1.200" height="1.400" fill="#6e6e6e"/><rect x="224.9" y="21" width="1.200" height="1.400" fill="#6e6e6e"/><rect x="231.5" y="21" width="1.200" height="1.400" fill="#6e6e6e"/><rect x="238.2" y="21" width="1.200" height="1.400" fill="#6e6e6e"/><rect x="244.8" y="21" width="1.200" height="1.400" fill="#6e6e6e"/><rect x="251.5" y="21" width="1.200" height="1.400" fill="#6e6e6e"/><rect x="258.1" y="21" width="1.200" height="1.400" fill="#6e6e6e"/><rect x="264.8" y="21" width="1.200" height="1.400" fill="#6e6e6e"/><rect x="271.4" y="21" width="1.200" height="1.400" fill="#6e6e6e"/><path d="M278.5 19v4" stroke="#8a8a8a" stroke-width="1.200"/><rect x="284.7" y="21" width="1.200" height="1.400" fill="#6e6e6e"/><rect x="291.3" y="21" width="1.200" height="1.400" fill="#6e6e6e"/><rect x="298.0" y="21" width="1.200" height="1.400" fill="#6e6e6e"/><rect x="304.6" y="21" width="1.200" height="1.400" fill="#6e6e6e"/><rect x="311.3" y="21" width="1.200" height="1.400" fill="#6e6e6e"/><rect x="317.9" y="21" width="1.200" height="1.400" fill="#6e6e6e"/><rect x="324.5" y="21" width="1.200" height="1.400" fill="#6e6e6e"/><rect x="331.2" y="21" width="1.200" height="1.400" fill="#6e6e6e"/><rect x="337.8" y="21" width="1.200" height="1.400" fill="#6e6e6e"/><path d="M345.0 2v20" stroke="#a0a0a0" stroke-width="1.200"/><rect x="351.1" y="21" width="1.200" height="1.400" fill="#6e6e6e"/><rect x="357.8" y="21" width="1.200" height="1.400" fill="#6e6e6e"/><rect x="364.4" y="21" width="1.200" height="1.400" fill="#6e6e6e"/><rect x="371.0" y="21" width="1.200" height="1.400" fill="#6e6e6e"/><rect x="377.7" y="21" width="1.200" height="1.400" fill="#6e6e6e"/><rect x="384.3" y="21" width="1.200" height="1.400" fill="#6e6e6e"/><rect x="391.0" y="21" width="1.200" height="1.400" fill="#6e6e6e"/><rect x="397.6" y="21" width="1.200" height="1.400" fill="#6e6e6e"/><rect x="404.3" y="21" width="1.200" height="1.400" fill="#6e6e6e"/><path d="M411.4 19v4" stroke="#8a8a8a" stroke-width="1.200"/><rect x="417.6" y="21" width="1.200" height="1.400" fill="#6e6e6e"/><rect x="424.2" y="21" width="1.200" height="1.400" fill="#6e6e6e"/><rect x="430.8" y="21" width="1.200" height="1.400" fill="#6e6e6e"/><rect x="437.5" y="21" width="1.200" height="1.400" fill="#6e6e6e"/><rect x="444.1" y="21" width="1.200" height="1.400" fill="#6e6e6e"/><rect x="450.8" y="21" width="1.200" height="1.400" fill="#6e6e6e"/><rect x="457.4" y="21" width="1.200" height="1.400" fill="#6e6e6e"/><rect x="464.1" y="21" width="1.200" height="1.400" fill="#6e6e6e"/><rect x="470.7" y="21" width="1.200" height="1.400" fill="#6e6e6e"/><path d="M477.8 19v4" stroke="#8a8a8a" stroke-width="1.200"/><rect x="484.0" y="21" width="1.200" height="1.400" fill="#6e6e6e"/><rect x="490.6" y="21" width="1.200" height="1.400" fill="#6e6e6e"/><rect x="497.3" y="21" width="1.200" height="1.400" fill="#6e6e6e"/><rect x="503.9" y="21" width="1.200" height="1.400" fill="#6e6e6e"/><path d="M511.1 2v20" stroke="#a0a0a0" stroke-width="1.200"/><rect x="517.2" y="21" width="1.200" height="1.400" fill="#6e6e6e"/><rect x="523.8" y="21" width="1.200" height="1.400" fill="#6e6e6e"/><rect x="530.5" y="21" width="1.200" height="1.400" fill="#6e6e6e"/><rect x="537.1" y="21" width="1.200" height="1.400" fill="#6e6e6e"/><path d="M544.3 19v4" stroke="#8a8a8a" stroke-width="1.200"/><rect x="550.4" y="21" width="1.200" height="1.400" fill="#6e6e6e"/><rect x="557.1" y="21" width="1.200" height="1.400" fill="#6e6e6e"/><rect x="563.7" y="21" width="1.200" height="1.400" fill="#6e6e6e"/><rect x="570.4" y="21" width="1.200" height="1.400" fill="#6e6e6e"/><rect x="577.0" y="21" width="1.200" height="1.400" fill="#6e6e6e"/><rect x="583.6" y="21" width="1.200" height="1.400" fill="#6e6e6e"/><rect x="590.3" y="21" width="1.200" height="1.400" fill="#6e6e6e"/><rect x="596.9" y="21" width="1.200" height="1.400" fill="#6e6e6e"/><rect x="603.6" y="21" width="1.200" height="1.400" fill="#6e6e6e"/><path d="M610.7 19v4" stroke="#8a8a8a" stroke-width="1.200"/><rect x="616.9" y="21" width="1.200" height="1.400" fill="#6e6e6e"/><rect x="623.5" y="21" width="1.200" height="1.400" fill="#6e6e6e"/><rect x="630.1" y="21" width="1.200" height="1.400" fill="#6e6e6e"/><rect x="636.8" y="21" width="1.200" height="1.400" fill="#6e6e6e"/><rect x="643.4" y="21" width="1.200" height="1.400" fill="#6e6e6e"/><rect x="650.1" y="21" width="1.200" height="1.400" fill="#6e6e6e"/><rect x="656.7" y="21" width="1.200" height="1.400" fill="#6e6e6e"/><rect x="663.4" y="21" width="1.200" height="1.400" fill="#6e6e6e"/><rect x="670.0" y="21" width="1.200" height="1.400" fill="#6e6e6e"/><path d="M677.1 2v20" stroke="#a0a0a0" stroke-width="1.200"/><rect x="683.3" y="21" width="1.200" height="1.400" fill="#6e6e6e"/><rect x="689.9" y="21" width="1.200" height="1.400" fill="#6e6e6e"/><rect x="696.6" y="21" width="1.200" height="1.400" fill="#6e6e6e"/><rect x="703.2" y="21" width="1.200" height="1.400" fill="#6e6e6e"/><rect x="709.9" y="21" width="1.200" height="1.400" fill="#6e6e6e"/><rect x="716.5" y="21" width="1.200" height="1.400" fill="#6e6e6e"/><rect x="723.2" y="21" width="1.200" height="1.400" fill="#6e6e6e"/><rect x="729.8" y="21" width="1.200" height="1.400" fill="#6e6e6e"/><rect x="736.4" y="21" width="1.200" height="1.400" fill="#6e6e6e"/><path d="M743.6 19v4" stroke="#8a8a8a" stroke-width="1.200"/><rect x="749.7" y="21" width="1.200" height="1.400" fill="#6e6e6e"/><rect x="756.4" y="21" width="1.200" height="1.400" fill="#6e6e6e"/><rect x="763.0" y="21" width="1.200" height="1.400" fill="#6e6e6e"/><rect x="769.7" y="21" width="1.200" height="1.400" fill="#6e6e6e"/><rect x="776.3" y="21" width="1.200" height="1.400" fill="#6e6e6e"/><rect x="782.9" y="21" width="1.200" height="1.400" fill="#6e6e6e"/><rect x="789.6" y="21" width="1.200" height="1.400" fill="#6e6e6e"/><rect x="796.2" y="21" width="1.200" height="1.400" fill="#6e6e6e"/><rect x="802.9" y="21" width="1.200" height="1.400" fill="#6e6e6e"/><path d="M810.0 19v4" stroke="#8a8a8a" stroke-width="1.200"/><rect x="816.2" y="21" width="1.200" height="1.400" fill="#6e6e6e"/><rect x="822.8" y="21" width="1.200" height="1.400" fill="#6e6e6e"/><rect x="829.5" y="21" width="1.200" height="1.400" fill="#6e6e6e"/><rect x="836.1" y="21" width="1.200" height="1.400" fill="#6e6e6e"/><path d="M843.2 2v20" stroke="#a0a0a0" stroke-width="1.200"/><rect x="849.4" y="21" width="1.200" height="1.400" fill="#6e6e6e"/><rect x="856.0" y="21" width="1.200" height="1.400" fill="#6e6e6e"/><rect x="862.7" y="21" width="1.200" height="1.400" fill="#6e6e6e"/><rect x="869.3" y="21" width="1.200" height="1.400" fill="#6e6e6e"/><path d="M876.5 19v4" stroke="#8a8a8a" stroke-width="1.200"/><rect x="882.6" y="21" width="1.200" height="1.400" fill="#6e6e6e"/><rect x="889.2" y="21" width="1.200" height="1.400" fill="#6e6e6e"/><rect x="895.9" y="21" width="1.200" height="1.400" fill="#6e6e6e"/><rect x="902.5" y="21" width="1.200" height="1.400" fill="#6e6e6e"/><rect x="909.2" y="21" width="1.200" height="1.400" fill="#6e6e6e"/><rect x="915.8" y="21" width="1.200" height="1.400" fill="#6e6e6e"/><rect x="922.5" y="21" width="1.200" height="1.400" fill="#6e6e6e"/><rect x="929.1" y="21" width="1.200" height="1.400" fill="#6e6e6e"/><rect x="935.7" y="21" width="1.200" height="1.400" fill="#6e6e6e"/><path d="M942.9 19v4" stroke="#8a8a8a" stroke-width="1.200"/><rect x="949.0" y="21" width="1.200" height="1.400" fill="#6e6e6e"/><rect x="955.7" y="21" width="1.200" height="1.400" fill="#6e6e6e"/><rect x="962.3" y="21" width="1.200" height="1.400" fill="#6e6e6e"/><rect x="969.0" y="21" width="1.200" height="1.400" fill="#6e6e6e"/><rect x="975.6" y="21" width="1.200" height="1.400" fill="#6e6e6e"/><rect x="982.3" y="21" width="1.200" height="1.400" fill="#6e6e6e"/><rect x="988.9" y="21" width="1.200" height="1.400" fill="#6e6e6e"/><rect x="995.5" y="21" width="1.200" height="1.400" fill="#6e6e6e"/><rect x="1002.2" y="21" width="1.200" height="1.400" fill="#6e6e6e"/><path d="M1009.3 2v20" stroke="#a0a0a0" stroke-width="1.200"/><rect x="1015.5" y="21" width="1.200" height="1.400" fill="#6e6e6e"/><rect x="1022.1" y="21" width="1.200" height="1.400" fill="#6e6e6e"/><rect x="1028.8" y="21" width="1.200" height="1.400" fill="#6e6e6e"/><rect x="1035.4" y="21" width="1.200" height="1.400" fill="#6e6e6e"/><rect x="1042.0" y="21" width="1.200" height="1.400" fill="#6e6e6e"/><rect x="1048.7" y="21" width="1.200" height="1.400" fill="#6e6e6e"/><rect x="1055.3" y="21" width="1.200" height="1.400" fill="#6e6e6e"/><rect x="1062.0" y="21" width="1.200" height="1.400" fill="#6e6e6e"/><rect x="1068.6" y="21" width="1.200" height="1.400" fill="#6e6e6e"/><path d="M1075.8 19v4" stroke="#8a8a8a" stroke-width="1.200"/><rect x="1081.9" y="21" width="1.200" height="1.400" fill="#6e6e6e"/><rect x="1088.5" y="21" width="1.200" height="1.400" fill="#6e6e6e"/><rect x="1095.2" y="21" width="1.200" height="1.400" fill="#6e6e6e"/><rect x="1101.8" y="21" width="1.200" height="1.400" fill="#6e6e6e"/><rect x="1108.5" y="21" width="1.200" height="1.400" fill="#6e6e6e"/><rect x="1115.1" y="21" width="1.200" height="1.400" fill="#6e6e6e"/><rect x="1121.8" y="21" width="1.200" height="1.400" fill="#6e6e6e"/><rect x="1128.4" y="21" width="1.200" height="1.400" fill="#6e6e6e"/><rect x="1135.1" y="21" width="1.200" height="1.400" fill="#6e6e6e"/><path d="M1142.2 19v4" stroke="#8a8a8a" stroke-width="1.200"/><rect x="1148.3" y="21" width="1.200" height="1.400" fill="#6e6e6e"/><rect x="1155.0" y="21" width="1.200" height="1.400" fill="#6e6e6e"/><rect x="1161.6" y="21" width="1.200" height="1.400" fill="#6e6e6e"/><rect x="1168.3" y="21" width="1.200" height="1.400" fill="#6e6e6e"/><path d="M1175.4 2v20" stroke="#a0a0a0" stroke-width="1.200"/><rect x="1181.6" y="21" width="1.200" height="1.400" fill="#6e6e6e"/><rect x="1188.2" y="21" width="1.200" height="1.400" fill="#6e6e6e"/><rect x="1194.8" y="21" width="1.200" height="1.400" fill="#6e6e6e"/><rect x="1201.5" y="21" width="1.200" height="1.400" fill="#6e6e6e"/><path d="M1208.6 19v4" stroke="#8a8a8a" stroke-width="1.200"/><rect x="1214.8" y="21" width="1.200" height="1.400" fill="#6e6e6e"/><rect x="1221.4" y="21" width="1.200" height="1.400" fill="#6e6e6e"/><rect x="1228.1" y="21" width="1.200" height="1.400" fill="#6e6e6e"/><rect x="1234.7" y="21" width="1.200" height="1.400" fill="#6e6e6e"/><rect x="1241.3" y="21" width="1.200" height="1.400" fill="#6e6e6e"/><rect x="1248.0" y="21" width="1.200" height="1.400" fill="#6e6e6e"/><rect x="1254.6" y="21" width="1.200" height="1.400" fill="#6e6e6e"/><rect x="1261.3" y="21" width="1.200" height="1.400" fill="#6e6e6e"/><rect x="1267.9" y="21" width="1.200" height="1.400" fill="#6e6e6e"/><path d="M1275.1 19v4" stroke="#8a8a8a" stroke-width="1.200"/><rect x="1281.2" y="21" width="1.200" height="1.400" fill="#6e6e6e"/><rect x="1287.9" y="21" width="1.200" height="1.400" fill="#6e6e6e"/><rect x="1294.5" y="21" width="1.200" height="1.400" fill="#6e6e6e"/><rect x="1301.1" y="21" width="1.200" height="1.400" fill="#6e6e6e"/><rect x="1307.8" y="21" width="1.200" height="1.400" fill="#6e6e6e"/><rect x="1314.4" y="21" width="1.200" height="1.400" fill="#6e6e6e"/><rect x="1321.1" y="21" width="1.200" height="1.400" fill="#6e6e6e"/><rect x="1327.7" y="21" width="1.200" height="1.400" fill="#6e6e6e"/><rect x="1334.4" y="21" width="1.200" height="1.400" fill="#6e6e6e"/><path d="M1341.5 2v20" stroke="#a0a0a0" stroke-width="1.200"/><rect x="1347.6" y="21" width="1.200" height="1.400" fill="#6e6e6e"/><rect x="1354.3" y="21" width="1.200" height="1.400" fill="#6e6e6e"/><rect x="1360.9" y="21" width="1.200" height="1.400" fill="#6e6e6e"/><rect x="1367.6" y="21" width="1.200" height="1.400" fill="#6e6e6e"/><rect x="1374.2" y="21" width="1.200" height="1.400" fill="#6e6e6e"/><rect x="1380.9" y="21" width="1.200" height="1.400" fill="#6e6e6e"/><rect x="1387.5" y="21" width="1.200" height="1.400" fill="#6e6e6e"/><rect x="1394.1" y="21" width="1.200" height="1.400" fill="#6e6e6e"/><rect x="1400.8" y="21" width="1.200" height="1.400" fill="#6e6e6e"/><path d="M1407.9 19v4" stroke="#8a8a8a" stroke-width="1.200"/><rect x="1414.1" y="21" width="1.200" height="1.400" fill="#6e6e6e"/><rect x="1420.7" y="21" width="1.200" height="1.400" fill="#6e6e6e"/><rect x="1427.4" y="21" width="1.200" height="1.400" fill="#6e6e6e"/><rect x="1434.0" y="21" width="1.200" height="1.400" fill="#6e6e6e"/><rect x="1440.7" y="21" width="1.200" height="1.400" fill="#6e6e6e"/><rect x="1447.3" y="21" width="1.200" height="1.400" fill="#6e6e6e"/><rect x="1453.9" y="21" width="1.200" height="1.400" fill="#6e6e6e"/><rect x="1460.6" y="21" width="1.200" height="1.400" fill="#6e6e6e"/><rect x="1467.2" y="21" width="1.200" height="1.400" fill="#6e6e6e"/><path d="M1474.4 19v4" stroke="#8a8a8a" stroke-width="1.200"/><rect x="1480.5" y="21" width="1.200" height="1.400" fill="#6e6e6e"/><rect x="1487.2" y="21" width="1.200" height="1.400" fill="#6e6e6e"/><rect x="1493.8" y="21" width="1.200" height="1.400" fill="#6e6e6e"/><rect x="1500.4" y="21" width="1.200" height="1.400" fill="#6e6e6e"/><path d="M1507.6 2v20" stroke="#a0a0a0" stroke-width="1.200"/><rect x="1513.7" y="21" width="1.200" height="1.400" fill="#6e6e6e"/><rect x="1520.4" y="21" width="1.200" height="1.400" fill="#6e6e6e"/><rect x="1527.0" y="21" width="1.200" height="1.400" fill="#6e6e6e"/><rect x="1533.7" y="21" width="1.200" height="1.400" fill="#6e6e6e"/><path d="M1540.8 19v4" stroke="#8a8a8a" stroke-width="1.200"/><rect x="1546.9" y="21" width="1.200" height="1.400" fill="#6e6e6e"/><rect x="1553.6" y="21" width="1.200" height="1.400" fill="#6e6e6e"/><rect x="1560.2" y="21" width="1.200" height="1.400" fill="#6e6e6e"/><rect x="1566.9" y="21" width="1.200" height="1.400" fill="#6e6e6e"/><rect x="1573.5" y="21" width="1.200" height="1.400" fill="#6e6e6e"/><rect x="1580.2" y="21" width="1.200" height="1.400" fill="#6e6e6e"/><rect x="1586.8" y="21" width="1.200" height="1.400" fill="#6e6e6e"/><rect x="1593.5" y="21" width="1.200" height="1.400" fill="#6e6e6e"/><rect x="1600.1" y="21" width="1.200" height="1.400" fill="#6e6e6e"/><path d="M1607.2 19v4" stroke="#8a8a8a" stroke-width="1.200"/><rect x="1613.4" y="21" width="1.200" height="1.400" fill="#6e6e6e"/><rect x="1620.0" y="21" width="1.200" height="1.400" fill="#6e6e6e"/><rect x="1626.7" y="21" width="1.200" height="1.400" fill="#6e6e6e"/><rect x="1633.3" y="21" width="1.200" height="1.400" fill="#6e6e6e"/><rect x="1640.0" y="21" width="1.200" height="1.400" fill="#6e6e6e"/><rect x="1646.6" y="21" width="1.200" height="1.400" fill="#6e6e6e"/><rect x="1653.2" y="21" width="1.200" height="1.400" fill="#6e6e6e"/><rect x="1659.9" y="21" width="1.200" height="1.400" fill="#6e6e6e"/><rect x="1666.5" y="21" width="1.200" height="1.400" fill="#6e6e6e"/><path d="M1673.7 2v20" stroke="#a0a0a0" stroke-width="1.200"/><rect x="10" y="1.500" width="9" height="21" fill="#6c71c8"/></svg>
<span style="top:1322.5px;font-size:17px;line-height:19px;color:#7c84e0;left:-138px;width:400px;text-align:center;">0</span>
<span style="top:1322.5px;font-size:17px;line-height:19px;color:#b4b4b4;left:-82.765px;width:400px;text-align:center;">10</span>
<span style="top:1322.5px;font-size:17px;line-height:19px;color:#b4b4b4;left:-16.329999999999984px;width:400px;text-align:center;">20</span>
<span style="top:1322.5px;font-size:17px;line-height:19px;color:#b4b4b4;left:50.10500000000002px;width:400px;text-align:center;">30</span>
<span style="top:1322.5px;font-size:17px;line-height:19px;color:#b4b4b4;left:116.54000000000002px;width:400px;text-align:center;">40</span>
<span style="top:1322.5px;font-size:17px;line-height:19px;color:#b4b4b4;left:182.97500000000002px;width:400px;text-align:center;">50</span>
<span style="top:1322.5px;font-size:17px;line-height:19px;color:#b4b4b4;left:249.41000000000003px;width:400px;text-align:center;">60</span>
<span style="top:1322.5px;font-size:17px;line-height:19px;color:#b4b4b4;left:315.845px;width:400px;text-align:center;">70</span>
<span style="top:1322.5px;font-size:17px;line-height:19px;color:#b4b4b4;left:382.28px;width:400px;text-align:center;">80</span>
<span style="top:1322.5px;font-size:17px;line-height:19px;color:#b4b4b4;left:448.71500000000003px;width:400px;text-align:center;">90</span>
<span style="top:1322.5px;font-size:17px;line-height:19px;color:#b4b4b4;left:515.15px;width:400px;text-align:center;">100</span>
<span style="top:1322.5px;font-size:17px;line-height:19px;color:#b4b4b4;left:581.585px;width:400px;text-align:center;">110</span>
<span style="top:1322.5px;font-size:17px;line-height:19px;color:#b4b4b4;left:648.02px;width:400px;text-align:center;">120</span>
<span style="top:1322.5px;font-size:17px;line-height:19px;color:#b4b4b4;left:714.455px;width:400px;text-align:center;">130</span>
<span style="top:1322.5px;font-size:17px;line-height:19px;color:#b4b4b4;left:780.89px;width:400px;text-align:center;">140</span>
<span style="top:1322.5px;font-size:17px;line-height:19px;color:#b4b4b4;left:847.325px;width:400px;text-align:center;">150</span>
<span style="top:1322.5px;font-size:17px;line-height:19px;color:#b4b4b4;left:913.76px;width:400px;text-align:center;">160</span>
<span style="top:1322.5px;font-size:17px;line-height:19px;color:#b4b4b4;left:980.1949999999999px;width:400px;text-align:center;">170</span>
<span style="top:1322.5px;font-size:17px;line-height:19px;color:#b4b4b4;left:1046.63px;width:400px;text-align:center;">180</span>
<span style="top:1322.5px;font-size:17px;line-height:19px;color:#b4b4b4;left:1113.065px;width:400px;text-align:center;">190</span>
<span style="top:1322.5px;font-size:17px;line-height:19px;color:#b4b4b4;left:1179.5px;width:400px;text-align:center;">200</span>
<span style="top:1322.5px;font-size:17px;line-height:19px;color:#b4b4b4;left:1245.935px;width:400px;text-align:center;">210</span>
<span style="top:1322.5px;font-size:17px;line-height:19px;color:#b4b4b4;left:1312.3700000000001px;width:400px;text-align:center;">220</span>
<span style="top:1322.5px;font-size:17px;line-height:19px;color:#b4b4b4;left:1378.805px;width:400px;text-align:center;">230</span>
<span style="top:1322.5px;font-size:17px;line-height:19px;color:#b4b4b4;left:1445.24px;width:400px;text-align:center;">240</span>
<span style="left:1690px;top:1322.5px;width:26px;overflow:hidden;font-size:17px;line-height:19px;color:#b4b4b4">250</span>
<div style="left:45.5px;top:1349px;width:102px;height:24px;background:#1a1a1a;border-radius:5px;"></div>
<span style="top:1351.0px;font-size:17px;line-height:19px;color:#e4e4e4;left:-103.5px;width:400px;text-align:center;">0 F</span>
<div style="left:156.5px;top:1352px;width:1452.5px;height:17px;background:#3e3e3e;border-radius:3px;"></div>
<span style="top:1351.0px;font-size:17px;line-height:19px;color:#c4c4c4;left:171px;">0 F</span>
<span style="top:1351.0px;font-size:17px;line-height:19px;color:#c4c4c4;left:1191.5px;width:400px;text-align:right;">250 F</span>
<svg style="left:160px;top:1355px" width="6" height="11"><path d="M.5 0v11M2.500 0v11M4.500 0v11" stroke="#5a5a5a" stroke-width="1"/></svg>
<svg style="left:1600px;top:1355px" width="6" height="11"><path d="M.5 0v11M2.500 0v11M4.500 0v11" stroke="#5a5a5a" stroke-width="1"/></svg>
<div style="left:1616px;top:1349px;width:102px;height:24px;background:#1a1a1a;border-radius:5px;"></div>
<span style="top:1351.0px;font-size:17px;line-height:19px;color:#e4e4e4;left:1466px;width:400px;text-align:center;">250 F</span>
<div style="left:0px;top:1373px;width:2560px;height:27px;background:#1e1e1e;"></div>
<svg style="left:4px;top:1381px;" width="16" height="14"><path d="M0 2h15M0 7h15M0 12h15" stroke="#a0a0a0" stroke-width="2"/></svg>
<svg style="left:28px;top:1380px;" width="18" height="16"><circle cx="8" cy="8.500" r="6.500" fill="none" stroke="#a0a0a0" stroke-width="1.500"/><path d="M4.500 8.500l3 3L16 2.500" fill="none" stroke="#a0a0a0" stroke-width="1.700"/></svg>
</body></html>
